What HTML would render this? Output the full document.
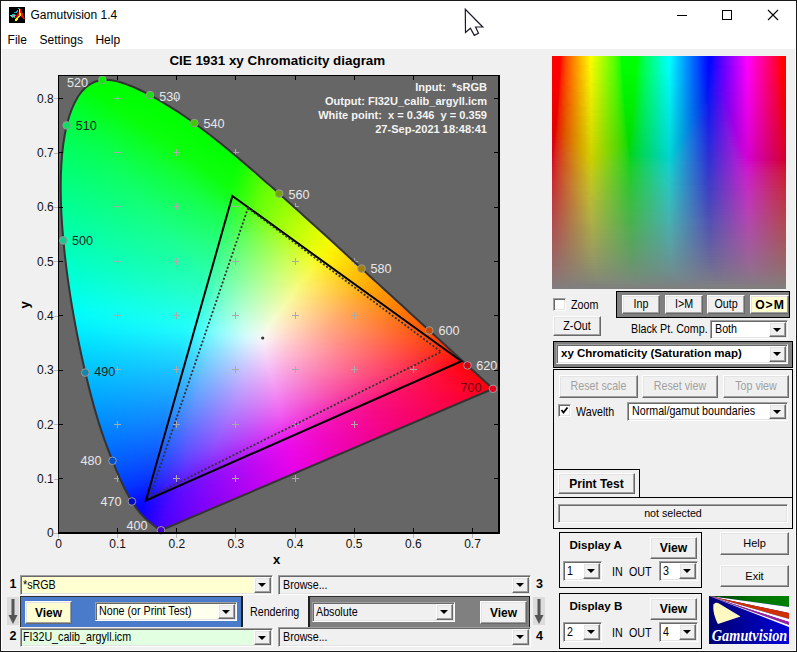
<!DOCTYPE html><html><head><meta charset="utf-8"><title>Gamutvision</title><style>
*{margin:0;padding:0;box-sizing:border-box}
html,body{width:797px;height:652px;overflow:hidden}
body{position:relative;background:#fff;font-family:"Liberation Sans",sans-serif;color:#000}
.a{position:absolute}
.b{position:absolute;background:#f0f0f0;border:1px solid;border-color:#fff #696969 #696969 #fff;box-shadow:inset -1px -1px #a0a0a0,inset 1px 1px #e3e3e3;text-align:center;white-space:nowrap;font-size:10.7px}
.s{position:absolute;background:#fff;border:1px solid;border-color:#a0a0a0 #fff #fff #a0a0a0;box-shadow:inset 1px 1px #696969,inset -1px -1px #e3e3e3;white-space:nowrap;font-size:10.7px;overflow:hidden}
.dd{position:absolute;top:1px;right:1px;bottom:1px;width:17px;background:#f0f0f0;border:1px solid;border-color:#fff #696969 #696969 #fff;box-shadow:inset -1px -1px #a0a0a0,inset 1px 1px #e3e3e3}
.dd:after{content:"";position:absolute;left:3px;top:5px;border-style:solid;border-width:4px 4px 0 4px;border-color:#000 transparent transparent transparent}
.t{position:absolute;white-space:nowrap;font-size:10.7px;line-height:1}
.pn{position:absolute;border:1px solid #000}
</style></head><body>
<div class="a" style="left:2px;top:49px;width:793px;height:601px;background:#f0f0f0"></div>
<div class="a" style="left:0;top:0;width:797px;height:652px;border:1px solid #1a1a1a"></div>
<svg class="a" style="left:9px;top:7px" width="16" height="16" viewBox="0 0 16 16" shape-rendering="crispEdges"><rect width="16" height="16" fill="#000"/><rect x="9" y="1" width="1" height="1" fill="#10b0b0"/><rect x="10" y="1" width="1" height="1" fill="#ff0000"/><rect x="10" y="2" width="1" height="1" fill="#ffff00"/><rect x="11" y="2" width="1" height="1" fill="#ff0000"/><rect x="8" y="3" width="1" height="1" fill="#10b0b0"/><rect x="10" y="3" width="1" height="1" fill="#ffff00"/><rect x="11" y="3" width="1" height="1" fill="#ff0000"/><rect x="7" y="4" width="1" height="1" fill="#10b0b0"/><rect x="8" y="4" width="1" height="1" fill="#10b0b0"/><rect x="10" y="4" width="1" height="1" fill="#ffff00"/><rect x="11" y="4" width="1" height="1" fill="#ff0000"/><rect x="12" y="4" width="1" height="1" fill="#ff0000"/><rect x="5" y="5" width="1" height="1" fill="#10b0b0"/><rect x="6" y="5" width="1" height="1" fill="#10b0b0"/><rect x="7" y="5" width="1" height="1" fill="#10b0b0"/><rect x="9" y="5" width="1" height="1" fill="#a00000"/><rect x="10" y="5" width="1" height="1" fill="#ffff00"/><rect x="11" y="5" width="1" height="1" fill="#ff0000"/><rect x="12" y="5" width="1" height="1" fill="#ff0000"/><rect x="8" y="6" width="1" height="1" fill="#a00000"/><rect x="9" y="6" width="1" height="1" fill="#a00000"/><rect x="10" y="6" width="1" height="1" fill="#ffff00"/><rect x="11" y="6" width="1" height="1" fill="#ffff00"/><rect x="12" y="6" width="1" height="1" fill="#ff0000"/><rect x="13" y="6" width="1" height="1" fill="#ff0000"/><rect x="3" y="7" width="1" height="1" fill="#10b0b0"/><rect x="4" y="7" width="1" height="1" fill="#a0a0a0"/><rect x="5" y="7" width="1" height="1" fill="#10b0b0"/><rect x="8" y="7" width="1" height="1" fill="#a00000"/><rect x="9" y="7" width="1" height="1" fill="#ff0000"/><rect x="10" y="7" width="1" height="1" fill="#ffff00"/><rect x="11" y="7" width="1" height="1" fill="#ffff00"/><rect x="12" y="7" width="1" height="1" fill="#ff0000"/><rect x="13" y="7" width="1" height="1" fill="#ff0000"/><rect x="1" y="8" width="1" height="1" fill="#00ffff"/><rect x="2" y="8" width="1" height="1" fill="#00ffff"/><rect x="3" y="8" width="1" height="1" fill="#a0a0a0"/><rect x="4" y="8" width="1" height="1" fill="#a0a0a0"/><rect x="5" y="8" width="1" height="1" fill="#a0a0a0"/><rect x="6" y="8" width="1" height="1" fill="#10b0b0"/><rect x="7" y="8" width="1" height="1" fill="#a00000"/><rect x="8" y="8" width="1" height="1" fill="#ff0000"/><rect x="9" y="8" width="1" height="1" fill="#ff0000"/><rect x="10" y="8" width="1" height="1" fill="#ffff00"/><rect x="11" y="8" width="1" height="1" fill="#ffff00"/><rect x="12" y="8" width="1" height="1" fill="#ff0000"/><rect x="13" y="8" width="1" height="1" fill="#ff0000"/><rect x="2" y="9" width="1" height="1" fill="#a0a0a0"/><rect x="3" y="9" width="1" height="1" fill="#a0a0a0"/><rect x="4" y="9" width="1" height="1" fill="#a0a0a0"/><rect x="5" y="9" width="1" height="1" fill="#a0a0a0"/><rect x="7" y="9" width="1" height="1" fill="#a00000"/><rect x="8" y="9" width="1" height="1" fill="#ff0000"/><rect x="9" y="9" width="1" height="1" fill="#ffff00"/><rect x="10" y="9" width="1" height="1" fill="#ffff00"/><rect x="12" y="9" width="1" height="1" fill="#ff0000"/><rect x="13" y="9" width="1" height="1" fill="#ff0000"/><rect x="14" y="9" width="1" height="1" fill="#ff0000"/><rect x="3" y="10" width="1" height="1" fill="#10b0b0"/><rect x="5" y="10" width="1" height="1" fill="#10b0b0"/><rect x="6" y="10" width="1" height="1" fill="#a00000"/><rect x="7" y="10" width="1" height="1" fill="#ff0000"/><rect x="8" y="10" width="1" height="1" fill="#ffff00"/><rect x="9" y="10" width="1" height="1" fill="#ffff00"/><rect x="13" y="10" width="1" height="1" fill="#ff0000"/><rect x="14" y="10" width="1" height="1" fill="#ff0000"/><rect x="6" y="11" width="1" height="1" fill="#a00000"/><rect x="7" y="11" width="1" height="1" fill="#ffff00"/><rect x="8" y="11" width="1" height="1" fill="#ffff00"/><rect x="14" y="11" width="1" height="1" fill="#ff0000"/><rect x="15" y="11" width="1" height="1" fill="#ff0000"/><rect x="6" y="12" width="1" height="1" fill="#ffff00"/><rect x="7" y="12" width="1" height="1" fill="#ffff00"/><rect x="8" y="12" width="1" height="1" fill="#ffff00"/><rect x="6" y="13" width="1" height="1" fill="#ffff00"/><rect x="7" y="13" width="1" height="1" fill="#ffff00"/></svg>
<div class="t" style="left:30.5px;top:9.2px;font-size:12.00px;color:#000">Gamutvision 1.4</div>
<div class="a" style="left:677px;top:15px;width:10px;height:1px;background:#000"></div>
<div class="a" style="left:722px;top:10px;width:10px;height:10px;border:1px solid #000"></div>
<svg class="a" style="left:767px;top:9px" width="12" height="12" viewBox="0 0 12 12"><path d="M1 1 L11 11 M11 1 L1 11" stroke="#000" stroke-width="1.1"/></svg>
<div class="t" style="left:7.6px;top:34.1px;font-size:12.00px">File</div>
<div class="t" style="left:39.6px;top:34.1px;font-size:12.00px">Settings</div>
<div class="t" style="left:95.4px;top:34.1px;font-size:12.00px">Help</div>
<svg class="a" style="left:0;top:0" width="797" height="40"><path d="M465.3 9.3 L465.5 32.4 L470.4 28.2 L474.3 35.4 L478.5 33.3 L475.6 27 L482.8 27 Z" fill="#fff" stroke="#1a1a2a" stroke-width="1.2" stroke-linejoin="miter"/></svg>
<svg class="a" style="left:0;top:0;font-family:Liberation Sans,sans-serif" width="797" height="652" viewBox="0 0 797 652"><defs><clipPath id="lc"><path d="M160.99 530.29 L160.95 530.30 L160.92 530.30 L160.89 530.30 L160.85 530.30 L160.81 530.29 L160.77 530.29 L160.73 530.29 L160.68 530.29 L160.63 530.29 L160.58 530.29 L160.52 530.30 L160.47 530.30 L160.41 530.30 L160.34 530.30 L160.28 530.29 L160.21 530.28 L160.14 530.25 L160.06 530.22 L159.97 530.18 L159.87 530.13 L159.75 530.07 L159.63 530.00 L159.50 529.93 L159.36 529.84 L159.22 529.75 L159.07 529.65 L158.91 529.54 L158.75 529.42 L158.58 529.29 L158.39 529.15 L158.18 528.99 L157.96 528.82 L157.72 528.64 L157.47 528.44 L157.20 528.23 L156.93 528.00 L156.65 527.76 L156.36 527.51 L156.05 527.25 L155.73 526.98 L155.38 526.70 L155.02 526.40 L154.63 526.09 L154.22 525.76 L153.77 525.40 L153.30 525.02 L152.79 524.62 L152.26 524.20 L151.70 523.75 L151.11 523.28 L150.51 522.80 L149.88 522.29 L149.22 521.76 L148.53 521.18 L147.80 520.57 L147.04 519.90 L146.24 519.19 L145.41 518.43 L144.55 517.62 L143.66 516.77 L142.75 515.86 L141.80 514.88 L140.81 513.80 L139.75 512.59 L138.63 511.22 L137.44 509.68 L136.16 507.94 L134.81 506.00 L133.39 503.86 L131.89 501.50 L130.33 498.92 L128.69 496.08 L126.98 492.96 L125.19 489.53 L123.32 485.75 L121.36 481.59 L119.31 477.04 L117.16 472.08 L114.89 466.67 L112.49 460.81 L109.98 454.47 L107.35 447.63 L104.65 440.27 L101.90 432.35 L99.13 423.87 L96.36 414.79 L93.60 405.13 L90.84 394.88 L88.09 384.05 L85.35 372.64 L82.62 360.68 L79.93 348.23 L77.30 335.36 L74.78 322.16 L72.40 308.70 L70.18 295.07 L68.14 281.34 L66.32 267.60 L64.71 253.93 L63.35 240.41 L62.25 227.13 L61.43 214.13 L60.90 201.44 L60.69 189.11 L60.81 177.18 L61.27 165.69 L62.08 154.70 L63.26 144.27 L64.80 134.47 L66.72 125.35 L69.02 116.98 L71.67 109.40 L74.65 102.64 L77.94 96.76 L81.51 91.78 L85.32 87.74 L89.35 84.60 L93.57 82.28 L97.94 80.75 L102.44 79.94 L107.03 79.78 L111.71 80.20 L116.44 81.11 L121.22 82.43 L126.04 84.07 L130.87 85.95 L135.70 88.03 L140.51 90.27 L145.28 92.64 L149.99 95.09 L154.63 97.61 L159.20 100.19 L163.70 102.83 L168.16 105.53 L172.58 108.30 L176.97 111.13 L181.32 114.03 L185.66 117.00 L189.98 120.03 L194.29 123.13 L198.58 126.28 L202.88 129.49 L207.16 132.75 L211.43 136.07 L215.69 139.42 L219.94 142.83 L224.19 146.27 L228.42 149.75 L232.64 153.26 L236.87 156.81 L241.09 160.38 L245.31 163.99 L249.53 167.62 L253.75 171.27 L257.98 174.95 L262.21 178.65 L266.45 182.38 L270.69 186.12 L274.92 189.87 L279.15 193.64 L283.37 197.42 L287.59 201.21 L291.80 205.00 L296.00 208.80 L300.21 212.60 L304.41 216.40 L308.61 220.20 L312.80 223.99 L316.98 227.78 L321.14 231.56 L325.29 235.33 L329.41 239.10 L333.52 242.85 L337.60 246.58 L341.66 250.30 L345.70 254.00 L349.72 257.68 L353.70 261.33 L357.66 264.95 L361.59 268.55 L365.49 272.13 L369.35 275.66 L373.17 279.17 L376.95 282.63 L380.69 286.05 L384.39 289.42 L388.04 292.75 L391.64 296.03 L395.18 299.26 L398.67 302.45 L402.10 305.60 L405.46 308.68 L408.74 311.70 L411.95 314.65 L415.06 317.50 L418.07 320.26 L420.99 322.94 L423.83 325.54 L426.60 328.07 L429.31 330.54 L431.96 332.96 L434.54 335.33 L437.06 337.63 L439.50 339.86 L441.85 342.00 L444.10 344.05 L446.27 346.02 L448.34 347.90 L450.34 349.71 L452.25 351.45 L454.09 353.13 L455.86 354.75 L457.55 356.31 L459.17 357.80 L460.71 359.22 L462.19 360.58 L463.60 361.88 L464.94 363.12 L466.22 364.29 L467.45 365.42 L468.63 366.49 L469.75 367.51 L470.83 368.48 L471.85 369.41 L472.83 370.31 L473.77 371.16 L474.67 371.98 L475.53 372.77 L476.35 373.54 L477.15 374.27 L477.92 374.98 L478.67 375.67 L479.39 376.33 L480.09 376.97 L480.76 377.58 L481.40 378.18 L482.02 378.74 L482.61 379.29 L483.17 379.81 L483.72 380.30 L484.24 380.77 L484.73 381.22 L485.21 381.64 L485.66 382.04 L486.08 382.42 L486.48 382.78 L486.85 383.12 L487.21 383.45 L487.54 383.76 L487.86 384.05 L488.16 384.33 L488.44 384.59 L488.71 384.84 L488.97 385.08 L489.22 385.30 L489.45 385.51 L489.66 385.71 L489.87 385.90 L490.05 386.07 L490.22 386.22 L490.37 386.36 L490.51 386.49 L490.64 386.61 L490.76 386.71 L490.87 386.82 L490.99 386.92 L491.10 387.03 L491.21 387.13 L491.31 387.22 L491.40 387.31 L491.49 387.39 L491.58 387.47 L491.66 387.54 L491.74 387.62 L491.82 387.69 L491.90 387.76 L491.98 387.84 L492.07 387.92 L492.15 387.99 L492.23 388.07 L492.31 388.14 L492.39 388.21 L492.46 388.28 L492.53 388.34 L492.59 388.40 L492.65 388.45 L492.70 388.50 L492.74 388.54 L492.79 388.58 L492.82 388.61 L492.86 388.64 L492.88 388.67 L492.91 388.69 L492.93 388.71 L492.94 388.72 L492.96 388.73 L492.97 388.75 L492.98 388.76 L492.99 388.77 L493.00 388.78 Z"/></clipPath><linearGradient id="g0" gradientUnits="userSpaceOnUse" x1="92.5" x2="121.5" y1="0" y2="0"><stop offset="0.000" stop-color="#00ff01"/><stop offset="1.000" stop-color="#00ff00"/></linearGradient><linearGradient id="g1" gradientUnits="userSpaceOnUse" x1="88.5" x2="127.5" y1="0" y2="0"><stop offset="0.000" stop-color="#00ff02"/><stop offset="1.000" stop-color="#00ff00"/></linearGradient><linearGradient id="g2" gradientUnits="userSpaceOnUse" x1="85.5" x2="132.5" y1="0" y2="0"><stop offset="0.000" stop-color="#00ff04"/><stop offset="1.000" stop-color="#00ff00"/></linearGradient><linearGradient id="g3" gradientUnits="userSpaceOnUse" x1="82.5" x2="137.5" y1="0" y2="0"><stop offset="0.000" stop-color="#00ff07"/><stop offset="0.691" stop-color="#01ff01"/><stop offset="1.000" stop-color="#00ff00"/></linearGradient><linearGradient id="g4" gradientUnits="userSpaceOnUse" x1="80.5" x2="141.5" y1="0" y2="0"><stop offset="0.000" stop-color="#00ff0c"/><stop offset="0.393" stop-color="#01ff02"/><stop offset="1.000" stop-color="#00ff00"/></linearGradient><linearGradient id="g5" gradientUnits="userSpaceOnUse" x1="79.5" x2="145.5" y1="0" y2="0"><stop offset="0.000" stop-color="#00ff10"/><stop offset="0.333" stop-color="#02ff03"/><stop offset="1.000" stop-color="#00ff00"/></linearGradient><linearGradient id="g6" gradientUnits="userSpaceOnUse" x1="77.5" x2="149.5" y1="0" y2="0"><stop offset="0.000" stop-color="#00ff15"/><stop offset="0.319" stop-color="#02ff04"/><stop offset="1.000" stop-color="#00ff00"/></linearGradient><linearGradient id="g7" gradientUnits="userSpaceOnUse" x1="76.5" x2="153.5" y1="0" y2="0"><stop offset="0.000" stop-color="#00ff1a"/><stop offset="0.325" stop-color="#02ff05"/><stop offset="1.000" stop-color="#00ff00"/></linearGradient><linearGradient id="g8" gradientUnits="userSpaceOnUse" x1="74.5" x2="157.5" y1="0" y2="0"><stop offset="0.000" stop-color="#00ff20"/><stop offset="0.337" stop-color="#02ff06"/><stop offset="1.000" stop-color="#00ff00"/></linearGradient><linearGradient id="g9" gradientUnits="userSpaceOnUse" x1="73.5" x2="160.5" y1="0" y2="0"><stop offset="0.000" stop-color="#00ff24"/><stop offset="0.356" stop-color="#03ff07"/><stop offset="1.000" stop-color="#01ff01"/></linearGradient><linearGradient id="g10" gradientUnits="userSpaceOnUse" x1="72.5" x2="164.5" y1="0" y2="0"><stop offset="0.000" stop-color="#00ff28"/><stop offset="0.380" stop-color="#03ff07"/><stop offset="1.000" stop-color="#00ff00"/></linearGradient><linearGradient id="g11" gradientUnits="userSpaceOnUse" x1="71.5" x2="167.5" y1="0" y2="0"><stop offset="0.000" stop-color="#00ff2c"/><stop offset="0.406" stop-color="#04ff07"/><stop offset="1.000" stop-color="#01ff01"/></linearGradient><linearGradient id="g12" gradientUnits="userSpaceOnUse" x1="70.5" x2="171.5" y1="0" y2="0"><stop offset="0.000" stop-color="#00ff30"/><stop offset="0.426" stop-color="#04ff08"/><stop offset="1.000" stop-color="#00ff00"/></linearGradient><linearGradient id="g13" gradientUnits="userSpaceOnUse" x1="69.5" x2="174.5" y1="0" y2="0"><stop offset="0.000" stop-color="#00ff33"/><stop offset="0.448" stop-color="#05ff08"/><stop offset="1.000" stop-color="#00ff00"/></linearGradient><linearGradient id="g14" gradientUnits="userSpaceOnUse" x1="69.5" x2="177.5" y1="0" y2="0"><stop offset="0.000" stop-color="#00ff36"/><stop offset="0.463" stop-color="#05ff08"/><stop offset="1.000" stop-color="#01ff01"/></linearGradient><linearGradient id="g15" gradientUnits="userSpaceOnUse" x1="68.5" x2="180.5" y1="0" y2="0"><stop offset="0.000" stop-color="#00ff39"/><stop offset="0.482" stop-color="#06ff08"/><stop offset="1.000" stop-color="#01ff01"/></linearGradient><linearGradient id="g16" gradientUnits="userSpaceOnUse" x1="67.5" x2="183.5" y1="0" y2="0"><stop offset="0.000" stop-color="#00ff3c"/><stop offset="0.500" stop-color="#06ff09"/><stop offset="1.000" stop-color="#01ff01"/></linearGradient><linearGradient id="g17" gradientUnits="userSpaceOnUse" x1="66.5" x2="186.5" y1="0" y2="0"><stop offset="0.000" stop-color="#00ff3f"/><stop offset="0.383" stop-color="#06ff15"/><stop offset="0.575" stop-color="#06ff07"/><stop offset="1.000" stop-color="#01ff01"/></linearGradient><linearGradient id="g18" gradientUnits="userSpaceOnUse" x1="66.5" x2="189.5" y1="0" y2="0"><stop offset="0.000" stop-color="#00ff42"/><stop offset="0.374" stop-color="#06ff18"/><stop offset="0.561" stop-color="#07ff08"/><stop offset="1.000" stop-color="#01ff01"/></linearGradient><linearGradient id="g19" gradientUnits="userSpaceOnUse" x1="65.5" x2="192.5" y1="0" y2="0"><stop offset="0.000" stop-color="#00ff45"/><stop offset="0.362" stop-color="#06ff1d"/><stop offset="0.559" stop-color="#07ff09"/><stop offset="1.000" stop-color="#01ff01"/></linearGradient><linearGradient id="g20" gradientUnits="userSpaceOnUse" x1="65.5" x2="194.5" y1="0" y2="0"><stop offset="0.000" stop-color="#00ff47"/><stop offset="0.364" stop-color="#07ff20"/><stop offset="0.566" stop-color="#08ff09"/><stop offset="1.000" stop-color="#01ff01"/></linearGradient><linearGradient id="g21" gradientUnits="userSpaceOnUse" x1="64.5" x2="197.5" y1="0" y2="0"><stop offset="0.000" stop-color="#00ff4a"/><stop offset="0.361" stop-color="#07ff23"/><stop offset="0.571" stop-color="#08ff0a"/><stop offset="1.000" stop-color="#01ff01"/></linearGradient><linearGradient id="g22" gradientUnits="userSpaceOnUse" x1="64.5" x2="200.5" y1="0" y2="0"><stop offset="0.000" stop-color="#00ff4c"/><stop offset="0.360" stop-color="#07ff25"/><stop offset="0.574" stop-color="#08ff0b"/><stop offset="1.000" stop-color="#01ff01"/></linearGradient><linearGradient id="g23" gradientUnits="userSpaceOnUse" x1="63.5" x2="203.5" y1="0" y2="0"><stop offset="0.000" stop-color="#00ff4e"/><stop offset="0.357" stop-color="#08ff29"/><stop offset="0.586" stop-color="#09ff0b"/><stop offset="1.000" stop-color="#01ff01"/></linearGradient><linearGradient id="g24" gradientUnits="userSpaceOnUse" x1="63.5" x2="205.5" y1="0" y2="0"><stop offset="0.000" stop-color="#00ff50"/><stop offset="0.359" stop-color="#08ff2b"/><stop offset="0.592" stop-color="#09ff0b"/><stop offset="1.000" stop-color="#01ff01"/></linearGradient><linearGradient id="g25" gradientUnits="userSpaceOnUse" x1="62.5" x2="208.5" y1="0" y2="0"><stop offset="0.000" stop-color="#00ff53"/><stop offset="0.342" stop-color="#08ff30"/><stop offset="0.603" stop-color="#09ff0c"/><stop offset="1.000" stop-color="#01ff01"/></linearGradient><linearGradient id="g26" gradientUnits="userSpaceOnUse" x1="62.5" x2="210.5" y1="0" y2="0"><stop offset="0.000" stop-color="#00ff54"/><stop offset="0.338" stop-color="#08ff33"/><stop offset="0.615" stop-color="#0aff0c"/><stop offset="1.000" stop-color="#01ff01"/></linearGradient><linearGradient id="g27" gradientUnits="userSpaceOnUse" x1="62.5" x2="213.5" y1="0" y2="0"><stop offset="0.000" stop-color="#00ff56"/><stop offset="0.338" stop-color="#09ff35"/><stop offset="0.623" stop-color="#0aff0c"/><stop offset="1.000" stop-color="#01ff01"/></linearGradient><linearGradient id="g28" gradientUnits="userSpaceOnUse" x1="61.5" x2="216.5" y1="0" y2="0"><stop offset="0.000" stop-color="#00ff59"/><stop offset="0.316" stop-color="#08ff3a"/><stop offset="0.639" stop-color="#0aff0c"/><stop offset="1.000" stop-color="#01ff01"/></linearGradient><linearGradient id="g29" gradientUnits="userSpaceOnUse" x1="61.5" x2="218.5" y1="0" y2="0"><stop offset="0.000" stop-color="#00ff5a"/><stop offset="0.312" stop-color="#09ff3d"/><stop offset="0.650" stop-color="#0aff0c"/><stop offset="1.000" stop-color="#01ff01"/></linearGradient><linearGradient id="g30" gradientUnits="userSpaceOnUse" x1="61.5" x2="221.5" y1="0" y2="0"><stop offset="0.000" stop-color="#00ff5c"/><stop offset="0.312" stop-color="#09ff3f"/><stop offset="0.656" stop-color="#0aff0c"/><stop offset="1.000" stop-color="#01ff01"/></linearGradient><linearGradient id="g31" gradientUnits="userSpaceOnUse" x1="60.5" x2="223.5" y1="0" y2="0"><stop offset="0.000" stop-color="#00ff5e"/><stop offset="0.301" stop-color="#09ff43"/><stop offset="0.552" stop-color="#0cff1c"/><stop offset="0.693" stop-color="#0aff0b"/><stop offset="1.000" stop-color="#01ff01"/></linearGradient><linearGradient id="g32" gradientUnits="userSpaceOnUse" x1="60.5" x2="226.5" y1="0" y2="0"><stop offset="0.000" stop-color="#00ff60"/><stop offset="0.295" stop-color="#09ff46"/><stop offset="0.542" stop-color="#0cff20"/><stop offset="0.681" stop-color="#0aff0c"/><stop offset="1.000" stop-color="#01ff01"/></linearGradient><linearGradient id="g33" gradientUnits="userSpaceOnUse" x1="60.5" x2="228.5" y1="0" y2="0"><stop offset="0.000" stop-color="#00ff62"/><stop offset="0.298" stop-color="#09ff47"/><stop offset="0.548" stop-color="#0dff21"/><stop offset="0.690" stop-color="#0aff0c"/><stop offset="1.000" stop-color="#01ff01"/></linearGradient><linearGradient id="g34" gradientUnits="userSpaceOnUse" x1="60.5" x2="230.5" y1="0" y2="0"><stop offset="0.000" stop-color="#00ff64"/><stop offset="0.300" stop-color="#0aff49"/><stop offset="0.547" stop-color="#0dff24"/><stop offset="0.688" stop-color="#0bff0d"/><stop offset="1.000" stop-color="#01ff01"/></linearGradient><linearGradient id="g35" gradientUnits="userSpaceOnUse" x1="59.5" x2="233.5" y1="0" y2="0"><stop offset="0.000" stop-color="#00ff66"/><stop offset="0.293" stop-color="#0aff4c"/><stop offset="0.546" stop-color="#0eff26"/><stop offset="0.690" stop-color="#0bff0d"/><stop offset="1.000" stop-color="#01ff01"/></linearGradient><linearGradient id="g36" gradientUnits="userSpaceOnUse" x1="59.5" x2="235.5" y1="0" y2="0"><stop offset="0.000" stop-color="#00ff68"/><stop offset="0.295" stop-color="#0aff4e"/><stop offset="0.551" stop-color="#0eff28"/><stop offset="0.699" stop-color="#0bff0d"/><stop offset="1.000" stop-color="#02ff01"/></linearGradient><linearGradient id="g37" gradientUnits="userSpaceOnUse" x1="59.5" x2="238.5" y1="0" y2="0"><stop offset="0.000" stop-color="#00ff6a"/><stop offset="0.302" stop-color="#0bff4f"/><stop offset="0.553" stop-color="#0eff29"/><stop offset="0.698" stop-color="#0bff0e"/><stop offset="0.989" stop-color="#03ff01"/><stop offset="1.000" stop-color="#05ff01"/></linearGradient><linearGradient id="g38" gradientUnits="userSpaceOnUse" x1="59.5" x2="240.5" y1="0" y2="0"><stop offset="0.000" stop-color="#00ff6b"/><stop offset="0.304" stop-color="#0bff51"/><stop offset="0.558" stop-color="#0fff2b"/><stop offset="0.707" stop-color="#0bff0e"/><stop offset="0.978" stop-color="#04ff01"/><stop offset="1.000" stop-color="#09ff01"/></linearGradient><linearGradient id="g39" gradientUnits="userSpaceOnUse" x1="59.5" x2="242.5" y1="0" y2="0"><stop offset="0.000" stop-color="#00ff6d"/><stop offset="0.306" stop-color="#0bff53"/><stop offset="0.563" stop-color="#0fff2c"/><stop offset="0.716" stop-color="#0cff0e"/><stop offset="0.967" stop-color="#05ff01"/><stop offset="1.000" stop-color="#0eff01"/></linearGradient><linearGradient id="g40" gradientUnits="userSpaceOnUse" x1="59.5" x2="245.5" y1="0" y2="0"><stop offset="0.000" stop-color="#00ff6f"/><stop offset="0.306" stop-color="#0cff54"/><stop offset="0.565" stop-color="#0fff2d"/><stop offset="0.715" stop-color="#0cff0e"/><stop offset="0.946" stop-color="#05ff02"/><stop offset="0.995" stop-color="#15ff01"/><stop offset="1.000" stop-color="#18ff01"/></linearGradient><linearGradient id="g41" gradientUnits="userSpaceOnUse" x1="58.5" x2="247.5" y1="0" y2="0"><stop offset="0.000" stop-color="#00ff71"/><stop offset="0.307" stop-color="#0cff57"/><stop offset="0.571" stop-color="#10ff2f"/><stop offset="0.725" stop-color="#0cff0e"/><stop offset="0.937" stop-color="#06ff03"/><stop offset="0.984" stop-color="#17ff01"/><stop offset="1.000" stop-color="#20ff01"/></linearGradient><linearGradient id="g42" gradientUnits="userSpaceOnUse" x1="58.5" x2="249.5" y1="0" y2="0"><stop offset="0.000" stop-color="#00ff73"/><stop offset="0.309" stop-color="#0cff59"/><stop offset="0.576" stop-color="#10ff30"/><stop offset="0.728" stop-color="#0cff0f"/><stop offset="0.927" stop-color="#07ff03"/><stop offset="0.974" stop-color="#19ff01"/><stop offset="1.000" stop-color="#29ff01"/></linearGradient><linearGradient id="g43" gradientUnits="userSpaceOnUse" x1="58.5" x2="252.5" y1="0" y2="0"><stop offset="0.000" stop-color="#00ff74"/><stop offset="0.314" stop-color="#0cff5a"/><stop offset="0.577" stop-color="#10ff32"/><stop offset="0.732" stop-color="#0cff0f"/><stop offset="0.912" stop-color="#08ff04"/><stop offset="0.964" stop-color="#1eff02"/><stop offset="1.000" stop-color="#34ff01"/></linearGradient><linearGradient id="g44" gradientUnits="userSpaceOnUse" x1="58.5" x2="254.5" y1="0" y2="0"><stop offset="0.000" stop-color="#00ff76"/><stop offset="0.316" stop-color="#0dff5b"/><stop offset="0.582" stop-color="#11ff33"/><stop offset="0.740" stop-color="#0cff0e"/><stop offset="0.898" stop-color="#08ff05"/><stop offset="0.944" stop-color="#1aff02"/><stop offset="1.000" stop-color="#3cff01"/></linearGradient><linearGradient id="g45" gradientUnits="userSpaceOnUse" x1="58.5" x2="256.5" y1="0" y2="0"><stop offset="0.000" stop-color="#00ff78"/><stop offset="0.323" stop-color="#0dff5c"/><stop offset="0.586" stop-color="#11ff34"/><stop offset="0.747" stop-color="#0cff0e"/><stop offset="0.889" stop-color="#09ff05"/><stop offset="0.934" stop-color="#1cff03"/><stop offset="1.000" stop-color="#43ff01"/></linearGradient><linearGradient id="g46" gradientUnits="userSpaceOnUse" x1="58.5" x2="259.5" y1="0" y2="0"><stop offset="0.000" stop-color="#01ff7a"/><stop offset="0.323" stop-color="#0eff5e"/><stop offset="0.587" stop-color="#11ff36"/><stop offset="0.746" stop-color="#0cff0f"/><stop offset="0.876" stop-color="#0bff06"/><stop offset="0.925" stop-color="#21ff03"/><stop offset="1.000" stop-color="#4cff01"/></linearGradient><linearGradient id="g47" gradientUnits="userSpaceOnUse" x1="58.5" x2="261.5" y1="0" y2="0"><stop offset="0.000" stop-color="#01ff7b"/><stop offset="0.325" stop-color="#0eff60"/><stop offset="0.591" stop-color="#12ff37"/><stop offset="0.754" stop-color="#0cff0f"/><stop offset="0.862" stop-color="#0bff07"/><stop offset="0.911" stop-color="#20ff04"/><stop offset="1.000" stop-color="#52ff01"/></linearGradient><linearGradient id="g48" gradientUnits="userSpaceOnUse" x1="58.5" x2="263.5" y1="0" y2="0"><stop offset="0.000" stop-color="#01ff7d"/><stop offset="0.332" stop-color="#0eff61"/><stop offset="0.595" stop-color="#12ff38"/><stop offset="0.761" stop-color="#0cff0f"/><stop offset="0.854" stop-color="#0cff07"/><stop offset="0.902" stop-color="#22ff05"/><stop offset="0.990" stop-color="#54ff01"/><stop offset="1.000" stop-color="#58ff01"/></linearGradient><linearGradient id="g49" gradientUnits="userSpaceOnUse" x1="58.5" x2="265.5" y1="0" y2="0"><stop offset="0.000" stop-color="#01ff7f"/><stop offset="0.333" stop-color="#0fff63"/><stop offset="0.599" stop-color="#12ff3a"/><stop offset="0.768" stop-color="#0cff0e"/><stop offset="0.845" stop-color="#0dff08"/><stop offset="0.894" stop-color="#24ff05"/><stop offset="0.981" stop-color="#56ff01"/><stop offset="1.000" stop-color="#5eff01"/></linearGradient><linearGradient id="g50" gradientUnits="userSpaceOnUse" x1="58.5" x2="268.5" y1="0" y2="0"><stop offset="0.000" stop-color="#01ff81"/><stop offset="0.338" stop-color="#0fff64"/><stop offset="0.600" stop-color="#13ff3b"/><stop offset="0.767" stop-color="#0cff0f"/><stop offset="0.833" stop-color="#0fff09"/><stop offset="0.886" stop-color="#2aff06"/><stop offset="0.971" stop-color="#5aff01"/><stop offset="1.000" stop-color="#66ff01"/></linearGradient><linearGradient id="g51" gradientUnits="userSpaceOnUse" x1="58.5" x2="270.5" y1="0" y2="0"><stop offset="0.000" stop-color="#01ff82"/><stop offset="0.340" stop-color="#10ff66"/><stop offset="0.599" stop-color="#13ff3e"/><stop offset="0.774" stop-color="#0cff0f"/><stop offset="0.830" stop-color="#12ff09"/><stop offset="0.967" stop-color="#5dff02"/><stop offset="1.000" stop-color="#6bff01"/></linearGradient><linearGradient id="g52" gradientUnits="userSpaceOnUse" x1="58.5" x2="272.5" y1="0" y2="0"><stop offset="0.000" stop-color="#01ff84"/><stop offset="0.341" stop-color="#10ff67"/><stop offset="0.603" stop-color="#13ff3f"/><stop offset="0.780" stop-color="#0dff0f"/><stop offset="0.827" stop-color="#15ff0a"/><stop offset="0.949" stop-color="#5bff03"/><stop offset="1.000" stop-color="#70ff01"/></linearGradient><linearGradient id="g53" gradientUnits="userSpaceOnUse" x1="58.5" x2="275.5" y1="0" y2="0"><stop offset="0.000" stop-color="#01ff86"/><stop offset="0.341" stop-color="#10ff69"/><stop offset="0.604" stop-color="#14ff40"/><stop offset="0.783" stop-color="#0eff0e"/><stop offset="0.829" stop-color="#1eff0a"/><stop offset="0.931" stop-color="#5aff03"/><stop offset="1.000" stop-color="#77ff01"/></linearGradient><linearGradient id="g54" gradientUnits="userSpaceOnUse" x1="58.5" x2="277.5" y1="0" y2="0"><stop offset="0.000" stop-color="#01ff88"/><stop offset="0.347" stop-color="#11ff6a"/><stop offset="0.607" stop-color="#14ff41"/><stop offset="0.781" stop-color="#10ff10"/><stop offset="0.826" stop-color="#23ff0a"/><stop offset="0.922" stop-color="#5cff04"/><stop offset="1.000" stop-color="#7cff01"/></linearGradient><linearGradient id="g55" gradientUnits="userSpaceOnUse" x1="58.5" x2="279.5" y1="0" y2="0"><stop offset="0.000" stop-color="#01ff89"/><stop offset="0.348" stop-color="#11ff6c"/><stop offset="0.611" stop-color="#14ff43"/><stop offset="0.774" stop-color="#11ff12"/><stop offset="0.819" stop-color="#26ff0b"/><stop offset="0.919" stop-color="#60ff04"/><stop offset="1.000" stop-color="#81ff01"/></linearGradient><linearGradient id="g56" gradientUnits="userSpaceOnUse" x1="58.5" x2="281.5" y1="0" y2="0"><stop offset="0.000" stop-color="#01ff8b"/><stop offset="0.350" stop-color="#11ff6e"/><stop offset="0.610" stop-color="#15ff45"/><stop offset="0.762" stop-color="#12ff16"/><stop offset="0.807" stop-color="#25ff0d"/><stop offset="0.910" stop-color="#61ff05"/><stop offset="1.000" stop-color="#86ff01"/></linearGradient><linearGradient id="g57" gradientUnits="userSpaceOnUse" x1="58.5" x2="284.5" y1="0" y2="0"><stop offset="0.000" stop-color="#01ff8d"/><stop offset="0.350" stop-color="#12ff6f"/><stop offset="0.611" stop-color="#15ff46"/><stop offset="0.752" stop-color="#13ff1a"/><stop offset="0.801" stop-color="#2aff0e"/><stop offset="0.898" stop-color="#63ff05"/><stop offset="1.000" stop-color="#8cff01"/></linearGradient><linearGradient id="g58" gradientUnits="userSpaceOnUse" x1="58.5" x2="286.5" y1="0" y2="0"><stop offset="0.000" stop-color="#01ff8e"/><stop offset="0.355" stop-color="#12ff71"/><stop offset="0.614" stop-color="#15ff48"/><stop offset="0.741" stop-color="#13ff20"/><stop offset="0.789" stop-color="#2aff11"/><stop offset="0.890" stop-color="#65ff06"/><stop offset="1.000" stop-color="#91ff01"/></linearGradient><linearGradient id="g59" gradientUnits="userSpaceOnUse" x1="58.5" x2="288.5" y1="0" y2="0"><stop offset="0.000" stop-color="#01ff90"/><stop offset="0.357" stop-color="#13ff72"/><stop offset="0.613" stop-color="#16ff4a"/><stop offset="0.735" stop-color="#15ff24"/><stop offset="0.783" stop-color="#2cff14"/><stop offset="0.887" stop-color="#69ff07"/><stop offset="1.000" stop-color="#96ff01"/></linearGradient><linearGradient id="g60" gradientUnits="userSpaceOnUse" x1="58.5" x2="290.5" y1="0" y2="0"><stop offset="0.000" stop-color="#01ff92"/><stop offset="0.358" stop-color="#13ff74"/><stop offset="0.616" stop-color="#16ff4b"/><stop offset="0.724" stop-color="#15ff2a"/><stop offset="0.772" stop-color="#2cff19"/><stop offset="0.862" stop-color="#62ff09"/><stop offset="1.000" stop-color="#9bff01"/></linearGradient><linearGradient id="g61" gradientUnits="userSpaceOnUse" x1="58.5" x2="292.5" y1="0" y2="0"><stop offset="0.000" stop-color="#00ff94"/><stop offset="0.359" stop-color="#13ff76"/><stop offset="0.615" stop-color="#16ff4e"/><stop offset="0.718" stop-color="#17ff2f"/><stop offset="0.769" stop-color="#31ff1c"/><stop offset="0.855" stop-color="#64ff09"/><stop offset="1.000" stop-color="#9fff01"/></linearGradient><linearGradient id="g62" gradientUnits="userSpaceOnUse" x1="58.5" x2="295.5" y1="0" y2="0"><stop offset="0.000" stop-color="#00ff95"/><stop offset="0.363" stop-color="#14ff77"/><stop offset="0.612" stop-color="#17ff50"/><stop offset="0.705" stop-color="#17ff35"/><stop offset="0.751" stop-color="#2eff23"/><stop offset="0.835" stop-color="#61ff0c"/><stop offset="0.987" stop-color="#a1ff01"/><stop offset="1.000" stop-color="#a6ff01"/></linearGradient><linearGradient id="g63" gradientUnits="userSpaceOnUse" x1="58.5" x2="297.5" y1="0" y2="0"><stop offset="0.000" stop-color="#00ff97"/><stop offset="0.364" stop-color="#14ff79"/><stop offset="0.611" stop-color="#17ff52"/><stop offset="0.699" stop-color="#18ff3a"/><stop offset="0.749" stop-color="#33ff26"/><stop offset="0.833" stop-color="#65ff0d"/><stop offset="0.992" stop-color="#a7ff01"/><stop offset="1.000" stop-color="#aaff01"/></linearGradient><linearGradient id="g64" gradientUnits="userSpaceOnUse" x1="58.5" x2="299.5" y1="0" y2="0"><stop offset="0.000" stop-color="#00ff99"/><stop offset="0.365" stop-color="#14ff7b"/><stop offset="0.610" stop-color="#17ff54"/><stop offset="0.689" stop-color="#19ff3f"/><stop offset="0.739" stop-color="#33ff2d"/><stop offset="0.830" stop-color="#69ff0e"/><stop offset="0.996" stop-color="#adff01"/><stop offset="1.000" stop-color="#afff01"/></linearGradient><linearGradient id="g65" gradientUnits="userSpaceOnUse" x1="58.5" x2="301.5" y1="0" y2="0"><stop offset="0.000" stop-color="#00ff9b"/><stop offset="0.366" stop-color="#15ff7c"/><stop offset="0.609" stop-color="#18ff56"/><stop offset="0.683" stop-color="#1aff43"/><stop offset="0.737" stop-color="#38ff30"/><stop offset="0.831" stop-color="#6fff0e"/><stop offset="1.000" stop-color="#b4ff01"/></linearGradient><linearGradient id="g66" gradientUnits="userSpaceOnUse" x1="58.5" x2="303.5" y1="0" y2="0"><stop offset="0.000" stop-color="#00ff9c"/><stop offset="0.371" stop-color="#15ff7e"/><stop offset="0.608" stop-color="#18ff59"/><stop offset="0.678" stop-color="#1bff47"/><stop offset="0.837" stop-color="#76ff0e"/><stop offset="1.000" stop-color="#b8ff01"/></linearGradient><linearGradient id="g67" gradientUnits="userSpaceOnUse" x1="58.5" x2="306.5" y1="0" y2="0"><stop offset="0.000" stop-color="#00ff9e"/><stop offset="0.371" stop-color="#16ff7f"/><stop offset="0.605" stop-color="#19ff5b"/><stop offset="0.665" stop-color="#1cff4c"/><stop offset="0.722" stop-color="#3dff39"/><stop offset="0.835" stop-color="#7cff0f"/><stop offset="1.000" stop-color="#bfff01"/></linearGradient><linearGradient id="g68" gradientUnits="userSpaceOnUse" x1="59.5" x2="308.5" y1="0" y2="0"><stop offset="0.000" stop-color="#00ffa0"/><stop offset="0.378" stop-color="#16ff80"/><stop offset="0.610" stop-color="#19ff5b"/><stop offset="0.663" stop-color="#1fff4e"/><stop offset="0.783" stop-color="#67ff21"/><stop offset="0.859" stop-color="#8cff0b"/><stop offset="1.000" stop-color="#c3ff01"/></linearGradient><linearGradient id="g69" gradientUnits="userSpaceOnUse" x1="59.5" x2="310.5" y1="0" y2="0"><stop offset="0.000" stop-color="#00ffa2"/><stop offset="0.378" stop-color="#17ff82"/><stop offset="0.610" stop-color="#19ff5d"/><stop offset="0.657" stop-color="#20ff52"/><stop offset="0.773" stop-color="#67ff28"/><stop offset="0.853" stop-color="#8eff0c"/><stop offset="1.000" stop-color="#c8ff01"/></linearGradient><linearGradient id="g70" gradientUnits="userSpaceOnUse" x1="59.5" x2="312.5" y1="0" y2="0"><stop offset="0.000" stop-color="#00ffa3"/><stop offset="0.379" stop-color="#17ff84"/><stop offset="0.625" stop-color="#1bff5c"/><stop offset="0.664" stop-color="#29ff52"/><stop offset="0.771" stop-color="#6bff2b"/><stop offset="0.854" stop-color="#93ff0d"/><stop offset="1.000" stop-color="#cdff01"/></linearGradient><linearGradient id="g71" gradientUnits="userSpaceOnUse" x1="59.5" x2="315.5" y1="0" y2="0"><stop offset="0.000" stop-color="#00ffa5"/><stop offset="0.383" stop-color="#17ff85"/><stop offset="0.621" stop-color="#1cff5e"/><stop offset="0.660" stop-color="#2eff54"/><stop offset="0.758" stop-color="#6aff32"/><stop offset="0.848" stop-color="#96ff0e"/><stop offset="0.996" stop-color="#d2ff01"/><stop offset="1.000" stop-color="#d3ff01"/></linearGradient><linearGradient id="g72" gradientUnits="userSpaceOnUse" x1="59.5" x2="317.5" y1="0" y2="0"><stop offset="0.000" stop-color="#00ffa7"/><stop offset="0.384" stop-color="#18ff87"/><stop offset="0.620" stop-color="#1eff60"/><stop offset="0.663" stop-color="#36ff55"/><stop offset="0.775" stop-color="#79ff2c"/><stop offset="0.857" stop-color="#9fff0d"/><stop offset="1.000" stop-color="#d8ff01"/></linearGradient><linearGradient id="g73" gradientUnits="userSpaceOnUse" x1="59.5" x2="319.5" y1="0" y2="0"><stop offset="0.000" stop-color="#00ffa9"/><stop offset="0.385" stop-color="#18ff89"/><stop offset="0.615" stop-color="#1fff63"/><stop offset="0.662" stop-color="#3bff58"/><stop offset="0.773" stop-color="#7cff30"/><stop offset="0.858" stop-color="#a4ff0e"/><stop offset="1.000" stop-color="#dcff01"/></linearGradient><linearGradient id="g74" gradientUnits="userSpaceOnUse" x1="59.5" x2="321.5" y1="0" y2="0"><stop offset="0.000" stop-color="#00ffaa"/><stop offset="0.389" stop-color="#18ff8a"/><stop offset="0.607" stop-color="#20ff67"/><stop offset="0.649" stop-color="#38ff5d"/><stop offset="0.744" stop-color="#72ff3f"/><stop offset="0.859" stop-color="#a9ff0e"/><stop offset="0.992" stop-color="#deff01"/><stop offset="1.000" stop-color="#e1ff01"/></linearGradient><linearGradient id="g75" gradientUnits="userSpaceOnUse" x1="60.5" x2="323.5" y1="0" y2="0"><stop offset="0.000" stop-color="#00ffac"/><stop offset="0.392" stop-color="#19ff8b"/><stop offset="0.601" stop-color="#21ff6a"/><stop offset="0.646" stop-color="#3dff60"/><stop offset="0.768" stop-color="#84ff36"/><stop offset="0.863" stop-color="#b0ff0e"/><stop offset="0.996" stop-color="#e4ff01"/><stop offset="1.000" stop-color="#e6fe01"/></linearGradient><linearGradient id="g76" gradientUnits="userSpaceOnUse" x1="60.5" x2="326.5" y1="0" y2="0"><stop offset="0.000" stop-color="#00ffae"/><stop offset="0.391" stop-color="#19ff8d"/><stop offset="0.590" stop-color="#21ff6e"/><stop offset="0.632" stop-color="#3aff65"/><stop offset="0.707" stop-color="#69ff4f"/><stop offset="0.850" stop-color="#b0ff12"/><stop offset="0.940" stop-color="#d5ff04"/><stop offset="1.000" stop-color="#ecfe01"/></linearGradient><linearGradient id="g77" gradientUnits="userSpaceOnUse" x1="60.5" x2="328.5" y1="0" y2="0"><stop offset="0.000" stop-color="#00ffb0"/><stop offset="0.396" stop-color="#1aff8f"/><stop offset="0.586" stop-color="#23ff71"/><stop offset="0.634" stop-color="#42ff66"/><stop offset="0.761" stop-color="#8bff3d"/><stop offset="0.866" stop-color="#bbff0e"/><stop offset="0.985" stop-color="#ebfe01"/><stop offset="1.000" stop-color="#f0fd01"/></linearGradient><linearGradient id="g78" gradientUnits="userSpaceOnUse" x1="60.5" x2="330.5" y1="0" y2="0"><stop offset="0.000" stop-color="#00ffb1"/><stop offset="0.396" stop-color="#1aff91"/><stop offset="0.578" stop-color="#23ff75"/><stop offset="0.619" stop-color="#3cff6c"/><stop offset="0.685" stop-color="#67ff5a"/><stop offset="0.793" stop-color="#9fff30"/><stop offset="0.874" stop-color="#c3ff0d"/><stop offset="1.000" stop-color="#f4fc01"/></linearGradient><linearGradient id="g79" gradientUnits="userSpaceOnUse" x1="60.5" x2="332.5" y1="0" y2="0"><stop offset="0.000" stop-color="#00ffb3"/><stop offset="0.401" stop-color="#1bff92"/><stop offset="0.570" stop-color="#23ff78"/><stop offset="0.610" stop-color="#3cff70"/><stop offset="0.673" stop-color="#65ff60"/><stop offset="0.787" stop-color="#a1ff36"/><stop offset="0.875" stop-color="#c8ff0e"/><stop offset="0.996" stop-color="#f6fb01"/><stop offset="1.000" stop-color="#f7fa01"/></linearGradient><linearGradient id="g80" gradientUnits="userSpaceOnUse" x1="60.5" x2="334.5" y1="0" y2="0"><stop offset="0.000" stop-color="#00ffb5"/><stop offset="0.401" stop-color="#1bff94"/><stop offset="0.566" stop-color="#24ff7b"/><stop offset="0.609" stop-color="#41ff72"/><stop offset="0.675" stop-color="#6bff61"/><stop offset="0.788" stop-color="#a6ff37"/><stop offset="0.876" stop-color="#cdff0e"/><stop offset="0.985" stop-color="#f7fb01"/><stop offset="1.000" stop-color="#faf801"/></linearGradient><linearGradient id="g81" gradientUnits="userSpaceOnUse" x1="61.5" x2="337.5" y1="0" y2="0"><stop offset="0.000" stop-color="#00ffb7"/><stop offset="0.406" stop-color="#1cff95"/><stop offset="0.554" stop-color="#24ff7f"/><stop offset="0.594" stop-color="#3eff77"/><stop offset="0.656" stop-color="#67ff68"/><stop offset="0.779" stop-color="#a8ff3c"/><stop offset="0.877" stop-color="#d4ff0e"/><stop offset="0.982" stop-color="#faf801"/><stop offset="1.000" stop-color="#fcf401"/></linearGradient><linearGradient id="g82" gradientUnits="userSpaceOnUse" x1="61.5" x2="339.5" y1="0" y2="0"><stop offset="0.000" stop-color="#00ffb9"/><stop offset="0.406" stop-color="#1cff97"/><stop offset="0.547" stop-color="#24ff82"/><stop offset="0.586" stop-color="#3eff7a"/><stop offset="0.644" stop-color="#66ff6d"/><stop offset="0.773" stop-color="#aaff41"/><stop offset="0.881" stop-color="#dbff0e"/><stop offset="0.971" stop-color="#faf802"/><stop offset="1.000" stop-color="#fdf001"/></linearGradient><linearGradient id="g83" gradientUnits="userSpaceOnUse" x1="61.5" x2="341.5" y1="0" y2="0"><stop offset="0.000" stop-color="#00ffbb"/><stop offset="0.411" stop-color="#1cff98"/><stop offset="0.543" stop-color="#26ff85"/><stop offset="0.582" stop-color="#40ff7d"/><stop offset="0.639" stop-color="#68ff70"/><stop offset="0.771" stop-color="#aeff44"/><stop offset="0.886" stop-color="#e1ff0d"/><stop offset="0.964" stop-color="#fbf702"/><stop offset="1.000" stop-color="#feec01"/></linearGradient><linearGradient id="g84" gradientUnits="userSpaceOnUse" x1="61.5" x2="343.5" y1="0" y2="0"><stop offset="0.000" stop-color="#00ffbc"/><stop offset="0.411" stop-color="#1dff9a"/><stop offset="0.535" stop-color="#26ff88"/><stop offset="0.574" stop-color="#40ff81"/><stop offset="0.631" stop-color="#68ff74"/><stop offset="0.770" stop-color="#b1ff47"/><stop offset="0.890" stop-color="#e8fe0d"/><stop offset="0.961" stop-color="#fcf403"/><stop offset="1.000" stop-color="#ffe801"/></linearGradient><linearGradient id="g85" gradientUnits="userSpaceOnUse" x1="61.5" x2="345.5" y1="0" y2="0"><stop offset="0.000" stop-color="#00ffbe"/><stop offset="0.415" stop-color="#1dff9c"/><stop offset="0.532" stop-color="#27ff8b"/><stop offset="0.570" stop-color="#42ff84"/><stop offset="0.627" stop-color="#6aff77"/><stop offset="0.771" stop-color="#b7ff49"/><stop offset="0.891" stop-color="#ecfe0e"/><stop offset="0.958" stop-color="#fdf203"/><stop offset="1.000" stop-color="#ffe301"/></linearGradient><linearGradient id="g86" gradientUnits="userSpaceOnUse" x1="62.5" x2="347.5" y1="0" y2="0"><stop offset="0.000" stop-color="#00ffc0"/><stop offset="0.418" stop-color="#1eff9d"/><stop offset="0.523" stop-color="#27ff8e"/><stop offset="0.561" stop-color="#42ff87"/><stop offset="0.618" stop-color="#6bff7b"/><stop offset="0.765" stop-color="#b9ff4d"/><stop offset="0.898" stop-color="#f3fd0c"/><stop offset="0.968" stop-color="#feea02"/><stop offset="1.000" stop-color="#ffdf01"/></linearGradient><linearGradient id="g87" gradientUnits="userSpaceOnUse" x1="62.5" x2="350.5" y1="0" y2="0"><stop offset="0.000" stop-color="#00ffc2"/><stop offset="0.420" stop-color="#1eff9f"/><stop offset="0.514" stop-color="#26ff91"/><stop offset="0.549" stop-color="#3eff8b"/><stop offset="0.604" stop-color="#69ff80"/><stop offset="0.757" stop-color="#bbff52"/><stop offset="0.861" stop-color="#ebfe1c"/><stop offset="0.920" stop-color="#fcf507"/><stop offset="1.000" stop-color="#ffd901"/></linearGradient><linearGradient id="g88" gradientUnits="userSpaceOnUse" x1="62.5" x2="352.5" y1="0" y2="0"><stop offset="0.000" stop-color="#00ffc4"/><stop offset="0.421" stop-color="#1fffa1"/><stop offset="0.510" stop-color="#28ff94"/><stop offset="0.548" stop-color="#44ff8e"/><stop offset="0.603" stop-color="#6dff82"/><stop offset="0.759" stop-color="#c0ff53"/><stop offset="0.852" stop-color="#ebfe23"/><stop offset="0.910" stop-color="#fcf50a"/><stop offset="1.000" stop-color="#ffd501"/></linearGradient><linearGradient id="g89" gradientUnits="userSpaceOnUse" x1="62.5" x2="354.5" y1="0" y2="0"><stop offset="0.000" stop-color="#00ffc6"/><stop offset="0.425" stop-color="#1fffa2"/><stop offset="0.503" stop-color="#27ff97"/><stop offset="0.538" stop-color="#40ff92"/><stop offset="0.592" stop-color="#6bff87"/><stop offset="0.753" stop-color="#c2ff58"/><stop offset="0.842" stop-color="#ecfe2b"/><stop offset="0.904" stop-color="#fdf30c"/><stop offset="1.000" stop-color="#ffd101"/></linearGradient><linearGradient id="g90" gradientUnits="userSpaceOnUse" x1="62.5" x2="356.5" y1="0" y2="0"><stop offset="0.000" stop-color="#00ffc8"/><stop offset="0.425" stop-color="#1fffa4"/><stop offset="0.500" stop-color="#28ff9a"/><stop offset="0.537" stop-color="#45ff94"/><stop offset="0.588" stop-color="#6eff8a"/><stop offset="0.752" stop-color="#c6ff5a"/><stop offset="0.840" stop-color="#effe2f"/><stop offset="0.901" stop-color="#fef00e"/><stop offset="0.983" stop-color="#ffd201"/><stop offset="1.000" stop-color="#ffcd01"/></linearGradient><linearGradient id="g91" gradientUnits="userSpaceOnUse" x1="63.5" x2="358.5" y1="0" y2="0"><stop offset="0.000" stop-color="#00ffca"/><stop offset="0.427" stop-color="#20ffa6"/><stop offset="0.492" stop-color="#28ff9d"/><stop offset="0.525" stop-color="#41ff98"/><stop offset="0.576" stop-color="#6cff8e"/><stop offset="0.742" stop-color="#c6ff60"/><stop offset="0.834" stop-color="#f1fd35"/><stop offset="0.898" stop-color="#feed10"/><stop offset="0.969" stop-color="#ffd302"/><stop offset="1.000" stop-color="#ffc801"/></linearGradient><linearGradient id="g92" gradientUnits="userSpaceOnUse" x1="63.5" x2="361.5" y1="0" y2="0"><stop offset="0.000" stop-color="#00ffcc"/><stop offset="0.430" stop-color="#20ffa8"/><stop offset="0.487" stop-color="#29ff9f"/><stop offset="0.523" stop-color="#47ff9a"/><stop offset="0.574" stop-color="#70ff91"/><stop offset="0.742" stop-color="#cbff61"/><stop offset="0.829" stop-color="#f4fc39"/><stop offset="0.896" stop-color="#ffe910"/><stop offset="0.963" stop-color="#ffd003"/><stop offset="1.000" stop-color="#ffc301"/></linearGradient><linearGradient id="g93" gradientUnits="userSpaceOnUse" x1="63.5" x2="363.5" y1="0" y2="0"><stop offset="0.000" stop-color="#00ffce"/><stop offset="0.433" stop-color="#21ffa9"/><stop offset="0.483" stop-color="#2affa2"/><stop offset="0.527" stop-color="#50ff9c"/><stop offset="0.580" stop-color="#78ff92"/><stop offset="0.747" stop-color="#d3ff62"/><stop offset="0.830" stop-color="#f8fb3a"/><stop offset="0.903" stop-color="#ffe10e"/><stop offset="0.977" stop-color="#ffc702"/><stop offset="1.000" stop-color="#ffbf01"/></linearGradient><linearGradient id="g94" gradientUnits="userSpaceOnUse" x1="63.5" x2="365.5" y1="0" y2="0"><stop offset="0.000" stop-color="#00ffcf"/><stop offset="0.434" stop-color="#21ffab"/><stop offset="0.480" stop-color="#2bffa5"/><stop offset="0.560" stop-color="#70ff98"/><stop offset="0.728" stop-color="#ceff6a"/><stop offset="0.821" stop-color="#f8fa42"/><stop offset="0.904" stop-color="#ffdd0f"/><stop offset="0.974" stop-color="#ffc402"/><stop offset="1.000" stop-color="#ffbc01"/></linearGradient><linearGradient id="g95" gradientUnits="userSpaceOnUse" x1="64.5" x2="367.5" y1="0" y2="0"><stop offset="0.000" stop-color="#00ffd1"/><stop offset="0.436" stop-color="#22ffad"/><stop offset="0.475" stop-color="#2dffa8"/><stop offset="0.551" stop-color="#70ff9c"/><stop offset="0.719" stop-color="#ceff6f"/><stop offset="0.812" stop-color="#f8fa49"/><stop offset="0.904" stop-color="#ffd810"/><stop offset="0.970" stop-color="#ffc102"/><stop offset="1.000" stop-color="#ffb801"/></linearGradient><linearGradient id="g96" gradientUnits="userSpaceOnUse" x1="64.5" x2="369.5" y1="0" y2="0"><stop offset="0.000" stop-color="#00ffd3"/><stop offset="0.439" stop-color="#23ffaf"/><stop offset="0.472" stop-color="#2effaa"/><stop offset="0.544" stop-color="#70ff9f"/><stop offset="0.715" stop-color="#d0ff73"/><stop offset="0.803" stop-color="#f9fa4f"/><stop offset="0.898" stop-color="#ffd614"/><stop offset="0.957" stop-color="#ffc104"/><stop offset="1.000" stop-color="#ffb401"/></linearGradient><linearGradient id="g97" gradientUnits="userSpaceOnUse" x1="64.5" x2="371.5" y1="0" y2="0"><stop offset="0.000" stop-color="#00ffd5"/><stop offset="0.440" stop-color="#23ffb1"/><stop offset="0.472" stop-color="#32ffad"/><stop offset="0.537" stop-color="#70ffa3"/><stop offset="0.704" stop-color="#cfff79"/><stop offset="0.792" stop-color="#f8fa57"/><stop offset="0.879" stop-color="#ffd920"/><stop offset="0.932" stop-color="#ffc608"/><stop offset="1.000" stop-color="#ffb001"/></linearGradient><linearGradient id="g98" gradientUnits="userSpaceOnUse" x1="64.5" x2="374.5" y1="0" y2="0"><stop offset="0.000" stop-color="#00ffd7"/><stop offset="0.442" stop-color="#25ffb3"/><stop offset="0.471" stop-color="#36ffaf"/><stop offset="0.529" stop-color="#70ffa6"/><stop offset="0.694" stop-color="#d0ff7e"/><stop offset="0.781" stop-color="#f9fa5d"/><stop offset="0.871" stop-color="#ffd725"/><stop offset="0.926" stop-color="#ffc30a"/><stop offset="1.000" stop-color="#ffac01"/></linearGradient><linearGradient id="g99" gradientUnits="userSpaceOnUse" x1="65.5" x2="376.5" y1="0" y2="0"><stop offset="0.000" stop-color="#00ffd9"/><stop offset="0.441" stop-color="#27ffb5"/><stop offset="0.469" stop-color="#3cffb1"/><stop offset="0.521" stop-color="#70ffaa"/><stop offset="0.682" stop-color="#ceff83"/><stop offset="0.768" stop-color="#f8fa64"/><stop offset="0.852" stop-color="#ffda33"/><stop offset="0.920" stop-color="#ffc10c"/><stop offset="0.997" stop-color="#ffa901"/><stop offset="1.000" stop-color="#ffa801"/></linearGradient><linearGradient id="g100" gradientUnits="userSpaceOnUse" x1="65.5" x2="378.5" y1="0" y2="0"><stop offset="0.000" stop-color="#00ffdb"/><stop offset="0.435" stop-color="#26ffb8"/><stop offset="0.463" stop-color="#3affb4"/><stop offset="0.518" stop-color="#72ffac"/><stop offset="0.677" stop-color="#d0ff87"/><stop offset="0.760" stop-color="#f9fa69"/><stop offset="0.847" stop-color="#ffd838"/><stop offset="0.920" stop-color="#ffbd0d"/><stop offset="0.994" stop-color="#ffa601"/><stop offset="1.000" stop-color="#ffa401"/></linearGradient><linearGradient id="g101" gradientUnits="userSpaceOnUse" x1="65.5" x2="380.5" y1="0" y2="0"><stop offset="0.000" stop-color="#00ffdd"/><stop offset="0.429" stop-color="#26ffbb"/><stop offset="0.457" stop-color="#39ffb8"/><stop offset="0.511" stop-color="#72ffb0"/><stop offset="0.590" stop-color="#a2ffa1"/><stop offset="0.740" stop-color="#f5fc74"/><stop offset="0.800" stop-color="#ffe755"/><stop offset="0.921" stop-color="#ffb90d"/><stop offset="0.990" stop-color="#ffa401"/><stop offset="1.000" stop-color="#ffa101"/></linearGradient><linearGradient id="g102" gradientUnits="userSpaceOnUse" x1="66.5" x2="382.5" y1="0" y2="0"><stop offset="0.000" stop-color="#00ffdf"/><stop offset="0.424" stop-color="#26ffbe"/><stop offset="0.453" stop-color="#3bffba"/><stop offset="0.506" stop-color="#74ffb3"/><stop offset="0.585" stop-color="#a4ffa4"/><stop offset="0.731" stop-color="#f5fc79"/><stop offset="0.791" stop-color="#ffe75b"/><stop offset="0.924" stop-color="#ffb40d"/><stop offset="0.994" stop-color="#ff9f01"/><stop offset="1.000" stop-color="#ff9d01"/></linearGradient><linearGradient id="g103" gradientUnits="userSpaceOnUse" x1="66.5" x2="385.5" y1="0" y2="0"><stop offset="0.000" stop-color="#00ffe1"/><stop offset="0.417" stop-color="#26ffc1"/><stop offset="0.445" stop-color="#3affbe"/><stop offset="0.498" stop-color="#73ffb6"/><stop offset="0.571" stop-color="#a2ffa9"/><stop offset="0.721" stop-color="#f6fc7e"/><stop offset="0.784" stop-color="#ffe55e"/><stop offset="0.925" stop-color="#ffaf0c"/><stop offset="0.997" stop-color="#ff9a01"/><stop offset="1.000" stop-color="#ff9901"/></linearGradient><linearGradient id="g104" gradientUnits="userSpaceOnUse" x1="66.5" x2="387.5" y1="0" y2="0"><stop offset="0.000" stop-color="#00ffe3"/><stop offset="0.414" stop-color="#26ffc3"/><stop offset="0.442" stop-color="#3cffc0"/><stop offset="0.495" stop-color="#75ffb9"/><stop offset="0.567" stop-color="#a4ffad"/><stop offset="0.713" stop-color="#f6fc83"/><stop offset="0.776" stop-color="#ffe463"/><stop offset="0.928" stop-color="#ffab0c"/><stop offset="1.000" stop-color="#ff9601"/></linearGradient><linearGradient id="g105" gradientUnits="userSpaceOnUse" x1="66.5" x2="389.5" y1="0" y2="0"><stop offset="0.000" stop-color="#00ffe5"/><stop offset="0.409" stop-color="#26ffc6"/><stop offset="0.437" stop-color="#3affc3"/><stop offset="0.489" stop-color="#75ffbd"/><stop offset="0.557" stop-color="#a3ffb1"/><stop offset="0.706" stop-color="#f7fb88"/><stop offset="0.771" stop-color="#ffe266"/><stop offset="0.929" stop-color="#ffa70c"/><stop offset="0.997" stop-color="#ff9301"/><stop offset="1.000" stop-color="#ff9201"/></linearGradient><linearGradient id="g106" gradientUnits="userSpaceOnUse" x1="67.5" x2="391.5" y1="0" y2="0"><stop offset="0.000" stop-color="#00ffe7"/><stop offset="0.401" stop-color="#25ffc9"/><stop offset="0.429" stop-color="#39ffc6"/><stop offset="0.485" stop-color="#77ffbf"/><stop offset="0.556" stop-color="#a7ffb4"/><stop offset="0.694" stop-color="#f6fc8e"/><stop offset="0.756" stop-color="#ffe46e"/><stop offset="0.907" stop-color="#ffaa17"/><stop offset="0.963" stop-color="#ff9904"/><stop offset="1.000" stop-color="#ff8f01"/></linearGradient><linearGradient id="g107" gradientUnits="userSpaceOnUse" x1="67.5" x2="393.5" y1="0" y2="0"><stop offset="0.000" stop-color="#00ffea"/><stop offset="0.399" stop-color="#25ffcc"/><stop offset="0.426" stop-color="#3bffc9"/><stop offset="0.479" stop-color="#76ffc3"/><stop offset="0.546" stop-color="#a6ffb8"/><stop offset="0.687" stop-color="#f7fb93"/><stop offset="0.748" stop-color="#ffe373"/><stop offset="0.899" stop-color="#ffa91e"/><stop offset="0.954" stop-color="#ff9806"/><stop offset="1.000" stop-color="#ff8c01"/></linearGradient><linearGradient id="g108" gradientUnits="userSpaceOnUse" x1="67.5" x2="396.5" y1="0" y2="0"><stop offset="0.000" stop-color="#00ffec"/><stop offset="0.392" stop-color="#25ffcf"/><stop offset="0.419" stop-color="#39ffcc"/><stop offset="0.471" stop-color="#75ffc6"/><stop offset="0.538" stop-color="#a6ffbc"/><stop offset="0.678" stop-color="#f7fb97"/><stop offset="0.742" stop-color="#ffe076"/><stop offset="0.894" stop-color="#ffa620"/><stop offset="0.948" stop-color="#ff9607"/><stop offset="1.000" stop-color="#ff8701"/></linearGradient><linearGradient id="g109" gradientUnits="userSpaceOnUse" x1="68.5" x2="398.5" y1="0" y2="0"><stop offset="0.000" stop-color="#00ffee"/><stop offset="0.388" stop-color="#25ffd2"/><stop offset="0.415" stop-color="#3bffcf"/><stop offset="0.467" stop-color="#78ffc9"/><stop offset="0.536" stop-color="#aaffbf"/><stop offset="0.670" stop-color="#f8fb9c"/><stop offset="0.736" stop-color="#ffde79"/><stop offset="0.888" stop-color="#ffa425"/><stop offset="0.948" stop-color="#ff9207"/><stop offset="1.000" stop-color="#ff8401"/></linearGradient><linearGradient id="g110" gradientUnits="userSpaceOnUse" x1="68.5" x2="400.5" y1="0" y2="0"><stop offset="0.000" stop-color="#00fff0"/><stop offset="0.383" stop-color="#25ffd5"/><stop offset="0.410" stop-color="#3affd2"/><stop offset="0.461" stop-color="#77ffcd"/><stop offset="0.530" stop-color="#abffc3"/><stop offset="0.660" stop-color="#f7fba2"/><stop offset="0.720" stop-color="#ffe282"/><stop offset="0.867" stop-color="#ffa733"/><stop offset="0.943" stop-color="#ff900a"/><stop offset="1.000" stop-color="#ff8101"/></linearGradient><linearGradient id="g111" gradientUnits="userSpaceOnUse" x1="68.5" x2="402.5" y1="0" y2="0"><stop offset="0.000" stop-color="#00fff2"/><stop offset="0.377" stop-color="#24ffd8"/><stop offset="0.404" stop-color="#38ffd5"/><stop offset="0.458" stop-color="#79ffd0"/><stop offset="0.527" stop-color="#adffc6"/><stop offset="0.653" stop-color="#f7fba6"/><stop offset="0.716" stop-color="#ffdf85"/><stop offset="0.862" stop-color="#ffa637"/><stop offset="0.946" stop-color="#ff8c09"/><stop offset="1.000" stop-color="#ff7e01"/></linearGradient><linearGradient id="g112" gradientUnits="userSpaceOnUse" x1="69.5" x2="404.5" y1="0" y2="0"><stop offset="0.000" stop-color="#00fff4"/><stop offset="0.373" stop-color="#24ffda"/><stop offset="0.400" stop-color="#3affd8"/><stop offset="0.451" stop-color="#78ffd3"/><stop offset="0.522" stop-color="#b0ffc9"/><stop offset="0.642" stop-color="#f7fbac"/><stop offset="0.699" stop-color="#ffe38e"/><stop offset="0.839" stop-color="#ffaa45"/><stop offset="0.946" stop-color="#ff890a"/><stop offset="1.000" stop-color="#ff7a01"/></linearGradient><linearGradient id="g113" gradientUnits="userSpaceOnUse" x1="69.5" x2="406.5" y1="0" y2="0"><stop offset="0.000" stop-color="#00fef6"/><stop offset="0.368" stop-color="#24ffde"/><stop offset="0.395" stop-color="#39ffdb"/><stop offset="0.448" stop-color="#7affd6"/><stop offset="0.519" stop-color="#b2ffcd"/><stop offset="0.635" stop-color="#f7fbb0"/><stop offset="0.694" stop-color="#ffe190"/><stop offset="0.837" stop-color="#ffa746"/><stop offset="0.950" stop-color="#ff8509"/><stop offset="1.000" stop-color="#ff7701"/></linearGradient><linearGradient id="g114" gradientUnits="userSpaceOnUse" x1="69.5" x2="409.5" y1="0" y2="0"><stop offset="0.000" stop-color="#00fef8"/><stop offset="0.365" stop-color="#24ffe0"/><stop offset="0.391" stop-color="#3bffde"/><stop offset="0.441" stop-color="#79ffd9"/><stop offset="0.515" stop-color="#b4ffd0"/><stop offset="0.626" stop-color="#f8fbb5"/><stop offset="0.688" stop-color="#ffde93"/><stop offset="0.829" stop-color="#ffa54a"/><stop offset="0.950" stop-color="#ff8009"/><stop offset="1.000" stop-color="#ff7301"/></linearGradient><linearGradient id="g115" gradientUnits="userSpaceOnUse" x1="70.5" x2="411.5" y1="0" y2="0"><stop offset="0.000" stop-color="#00fdf9"/><stop offset="0.358" stop-color="#24ffe3"/><stop offset="0.384" stop-color="#39ffe1"/><stop offset="0.434" stop-color="#78ffdc"/><stop offset="0.507" stop-color="#b5ffd4"/><stop offset="0.616" stop-color="#f7fbba"/><stop offset="0.672" stop-color="#ffe29c"/><stop offset="0.806" stop-color="#ffa956"/><stop offset="0.953" stop-color="#ff7c08"/><stop offset="1.000" stop-color="#ff7001"/></linearGradient><linearGradient id="g116" gradientUnits="userSpaceOnUse" x1="70.5" x2="413.5" y1="0" y2="0"><stop offset="0.000" stop-color="#00fcfa"/><stop offset="0.353" stop-color="#23ffe7"/><stop offset="0.379" stop-color="#37ffe4"/><stop offset="0.431" stop-color="#7affdf"/><stop offset="0.507" stop-color="#b9ffd7"/><stop offset="0.606" stop-color="#f6fbc0"/><stop offset="0.659" stop-color="#ffe4a3"/><stop offset="0.790" stop-color="#ffab5e"/><stop offset="0.956" stop-color="#ff7808"/><stop offset="1.000" stop-color="#ff6c01"/></linearGradient><linearGradient id="g117" gradientUnits="userSpaceOnUse" x1="70.5" x2="415.5" y1="0" y2="0"><stop offset="0.000" stop-color="#00fbfc"/><stop offset="0.351" stop-color="#23ffe9"/><stop offset="0.377" stop-color="#39ffe7"/><stop offset="0.426" stop-color="#79ffe3"/><stop offset="0.501" stop-color="#b9ffdb"/><stop offset="0.600" stop-color="#f7fbc4"/><stop offset="0.655" stop-color="#ffe2a6"/><stop offset="0.788" stop-color="#ffa860"/><stop offset="0.959" stop-color="#ff7408"/><stop offset="1.000" stop-color="#ff6901"/></linearGradient><linearGradient id="g118" gradientUnits="userSpaceOnUse" x1="71.5" x2="417.5" y1="0" y2="0"><stop offset="0.000" stop-color="#00fafc"/><stop offset="0.344" stop-color="#23ffed"/><stop offset="0.370" stop-color="#38ffea"/><stop offset="0.422" stop-color="#7bffe6"/><stop offset="0.500" stop-color="#bdffde"/><stop offset="0.590" stop-color="#f6fbca"/><stop offset="0.642" stop-color="#ffe4ad"/><stop offset="0.772" stop-color="#ffaa68"/><stop offset="0.925" stop-color="#ff7a18"/><stop offset="0.980" stop-color="#ff6b03"/><stop offset="1.000" stop-color="#ff6601"/></linearGradient><linearGradient id="g119" gradientUnits="userSpaceOnUse" x1="71.5" x2="420.5" y1="0" y2="0"><stop offset="0.000" stop-color="#00f8fd"/><stop offset="0.341" stop-color="#23ffef"/><stop offset="0.364" stop-color="#36ffee"/><stop offset="0.415" stop-color="#7affe9"/><stop offset="0.493" stop-color="#bdffe1"/><stop offset="0.582" stop-color="#f6fbce"/><stop offset="0.633" stop-color="#ffe3b1"/><stop offset="0.762" stop-color="#ffa96c"/><stop offset="0.920" stop-color="#ff771a"/><stop offset="0.974" stop-color="#ff6904"/><stop offset="1.000" stop-color="#ff6201"/></linearGradient><linearGradient id="g120" gradientUnits="userSpaceOnUse" x1="71.5" x2="422.5" y1="0" y2="0"><stop offset="0.000" stop-color="#00f6fd"/><stop offset="0.336" stop-color="#22fff2"/><stop offset="0.359" stop-color="#34fff1"/><stop offset="0.413" stop-color="#7cffec"/><stop offset="0.493" stop-color="#c2ffe5"/><stop offset="0.575" stop-color="#f7fbd2"/><stop offset="0.630" stop-color="#ffe1b3"/><stop offset="0.758" stop-color="#ffa76e"/><stop offset="0.917" stop-color="#ff751d"/><stop offset="0.974" stop-color="#ff6504"/><stop offset="1.000" stop-color="#ff5e01"/></linearGradient><linearGradient id="g121" gradientUnits="userSpaceOnUse" x1="72.5" x2="424.5" y1="0" y2="0"><stop offset="0.000" stop-color="#00f4fe"/><stop offset="0.330" stop-color="#22fef5"/><stop offset="0.352" stop-color="#33fef4"/><stop offset="0.406" stop-color="#7bfff0"/><stop offset="0.486" stop-color="#c2ffe8"/><stop offset="0.565" stop-color="#f6fbd8"/><stop offset="0.616" stop-color="#ffe3ba"/><stop offset="0.741" stop-color="#ffaa76"/><stop offset="0.918" stop-color="#ff711e"/><stop offset="0.974" stop-color="#ff6205"/><stop offset="1.000" stop-color="#ff5b01"/></linearGradient><linearGradient id="g122" gradientUnits="userSpaceOnUse" x1="72.5" x2="426.5" y1="0" y2="0"><stop offset="0.000" stop-color="#00f2fe"/><stop offset="0.328" stop-color="#22fdf7"/><stop offset="0.350" stop-color="#35fef6"/><stop offset="0.401" stop-color="#7afef3"/><stop offset="0.480" stop-color="#c2ffec"/><stop offset="0.556" stop-color="#f5fcde"/><stop offset="0.605" stop-color="#ffe5c2"/><stop offset="0.726" stop-color="#ffac7e"/><stop offset="0.918" stop-color="#ff6e1f"/><stop offset="0.975" stop-color="#ff5e05"/><stop offset="1.000" stop-color="#ff5801"/></linearGradient><linearGradient id="g123" gradientUnits="userSpaceOnUse" x1="73.5" x2="428.5" y1="0" y2="0"><stop offset="0.000" stop-color="#00f0fe"/><stop offset="0.321" stop-color="#21fcfa"/><stop offset="0.344" stop-color="#33fdf9"/><stop offset="0.397" stop-color="#7cfef5"/><stop offset="0.479" stop-color="#c6ffef"/><stop offset="0.549" stop-color="#f6fbe2"/><stop offset="0.597" stop-color="#ffe4c6"/><stop offset="0.718" stop-color="#ffab82"/><stop offset="0.918" stop-color="#ff6a1f"/><stop offset="0.977" stop-color="#ff5a05"/><stop offset="1.000" stop-color="#ff5401"/></linearGradient><linearGradient id="g124" gradientUnits="userSpaceOnUse" x1="73.5" x2="430.5" y1="0" y2="0"><stop offset="0.000" stop-color="#00eefe"/><stop offset="0.319" stop-color="#22fbfb"/><stop offset="0.342" stop-color="#35fcfa"/><stop offset="0.392" stop-color="#7bfdf8"/><stop offset="0.473" stop-color="#c6fef2"/><stop offset="0.543" stop-color="#f6fbe6"/><stop offset="0.594" stop-color="#ffe2c8"/><stop offset="0.714" stop-color="#ffa984"/><stop offset="0.922" stop-color="#ff661f"/><stop offset="0.980" stop-color="#ff5604"/><stop offset="1.000" stop-color="#ff5101"/></linearGradient><linearGradient id="g125" gradientUnits="userSpaceOnUse" x1="73.5" x2="433.5" y1="0" y2="0"><stop offset="0.000" stop-color="#00ecfe"/><stop offset="0.314" stop-color="#21f9fd"/><stop offset="0.336" stop-color="#33fafc"/><stop offset="0.389" stop-color="#7cfcfa"/><stop offset="0.472" stop-color="#cafdf5"/><stop offset="0.536" stop-color="#f7faea"/><stop offset="0.586" stop-color="#ffe1cb"/><stop offset="0.706" stop-color="#ffa887"/><stop offset="0.919" stop-color="#ff631f"/><stop offset="0.978" stop-color="#ff5305"/><stop offset="1.000" stop-color="#ff4d01"/></linearGradient><linearGradient id="g126" gradientUnits="userSpaceOnUse" x1="74.5" x2="435.5" y1="0" y2="0"><stop offset="0.000" stop-color="#00eafe"/><stop offset="0.310" stop-color="#21f7fd"/><stop offset="0.332" stop-color="#34f8fd"/><stop offset="0.382" stop-color="#7afafc"/><stop offset="0.465" stop-color="#c9fcf8"/><stop offset="0.529" stop-color="#f7faee"/><stop offset="0.579" stop-color="#ffe0cf"/><stop offset="0.698" stop-color="#ffa78b"/><stop offset="0.911" stop-color="#ff6125"/><stop offset="0.978" stop-color="#ff4f05"/><stop offset="1.000" stop-color="#ff4901"/></linearGradient><linearGradient id="g127" gradientUnits="userSpaceOnUse" x1="74.5" x2="437.5" y1="0" y2="0"><stop offset="0.000" stop-color="#00e7fe"/><stop offset="0.306" stop-color="#20f4fe"/><stop offset="0.328" stop-color="#33f5fe"/><stop offset="0.380" stop-color="#7cf8fd"/><stop offset="0.468" stop-color="#cffbfa"/><stop offset="0.526" stop-color="#f8f8f1"/><stop offset="0.584" stop-color="#ffd8cb"/><stop offset="0.711" stop-color="#ff9e85"/><stop offset="0.923" stop-color="#ff5b1f"/><stop offset="0.983" stop-color="#ff4a04"/><stop offset="1.000" stop-color="#ff4501"/></linearGradient><linearGradient id="g128" gradientUnits="userSpaceOnUse" x1="74.5" x2="439.5" y1="0" y2="0"><stop offset="0.000" stop-color="#00e5fe"/><stop offset="0.304" stop-color="#21f1fe"/><stop offset="0.326" stop-color="#34f3fe"/><stop offset="0.375" stop-color="#7af5fe"/><stop offset="0.463" stop-color="#cdf9fc"/><stop offset="0.521" stop-color="#f8f7f4"/><stop offset="0.573" stop-color="#ffdbd3"/><stop offset="0.696" stop-color="#ffa08c"/><stop offset="0.921" stop-color="#ff5822"/><stop offset="0.984" stop-color="#ff4604"/><stop offset="1.000" stop-color="#ff4202"/></linearGradient><linearGradient id="g129" gradientUnits="userSpaceOnUse" x1="75.5" x2="441.5" y1="0" y2="0"><stop offset="0.000" stop-color="#00e3fe"/><stop offset="0.298" stop-color="#20efff"/><stop offset="0.320" stop-color="#32f0ff"/><stop offset="0.372" stop-color="#7bf2fe"/><stop offset="0.464" stop-color="#d2f7fd"/><stop offset="0.516" stop-color="#f8f4f6"/><stop offset="0.574" stop-color="#ffd5d1"/><stop offset="0.702" stop-color="#ff9a89"/><stop offset="0.926" stop-color="#ff521f"/><stop offset="0.986" stop-color="#ff4104"/><stop offset="1.000" stop-color="#ff3e02"/></linearGradient><linearGradient id="g130" gradientUnits="userSpaceOnUse" x1="75.5" x2="444.5" y1="0" y2="0"><stop offset="0.000" stop-color="#00e1fe"/><stop offset="0.293" stop-color="#1fecff"/><stop offset="0.314" stop-color="#30edff"/><stop offset="0.369" stop-color="#7befff"/><stop offset="0.466" stop-color="#d7f4fe"/><stop offset="0.515" stop-color="#faf0f6"/><stop offset="0.599" stop-color="#ffc2bf"/><stop offset="0.748" stop-color="#ff8573"/><stop offset="0.927" stop-color="#ff4e1f"/><stop offset="0.986" stop-color="#ff3d04"/><stop offset="1.000" stop-color="#ff3902"/></linearGradient><linearGradient id="g131" gradientUnits="userSpaceOnUse" x1="76.5" x2="446.5" y1="0" y2="0"><stop offset="0.000" stop-color="#00dffe"/><stop offset="0.289" stop-color="#20e9ff"/><stop offset="0.314" stop-color="#35eaff"/><stop offset="0.362" stop-color="#79ecff"/><stop offset="0.459" stop-color="#d5f1fe"/><stop offset="0.508" stop-color="#f8eef8"/><stop offset="0.568" stop-color="#ffced2"/><stop offset="0.703" stop-color="#ff9188"/><stop offset="0.927" stop-color="#ff4a1f"/><stop offset="0.986" stop-color="#ff3904"/><stop offset="1.000" stop-color="#ff3502"/></linearGradient><linearGradient id="g132" gradientUnits="userSpaceOnUse" x1="76.5" x2="448.5" y1="0" y2="0"><stop offset="0.000" stop-color="#00ddfe"/><stop offset="0.285" stop-color="#1fe6ff"/><stop offset="0.309" stop-color="#33e7ff"/><stop offset="0.358" stop-color="#77e9ff"/><stop offset="0.452" stop-color="#d0edff"/><stop offset="0.505" stop-color="#f8ebf9"/><stop offset="0.565" stop-color="#fecbd3"/><stop offset="0.702" stop-color="#ff8e89"/><stop offset="0.930" stop-color="#ff451f"/><stop offset="0.989" stop-color="#ff3304"/><stop offset="1.000" stop-color="#ff3002"/></linearGradient><linearGradient id="g133" gradientUnits="userSpaceOnUse" x1="77.5" x2="450.5" y1="0" y2="0"><stop offset="0.000" stop-color="#00dbfe"/><stop offset="0.282" stop-color="#1fe3ff"/><stop offset="0.306" stop-color="#35e4ff"/><stop offset="0.354" stop-color="#78e6ff"/><stop offset="0.453" stop-color="#d4eaff"/><stop offset="0.504" stop-color="#f9e6f8"/><stop offset="0.582" stop-color="#febdc7"/><stop offset="0.745" stop-color="#ff7b75"/><stop offset="0.933" stop-color="#ff401e"/><stop offset="0.992" stop-color="#ff2e04"/><stop offset="1.000" stop-color="#ff2c02"/></linearGradient><linearGradient id="g134" gradientUnits="userSpaceOnUse" x1="77.5" x2="452.5" y1="0" y2="0"><stop offset="0.000" stop-color="#00d9fe"/><stop offset="0.277" stop-color="#1ee0ff"/><stop offset="0.301" stop-color="#33e1ff"/><stop offset="0.349" stop-color="#75e2ff"/><stop offset="0.445" stop-color="#cfe6ff"/><stop offset="0.499" stop-color="#f7e4fa"/><stop offset="0.552" stop-color="#fec8d9"/><stop offset="0.685" stop-color="#ff8d91"/><stop offset="0.933" stop-color="#ff3c1e"/><stop offset="0.992" stop-color="#ff2904"/><stop offset="1.000" stop-color="#ff2702"/></linearGradient><linearGradient id="g135" gradientUnits="userSpaceOnUse" x1="77.5" x2="455.5" y1="0" y2="0"><stop offset="0.000" stop-color="#00d6fe"/><stop offset="0.275" stop-color="#1fddff"/><stop offset="0.299" stop-color="#34deff"/><stop offset="0.347" stop-color="#76dfff"/><stop offset="0.444" stop-color="#d1e3ff"/><stop offset="0.497" stop-color="#f7dff9"/><stop offset="0.561" stop-color="#febfd1"/><stop offset="0.709" stop-color="#ff8085"/><stop offset="0.931" stop-color="#ff371f"/><stop offset="0.992" stop-color="#ff2304"/><stop offset="1.000" stop-color="#ff2002"/></linearGradient><linearGradient id="g136" gradientUnits="userSpaceOnUse" x1="78.5" x2="457.5" y1="0" y2="0"><stop offset="0.000" stop-color="#00d4ff"/><stop offset="0.269" stop-color="#1edaff"/><stop offset="0.293" stop-color="#32dbff"/><stop offset="0.340" stop-color="#74dcff"/><stop offset="0.435" stop-color="#ccdfff"/><stop offset="0.493" stop-color="#f7dcf9"/><stop offset="0.551" stop-color="#fdbed5"/><stop offset="0.691" stop-color="#ff838d"/><stop offset="0.931" stop-color="#ff3320"/><stop offset="0.992" stop-color="#ff1e04"/><stop offset="1.000" stop-color="#ff1b03"/></linearGradient><linearGradient id="g137" gradientUnits="userSpaceOnUse" x1="78.5" x2="459.5" y1="0" y2="0"><stop offset="0.000" stop-color="#00d2ff"/><stop offset="0.268" stop-color="#1ed8ff"/><stop offset="0.291" stop-color="#34d8ff"/><stop offset="0.339" stop-color="#75d9ff"/><stop offset="0.436" stop-color="#cedbff"/><stop offset="0.491" stop-color="#f6d8f9"/><stop offset="0.546" stop-color="#fdbdd8"/><stop offset="0.680" stop-color="#ff8492"/><stop offset="0.934" stop-color="#ff2d1f"/><stop offset="0.995" stop-color="#ff1704"/><stop offset="1.000" stop-color="#ff1503"/></linearGradient><linearGradient id="g138" gradientUnits="userSpaceOnUse" x1="79.5" x2="461.5" y1="0" y2="0"><stop offset="0.000" stop-color="#00d0ff"/><stop offset="0.262" stop-color="#1dd5ff"/><stop offset="0.285" stop-color="#32d5ff"/><stop offset="0.332" stop-color="#73d6ff"/><stop offset="0.427" stop-color="#c9d8ff"/><stop offset="0.487" stop-color="#f5d4fa"/><stop offset="0.539" stop-color="#fdbbda"/><stop offset="0.668" stop-color="#fe8497"/><stop offset="0.935" stop-color="#ff2820"/><stop offset="0.997" stop-color="#ff1004"/><stop offset="1.000" stop-color="#ff0f03"/></linearGradient><linearGradient id="g139" gradientUnits="userSpaceOnUse" x1="79.5" x2="463.5" y1="0" y2="0"><stop offset="0.000" stop-color="#00ceff"/><stop offset="0.260" stop-color="#1ed2ff"/><stop offset="0.284" stop-color="#34d2ff"/><stop offset="0.331" stop-color="#73d3ff"/><stop offset="0.430" stop-color="#cdd4ff"/><stop offset="0.487" stop-color="#f6d0f9"/><stop offset="0.544" stop-color="#fcb4d6"/><stop offset="0.677" stop-color="#fe7d92"/><stop offset="0.932" stop-color="#ff2422"/><stop offset="0.997" stop-color="#ff0b04"/><stop offset="1.000" stop-color="#ff0a03"/></linearGradient><linearGradient id="g140" gradientUnits="userSpaceOnUse" x1="80.5" x2="465.5" y1="0" y2="0"><stop offset="0.000" stop-color="#00ccff"/><stop offset="0.255" stop-color="#1dcfff"/><stop offset="0.278" stop-color="#32d0ff"/><stop offset="0.325" stop-color="#71d0ff"/><stop offset="0.421" stop-color="#c8d1ff"/><stop offset="0.483" stop-color="#f5ccf9"/><stop offset="0.538" stop-color="#fcb2d9"/><stop offset="0.668" stop-color="#fe7c96"/><stop offset="0.932" stop-color="#ff1e23"/><stop offset="0.997" stop-color="#ff0704"/><stop offset="1.000" stop-color="#ff0704"/></linearGradient><linearGradient id="g141" gradientUnits="userSpaceOnUse" x1="80.5" x2="468.5" y1="0" y2="0"><stop offset="0.000" stop-color="#00caff"/><stop offset="0.253" stop-color="#1dcdff"/><stop offset="0.276" stop-color="#33cdff"/><stop offset="0.322" stop-color="#72cdff"/><stop offset="0.420" stop-color="#cacdff"/><stop offset="0.482" stop-color="#f5c8f8"/><stop offset="0.544" stop-color="#fcaad3"/><stop offset="0.680" stop-color="#fe738f"/><stop offset="0.930" stop-color="#ff1923"/><stop offset="0.997" stop-color="#ff0404"/><stop offset="1.000" stop-color="#ff0304"/></linearGradient><linearGradient id="g142" gradientUnits="userSpaceOnUse" x1="80.5" x2="470.5" y1="0" y2="0"><stop offset="0.000" stop-color="#00c8ff"/><stop offset="0.249" stop-color="#1ccaff"/><stop offset="0.272" stop-color="#31caff"/><stop offset="0.318" stop-color="#70caff"/><stop offset="0.413" stop-color="#c5caff"/><stop offset="0.479" stop-color="#f5c4f8"/><stop offset="0.536" stop-color="#fbaad7"/><stop offset="0.667" stop-color="#fd7495"/><stop offset="0.905" stop-color="#ff1e31"/><stop offset="0.987" stop-color="#ff0408"/><stop offset="1.000" stop-color="#ff0204"/></linearGradient><linearGradient id="g143" gradientUnits="userSpaceOnUse" x1="81.5" x2="472.5" y1="0" y2="0"><stop offset="0.000" stop-color="#00c6ff"/><stop offset="0.246" stop-color="#1dc7ff"/><stop offset="0.269" stop-color="#33c7ff"/><stop offset="0.315" stop-color="#70c7ff"/><stop offset="0.414" stop-color="#c9c6ff"/><stop offset="0.478" stop-color="#f5c0f8"/><stop offset="0.545" stop-color="#fba0d0"/><stop offset="0.685" stop-color="#fd6a8c"/><stop offset="0.893" stop-color="#ff1f37"/><stop offset="0.974" stop-color="#ff040e"/><stop offset="1.000" stop-color="#ff0104"/></linearGradient><linearGradient id="g144" gradientUnits="userSpaceOnUse" x1="81.5" x2="474.5" y1="0" y2="0"><stop offset="0.000" stop-color="#00c4ff"/><stop offset="0.242" stop-color="#1cc5ff"/><stop offset="0.265" stop-color="#31c5ff"/><stop offset="0.310" stop-color="#6ec5ff"/><stop offset="0.407" stop-color="#c5c3ff"/><stop offset="0.476" stop-color="#f4bcf8"/><stop offset="0.537" stop-color="#fba0d4"/><stop offset="0.672" stop-color="#fd6a91"/><stop offset="0.880" stop-color="#ff1f3d"/><stop offset="0.962" stop-color="#ff0515"/><stop offset="1.000" stop-color="#ff0105"/></linearGradient><linearGradient id="g145" gradientUnits="userSpaceOnUse" x1="82.5" x2="476.5" y1="0" y2="0"><stop offset="0.000" stop-color="#00c2ff"/><stop offset="0.236" stop-color="#1bc2ff"/><stop offset="0.259" stop-color="#2fc2ff"/><stop offset="0.307" stop-color="#6fc2ff"/><stop offset="0.409" stop-color="#c8bfff"/><stop offset="0.475" stop-color="#f5b8f7"/><stop offset="0.548" stop-color="#fb96cc"/><stop offset="0.695" stop-color="#fd5e87"/><stop offset="0.931" stop-color="#ff0a26"/><stop offset="1.000" stop-color="#ff0105"/></linearGradient><linearGradient id="g146" gradientUnits="userSpaceOnUse" x1="82.5" x2="479.5" y1="0" y2="0"><stop offset="0.000" stop-color="#00c0ff"/><stop offset="0.234" stop-color="#1bbfff"/><stop offset="0.257" stop-color="#30bfff"/><stop offset="0.302" stop-color="#6dbfff"/><stop offset="0.403" stop-color="#c6bcff"/><stop offset="0.474" stop-color="#f5b4f6"/><stop offset="0.567" stop-color="#fb89c0"/><stop offset="0.733" stop-color="#fd4c77"/><stop offset="0.914" stop-color="#ff0b2e"/><stop offset="1.000" stop-color="#ff0105"/></linearGradient><linearGradient id="g147" gradientUnits="userSpaceOnUse" x1="83.5" x2="481.5" y1="0" y2="0"><stop offset="0.000" stop-color="#00beff"/><stop offset="0.229" stop-color="#1bbdff"/><stop offset="0.251" stop-color="#2ebdff"/><stop offset="0.299" stop-color="#6ebcff"/><stop offset="0.402" stop-color="#c8b9fe"/><stop offset="0.470" stop-color="#f4b0f6"/><stop offset="0.550" stop-color="#fa8bc7"/><stop offset="0.704" stop-color="#fc5281"/><stop offset="0.897" stop-color="#ff0d36"/><stop offset="1.000" stop-color="#ff0105"/></linearGradient><linearGradient id="g148" gradientUnits="userSpaceOnUse" x1="83.5" x2="483.5" y1="0" y2="0"><stop offset="0.000" stop-color="#00bcff"/><stop offset="0.228" stop-color="#1bbaff"/><stop offset="0.250" stop-color="#30baff"/><stop offset="0.295" stop-color="#6cb9ff"/><stop offset="0.398" stop-color="#c5b5fe"/><stop offset="0.470" stop-color="#f4acf6"/><stop offset="0.578" stop-color="#fa7bb8"/><stop offset="0.762" stop-color="#fd386b"/><stop offset="0.880" stop-color="#fe0e3e"/><stop offset="1.000" stop-color="#ff0106"/></linearGradient><linearGradient id="g149" gradientUnits="userSpaceOnUse" x1="84.5" x2="485.5" y1="0" y2="0"><stop offset="0.000" stop-color="#00baff"/><stop offset="0.222" stop-color="#1ab8ff"/><stop offset="0.244" stop-color="#2eb7ff"/><stop offset="0.292" stop-color="#6cb6ff"/><stop offset="0.397" stop-color="#c7b2fe"/><stop offset="0.469" stop-color="#f5a7f5"/><stop offset="0.608" stop-color="#fa6ba8"/><stop offset="0.860" stop-color="#fe0f46"/><stop offset="1.000" stop-color="#ff0006"/></linearGradient><linearGradient id="g150" gradientUnits="userSpaceOnUse" x1="84.5" x2="487.5" y1="0" y2="0"><stop offset="0.000" stop-color="#00b8ff"/><stop offset="0.221" stop-color="#1ab5ff"/><stop offset="0.243" stop-color="#2fb5ff"/><stop offset="0.288" stop-color="#6ab4ff"/><stop offset="0.392" stop-color="#c5affe"/><stop offset="0.467" stop-color="#f4a4f5"/><stop offset="0.591" stop-color="#fa6db0"/><stop offset="0.801" stop-color="#fd1d5b"/><stop offset="0.878" stop-color="#fe0b3f"/><stop offset="1.000" stop-color="#ff0007"/></linearGradient><linearGradient id="g151" gradientUnits="userSpaceOnUse" x1="85.5" x2="490.5" y1="0" y2="0"><stop offset="0.000" stop-color="#00b5ff"/><stop offset="0.215" stop-color="#1ab3ff"/><stop offset="0.237" stop-color="#2db2ff"/><stop offset="0.284" stop-color="#6bb1ff"/><stop offset="0.390" stop-color="#c6abfe"/><stop offset="0.464" stop-color="#f49ff4"/><stop offset="0.605" stop-color="#fa63a8"/><stop offset="0.825" stop-color="#fd1052"/><stop offset="0.960" stop-color="#ff0319"/><stop offset="1.000" stop-color="#ff0007"/></linearGradient><linearGradient id="g152" gradientUnits="userSpaceOnUse" x1="85.5" x2="492.5" y1="0" y2="0"><stop offset="0.000" stop-color="#00b3ff"/><stop offset="0.214" stop-color="#1ab0ff"/><stop offset="0.236" stop-color="#2fb0ff"/><stop offset="0.280" stop-color="#69aeff"/><stop offset="0.383" stop-color="#c2a8fe"/><stop offset="0.462" stop-color="#f49cf4"/><stop offset="0.604" stop-color="#fa5ea7"/><stop offset="0.808" stop-color="#fd1158"/><stop offset="0.958" stop-color="#ff021b"/><stop offset="1.000" stop-color="#ff0007"/></linearGradient><linearGradient id="g153" gradientUnits="userSpaceOnUse" x1="86.5" x2="494.5" y1="0" y2="0"><stop offset="0.000" stop-color="#00b1ff"/><stop offset="0.208" stop-color="#19aeff"/><stop offset="0.230" stop-color="#2dadff"/><stop offset="0.277" stop-color="#6aabff"/><stop offset="0.382" stop-color="#c4a5fe"/><stop offset="0.461" stop-color="#f498f3"/><stop offset="0.600" stop-color="#f95ba8"/><stop offset="0.794" stop-color="#fc115c"/><stop offset="0.956" stop-color="#fe021c"/><stop offset="1.000" stop-color="#ff0008"/></linearGradient><linearGradient id="g154" gradientUnits="userSpaceOnUse" x1="86.5" x2="495.5" y1="0" y2="0"><stop offset="0.000" stop-color="#00afff"/><stop offset="0.208" stop-color="#19abff"/><stop offset="0.230" stop-color="#2eaaff"/><stop offset="0.274" stop-color="#68a9ff"/><stop offset="0.379" stop-color="#c1a1fe"/><stop offset="0.460" stop-color="#f394f4"/><stop offset="0.604" stop-color="#f956a7"/><stop offset="0.780" stop-color="#fc1162"/><stop offset="0.958" stop-color="#fe021c"/><stop offset="1.000" stop-color="#ff000a"/></linearGradient><linearGradient id="g155" gradientUnits="userSpaceOnUse" x1="87.5" x2="492.5" y1="0" y2="0"><stop offset="0.000" stop-color="#00adff"/><stop offset="0.205" stop-color="#19a9ff"/><stop offset="0.227" stop-color="#2ca8ff"/><stop offset="0.274" stop-color="#68a6ff"/><stop offset="0.383" stop-color="#c39efd"/><stop offset="0.464" stop-color="#f390f3"/><stop offset="0.607" stop-color="#f952a7"/><stop offset="0.773" stop-color="#fb1167"/><stop offset="0.973" stop-color="#fe011b"/><stop offset="1.000" stop-color="#fe000f"/></linearGradient><linearGradient id="g156" gradientUnits="userSpaceOnUse" x1="87.5" x2="487.5" y1="0" y2="0"><stop offset="0.000" stop-color="#00abff"/><stop offset="0.207" stop-color="#19a6ff"/><stop offset="0.233" stop-color="#31a5ff"/><stop offset="0.275" stop-color="#66a3ff"/><stop offset="0.383" stop-color="#bf9bfe"/><stop offset="0.470" stop-color="#f38cf3"/><stop offset="0.618" stop-color="#f84ea7"/><stop offset="0.770" stop-color="#fb116c"/><stop offset="0.948" stop-color="#fd022e"/><stop offset="1.000" stop-color="#fe0017"/></linearGradient><linearGradient id="g157" gradientUnits="userSpaceOnUse" x1="88.5" x2="482.5" y1="0" y2="0"><stop offset="0.000" stop-color="#00a9ff"/><stop offset="0.206" stop-color="#18a4ff"/><stop offset="0.228" stop-color="#2ca3ff"/><stop offset="0.277" stop-color="#67a0ff"/><stop offset="0.386" stop-color="#bf98fd"/><stop offset="0.475" stop-color="#f288f3"/><stop offset="0.629" stop-color="#f848a5"/><stop offset="0.769" stop-color="#fa1171"/><stop offset="0.959" stop-color="#fd022f"/><stop offset="1.000" stop-color="#fe001f"/></linearGradient><linearGradient id="g158" gradientUnits="userSpaceOnUse" x1="88.5" x2="477.5" y1="0" y2="0"><stop offset="0.000" stop-color="#00a7ff"/><stop offset="0.208" stop-color="#18a1ff"/><stop offset="0.234" stop-color="#30a0ff"/><stop offset="0.278" stop-color="#659eff"/><stop offset="0.388" stop-color="#bc95fd"/><stop offset="0.483" stop-color="#f284f2"/><stop offset="0.638" stop-color="#f844a6"/><stop offset="0.766" stop-color="#fa1176"/><stop offset="0.938" stop-color="#fc033d"/><stop offset="1.000" stop-color="#fd0126"/></linearGradient><linearGradient id="g159" gradientUnits="userSpaceOnUse" x1="89.5" x2="473.5" y1="0" y2="0"><stop offset="0.000" stop-color="#00a5ff"/><stop offset="0.206" stop-color="#179fff"/><stop offset="0.232" stop-color="#2e9eff"/><stop offset="0.279" stop-color="#669bff"/><stop offset="0.388" stop-color="#ba92fd"/><stop offset="0.487" stop-color="#f280f3"/><stop offset="0.646" stop-color="#f73fa6"/><stop offset="0.763" stop-color="#f9117a"/><stop offset="0.951" stop-color="#fc023d"/><stop offset="1.000" stop-color="#fd012c"/></linearGradient><linearGradient id="g160" gradientUnits="userSpaceOnUse" x1="89.5" x2="468.5" y1="0" y2="0"><stop offset="0.000" stop-color="#00a3ff"/><stop offset="0.206" stop-color="#179dff"/><stop offset="0.232" stop-color="#2d9bff"/><stop offset="0.280" stop-color="#6498ff"/><stop offset="0.391" stop-color="#b88ffd"/><stop offset="0.496" stop-color="#f27bf2"/><stop offset="0.654" stop-color="#f73ba7"/><stop offset="0.760" stop-color="#f91280"/><stop offset="0.931" stop-color="#fb0349"/><stop offset="1.000" stop-color="#fc0132"/></linearGradient><linearGradient id="g161" gradientUnits="userSpaceOnUse" x1="90.5" x2="463.5" y1="0" y2="0"><stop offset="0.000" stop-color="#00a1ff"/><stop offset="0.206" stop-color="#179aff"/><stop offset="0.233" stop-color="#2e99ff"/><stop offset="0.282" stop-color="#6495ff"/><stop offset="0.391" stop-color="#b78cfd"/><stop offset="0.501" stop-color="#f178f2"/><stop offset="0.668" stop-color="#f734a5"/><stop offset="0.761" stop-color="#f81183"/><stop offset="0.973" stop-color="#fb0140"/><stop offset="1.000" stop-color="#fb0138"/></linearGradient><linearGradient id="g162" gradientUnits="userSpaceOnUse" x1="90.5" x2="459.5" y1="0" y2="0"><stop offset="0.000" stop-color="#009fff"/><stop offset="0.206" stop-color="#1698ff"/><stop offset="0.233" stop-color="#2c96ff"/><stop offset="0.282" stop-color="#6393ff"/><stop offset="0.393" stop-color="#b589fd"/><stop offset="0.507" stop-color="#f074f2"/><stop offset="0.678" stop-color="#f72ea5"/><stop offset="0.762" stop-color="#f81087"/><stop offset="1.000" stop-color="#fb013d"/></linearGradient><linearGradient id="g163" gradientUnits="userSpaceOnUse" x1="91.5" x2="454.5" y1="0" y2="0"><stop offset="0.000" stop-color="#009dff"/><stop offset="0.207" stop-color="#1695ff"/><stop offset="0.234" stop-color="#2d94ff"/><stop offset="0.284" stop-color="#6390ff"/><stop offset="0.394" stop-color="#b386fd"/><stop offset="0.515" stop-color="#f16ff1"/><stop offset="0.686" stop-color="#f628a5"/><stop offset="0.766" stop-color="#f70f89"/><stop offset="1.000" stop-color="#fa0142"/></linearGradient><linearGradient id="g164" gradientUnits="userSpaceOnUse" x1="91.5" x2="449.5" y1="0" y2="0"><stop offset="0.000" stop-color="#009bff"/><stop offset="0.207" stop-color="#1593ff"/><stop offset="0.235" stop-color="#2b91ff"/><stop offset="0.285" stop-color="#618dff"/><stop offset="0.397" stop-color="#b183fd"/><stop offset="0.522" stop-color="#f06bf1"/><stop offset="0.701" stop-color="#f621a4"/><stop offset="0.777" stop-color="#f70d8a"/><stop offset="1.000" stop-color="#fa0147"/></linearGradient><linearGradient id="g165" gradientUnits="userSpaceOnUse" x1="92.5" x2="445.5" y1="0" y2="0"><stop offset="0.000" stop-color="#0099ff"/><stop offset="0.207" stop-color="#1690ff"/><stop offset="0.235" stop-color="#2d8fff"/><stop offset="0.286" stop-color="#628aff"/><stop offset="0.397" stop-color="#af80fd"/><stop offset="0.530" stop-color="#f066f1"/><stop offset="0.708" stop-color="#f61ca5"/><stop offset="0.788" stop-color="#f70b8a"/><stop offset="1.000" stop-color="#f9014b"/></linearGradient><linearGradient id="g166" gradientUnits="userSpaceOnUse" x1="93.5" x2="440.5" y1="0" y2="0"><stop offset="0.000" stop-color="#0096ff"/><stop offset="0.205" stop-color="#158eff"/><stop offset="0.233" stop-color="#2b8cff"/><stop offset="0.285" stop-color="#6088ff"/><stop offset="0.395" stop-color="#ac7efe"/><stop offset="0.536" stop-color="#f062f1"/><stop offset="0.720" stop-color="#f517a4"/><stop offset="0.810" stop-color="#f60987"/><stop offset="1.000" stop-color="#f90150"/></linearGradient><linearGradient id="g167" gradientUnits="userSpaceOnUse" x1="93.5" x2="435.5" y1="0" y2="0"><stop offset="0.000" stop-color="#0094ff"/><stop offset="0.208" stop-color="#158bff"/><stop offset="0.237" stop-color="#2c8aff"/><stop offset="0.289" stop-color="#6185ff"/><stop offset="0.398" stop-color="#aa7bfe"/><stop offset="0.544" stop-color="#ef5ef1"/><stop offset="0.734" stop-color="#f513a4"/><stop offset="0.865" stop-color="#f7067b"/><stop offset="1.000" stop-color="#f80155"/></linearGradient><linearGradient id="g168" gradientUnits="userSpaceOnUse" x1="94.5" x2="431.5" y1="0" y2="0"><stop offset="0.000" stop-color="#0092ff"/><stop offset="0.205" stop-color="#1489ff"/><stop offset="0.234" stop-color="#2a87ff"/><stop offset="0.288" stop-color="#5f82ff"/><stop offset="0.398" stop-color="#a878fe"/><stop offset="0.552" stop-color="#ef59f0"/><stop offset="0.727" stop-color="#f413aa"/><stop offset="0.852" stop-color="#f60782"/><stop offset="1.000" stop-color="#f80159"/></linearGradient><linearGradient id="g169" gradientUnits="userSpaceOnUse" x1="94.5" x2="426.5" y1="0" y2="0"><stop offset="0.000" stop-color="#0090ff"/><stop offset="0.208" stop-color="#1587ff"/><stop offset="0.238" stop-color="#2c84ff"/><stop offset="0.292" stop-color="#5f7fff"/><stop offset="0.401" stop-color="#a675fe"/><stop offset="0.560" stop-color="#ee54f0"/><stop offset="0.726" stop-color="#f413ae"/><stop offset="0.855" stop-color="#f60686"/><stop offset="1.000" stop-color="#f7015e"/></linearGradient><linearGradient id="g170" gradientUnits="userSpaceOnUse" x1="95.5" x2="421.5" y1="0" y2="0"><stop offset="0.000" stop-color="#008eff"/><stop offset="0.206" stop-color="#1484ff"/><stop offset="0.236" stop-color="#2a82ff"/><stop offset="0.291" stop-color="#5e7dff"/><stop offset="0.402" stop-color="#a472fe"/><stop offset="0.567" stop-color="#ee50f0"/><stop offset="0.721" stop-color="#f313b4"/><stop offset="0.844" stop-color="#f5078d"/><stop offset="1.000" stop-color="#f70163"/></linearGradient><linearGradient id="g171" gradientUnits="userSpaceOnUse" x1="96.5" x2="416.5" y1="0" y2="0"><stop offset="0.000" stop-color="#008cff"/><stop offset="0.206" stop-color="#1482ff"/><stop offset="0.237" stop-color="#2b7fff"/><stop offset="0.294" stop-color="#5e7aff"/><stop offset="0.403" stop-color="#a36ffd"/><stop offset="0.572" stop-color="#ec4cf1"/><stop offset="0.672" stop-color="#f222ca"/><stop offset="0.750" stop-color="#f30dae"/><stop offset="1.000" stop-color="#f60168"/></linearGradient><linearGradient id="g172" gradientUnits="userSpaceOnUse" x1="96.5" x2="412.5" y1="0" y2="0"><stop offset="0.000" stop-color="#008aff"/><stop offset="0.206" stop-color="#137fff"/><stop offset="0.237" stop-color="#297dff"/><stop offset="0.294" stop-color="#5c77ff"/><stop offset="0.402" stop-color="#9f6dfe"/><stop offset="0.573" stop-color="#ea49f2"/><stop offset="0.639" stop-color="#f22edb"/><stop offset="0.725" stop-color="#f311bb"/><stop offset="0.937" stop-color="#f5027c"/><stop offset="1.000" stop-color="#f6016c"/></linearGradient><linearGradient id="g173" gradientUnits="userSpaceOnUse" x1="97.5" x2="407.5" y1="0" y2="0"><stop offset="0.000" stop-color="#0088ff"/><stop offset="0.206" stop-color="#137dff"/><stop offset="0.239" stop-color="#2b7aff"/><stop offset="0.297" stop-color="#5d74ff"/><stop offset="0.403" stop-color="#9e6afe"/><stop offset="0.574" stop-color="#e746f3"/><stop offset="0.632" stop-color="#f12fe2"/><stop offset="0.719" stop-color="#f211c1"/><stop offset="0.910" stop-color="#f40487"/><stop offset="1.000" stop-color="#f50170"/></linearGradient><linearGradient id="g174" gradientUnits="userSpaceOnUse" x1="98.5" x2="402.5" y1="0" y2="0"><stop offset="0.000" stop-color="#0085ff"/><stop offset="0.204" stop-color="#137aff"/><stop offset="0.237" stop-color="#2978ff"/><stop offset="0.296" stop-color="#5b71ff"/><stop offset="0.405" stop-color="#9c67fe"/><stop offset="0.576" stop-color="#e343f4"/><stop offset="0.635" stop-color="#f02ce5"/><stop offset="0.720" stop-color="#f210c5"/><stop offset="0.967" stop-color="#f4017d"/><stop offset="1.000" stop-color="#f50175"/></linearGradient><linearGradient id="g175" gradientUnits="userSpaceOnUse" x1="98.5" x2="398.5" y1="0" y2="0"><stop offset="0.000" stop-color="#0083ff"/><stop offset="0.203" stop-color="#1278ff"/><stop offset="0.237" stop-color="#2775ff"/><stop offset="0.300" stop-color="#5c6eff"/><stop offset="0.407" stop-color="#9a64fe"/><stop offset="0.573" stop-color="#df40f4"/><stop offset="0.637" stop-color="#f029e8"/><stop offset="0.720" stop-color="#f10fc9"/><stop offset="0.960" stop-color="#f40283"/><stop offset="1.000" stop-color="#f40179"/></linearGradient><linearGradient id="g176" gradientUnits="userSpaceOnUse" x1="99.5" x2="393.5" y1="0" y2="0"><stop offset="0.000" stop-color="#0081ff"/><stop offset="0.204" stop-color="#1275ff"/><stop offset="0.238" stop-color="#2873ff"/><stop offset="0.303" stop-color="#5c6bff"/><stop offset="0.408" stop-color="#9961fe"/><stop offset="0.575" stop-color="#db3df4"/><stop offset="0.643" stop-color="#ef25ea"/><stop offset="0.724" stop-color="#f10ecc"/><stop offset="0.966" stop-color="#f30186"/><stop offset="1.000" stop-color="#f4017e"/></linearGradient><linearGradient id="g177" gradientUnits="userSpaceOnUse" x1="100.5" x2="388.5" y1="0" y2="0"><stop offset="0.000" stop-color="#007fff"/><stop offset="0.201" stop-color="#1173ff"/><stop offset="0.236" stop-color="#2670ff"/><stop offset="0.302" stop-color="#5b69ff"/><stop offset="0.410" stop-color="#975efe"/><stop offset="0.573" stop-color="#d73bf5"/><stop offset="0.649" stop-color="#ee20eb"/><stop offset="0.733" stop-color="#f00ccd"/><stop offset="0.976" stop-color="#f30188"/><stop offset="1.000" stop-color="#f30182"/></linearGradient><linearGradient id="g178" gradientUnits="userSpaceOnUse" x1="100.5" x2="384.5" y1="0" y2="0"><stop offset="0.000" stop-color="#007dff"/><stop offset="0.204" stop-color="#1170ff"/><stop offset="0.243" stop-color="#2b6dff"/><stop offset="0.310" stop-color="#5d65ff"/><stop offset="0.412" stop-color="#965cfe"/><stop offset="0.574" stop-color="#d437f5"/><stop offset="0.658" stop-color="#ee1beb"/><stop offset="0.746" stop-color="#f00bcd"/><stop offset="0.996" stop-color="#f30187"/><stop offset="1.000" stop-color="#f30186"/></linearGradient><linearGradient id="g179" gradientUnits="userSpaceOnUse" x1="101.5" x2="379.5" y1="0" y2="0"><stop offset="0.000" stop-color="#007aff"/><stop offset="0.201" stop-color="#106eff"/><stop offset="0.237" stop-color="#266bff"/><stop offset="0.306" stop-color="#5a63ff"/><stop offset="0.414" stop-color="#9459fe"/><stop offset="0.572" stop-color="#cf35f5"/><stop offset="0.669" stop-color="#ed16eb"/><stop offset="0.773" stop-color="#f009c8"/><stop offset="1.000" stop-color="#f2018b"/></linearGradient><linearGradient id="g180" gradientUnits="userSpaceOnUse" x1="102.5" x2="374.5" y1="0" y2="0"><stop offset="0.000" stop-color="#0078ff"/><stop offset="0.202" stop-color="#116bff"/><stop offset="0.243" stop-color="#2a67ff"/><stop offset="0.312" stop-color="#5c60ff"/><stop offset="0.415" stop-color="#9256fe"/><stop offset="0.574" stop-color="#cc32f5"/><stop offset="0.680" stop-color="#ec12ec"/><stop offset="0.827" stop-color="#f006bd"/><stop offset="1.000" stop-color="#f20190"/></linearGradient><linearGradient id="g181" gradientUnits="userSpaceOnUse" x1="102.5" x2="370.5" y1="0" y2="0"><stop offset="0.000" stop-color="#0076ff"/><stop offset="0.201" stop-color="#1069ff"/><stop offset="0.243" stop-color="#2865ff"/><stop offset="0.317" stop-color="#5d5dff"/><stop offset="0.418" stop-color="#9153fe"/><stop offset="0.575" stop-color="#c92ef6"/><stop offset="0.694" stop-color="#ec0feb"/><stop offset="0.940" stop-color="#f102a2"/><stop offset="1.000" stop-color="#f10194"/></linearGradient><linearGradient id="g182" gradientUnits="userSpaceOnUse" x1="103.5" x2="365.5" y1="0" y2="0"><stop offset="0.000" stop-color="#0073ff"/><stop offset="0.202" stop-color="#1066ff"/><stop offset="0.244" stop-color="#2962ff"/><stop offset="0.321" stop-color="#5e5aff"/><stop offset="0.424" stop-color="#914ffd"/><stop offset="0.580" stop-color="#c72af6"/><stop offset="0.695" stop-color="#ea0eed"/><stop offset="0.977" stop-color="#f0019e"/><stop offset="1.000" stop-color="#f10199"/></linearGradient><linearGradient id="g183" gradientUnits="userSpaceOnUse" x1="104.5" x2="360.5" y1="0" y2="0"><stop offset="0.000" stop-color="#0071ff"/><stop offset="0.199" stop-color="#0f64ff"/><stop offset="0.242" stop-color="#285fff"/><stop offset="0.324" stop-color="#5e57ff"/><stop offset="0.426" stop-color="#8f4cfd"/><stop offset="0.590" stop-color="#c624f5"/><stop offset="0.699" stop-color="#e80def"/><stop offset="0.809" stop-color="#ee07d0"/><stop offset="1.000" stop-color="#f0019e"/></linearGradient><linearGradient id="g184" gradientUnits="userSpaceOnUse" x1="105.5" x2="355.5" y1="0" y2="0"><stop offset="0.000" stop-color="#006fff"/><stop offset="0.200" stop-color="#0f61ff"/><stop offset="0.244" stop-color="#295cff"/><stop offset="0.328" stop-color="#5f54ff"/><stop offset="0.428" stop-color="#8e49fd"/><stop offset="0.680" stop-color="#de0ef1"/><stop offset="0.756" stop-color="#ed09e5"/><stop offset="1.000" stop-color="#f001a3"/></linearGradient><linearGradient id="g185" gradientUnits="userSpaceOnUse" x1="105.5" x2="351.5" y1="0" y2="0"><stop offset="0.000" stop-color="#006cff"/><stop offset="0.199" stop-color="#0f5fff"/><stop offset="0.244" stop-color="#275aff"/><stop offset="0.333" stop-color="#6051ff"/><stop offset="0.435" stop-color="#8e45fd"/><stop offset="0.671" stop-color="#d80ef2"/><stop offset="0.760" stop-color="#ec08e7"/><stop offset="1.000" stop-color="#ef01a7"/></linearGradient><linearGradient id="g186" gradientUnits="userSpaceOnUse" x1="106.5" x2="346.5" y1="0" y2="0"><stop offset="0.000" stop-color="#006aff"/><stop offset="0.200" stop-color="#0f5cff"/><stop offset="0.246" stop-color="#2857ff"/><stop offset="0.338" stop-color="#614eff"/><stop offset="0.442" stop-color="#8e40fd"/><stop offset="0.662" stop-color="#d10ff3"/><stop offset="0.771" stop-color="#eb07e9"/><stop offset="1.000" stop-color="#ef01ac"/></linearGradient><linearGradient id="g187" gradientUnits="userSpaceOnUse" x1="107.5" x2="341.5" y1="0" y2="0"><stop offset="0.000" stop-color="#0067ff"/><stop offset="0.197" stop-color="#0e59ff"/><stop offset="0.244" stop-color="#2654ff"/><stop offset="0.342" stop-color="#614aff"/><stop offset="0.449" stop-color="#8e3cfd"/><stop offset="0.654" stop-color="#ca0ff4"/><stop offset="0.786" stop-color="#eb07e9"/><stop offset="1.000" stop-color="#ee01b2"/></linearGradient><linearGradient id="g188" gradientUnits="userSpaceOnUse" x1="108.5" x2="337.5" y1="0" y2="0"><stop offset="0.000" stop-color="#0065ff"/><stop offset="0.197" stop-color="#0e56ff"/><stop offset="0.245" stop-color="#2751ff"/><stop offset="0.345" stop-color="#6247ff"/><stop offset="0.454" stop-color="#8d37fd"/><stop offset="0.642" stop-color="#c30ff4"/><stop offset="0.799" stop-color="#ea06e9"/><stop offset="1.000" stop-color="#ee01b6"/></linearGradient><linearGradient id="g189" gradientUnits="userSpaceOnUse" x1="108.5" x2="332.5" y1="0" y2="0"><stop offset="0.000" stop-color="#0063ff"/><stop offset="0.196" stop-color="#0d54ff"/><stop offset="0.246" stop-color="#264eff"/><stop offset="0.348" stop-color="#6144ff"/><stop offset="0.460" stop-color="#8c34fd"/><stop offset="0.638" stop-color="#be0ff5"/><stop offset="0.817" stop-color="#ea05e9"/><stop offset="1.000" stop-color="#ed01bb"/></linearGradient><linearGradient id="g190" gradientUnits="userSpaceOnUse" x1="109.5" x2="327.5" y1="0" y2="0"><stop offset="0.000" stop-color="#0060ff"/><stop offset="0.197" stop-color="#0e51ff"/><stop offset="0.252" stop-color="#2a4bff"/><stop offset="0.367" stop-color="#683fff"/><stop offset="0.500" stop-color="#9527fb"/><stop offset="0.642" stop-color="#bb0df5"/><stop offset="0.835" stop-color="#e905e9"/><stop offset="1.000" stop-color="#ed01c1"/></linearGradient><linearGradient id="g191" gradientUnits="userSpaceOnUse" x1="110.5" x2="323.5" y1="0" y2="0"><stop offset="0.000" stop-color="#005dff"/><stop offset="0.192" stop-color="#0d4eff"/><stop offset="0.244" stop-color="#2548ff"/><stop offset="0.357" stop-color="#623dff"/><stop offset="0.479" stop-color="#8d29fc"/><stop offset="0.629" stop-color="#b50df6"/><stop offset="0.850" stop-color="#e904e9"/><stop offset="1.000" stop-color="#ec01c6"/></linearGradient><linearGradient id="g192" gradientUnits="userSpaceOnUse" x1="111.5" x2="318.5" y1="0" y2="0"><stop offset="0.000" stop-color="#005bff"/><stop offset="0.193" stop-color="#0d4bff"/><stop offset="0.251" stop-color="#2944ff"/><stop offset="0.367" stop-color="#6539ff"/><stop offset="0.502" stop-color="#9120fb"/><stop offset="0.643" stop-color="#b40cf6"/><stop offset="0.874" stop-color="#e903e9"/><stop offset="1.000" stop-color="#ec01cb"/></linearGradient><linearGradient id="g193" gradientUnits="userSpaceOnUse" x1="112.5" x2="313.5" y1="0" y2="0"><stop offset="0.000" stop-color="#0058ff"/><stop offset="0.189" stop-color="#0c48ff"/><stop offset="0.244" stop-color="#2442ff"/><stop offset="0.363" stop-color="#6236ff"/><stop offset="0.498" stop-color="#8d1efc"/><stop offset="0.642" stop-color="#b00bf6"/><stop offset="0.896" stop-color="#e803e9"/><stop offset="1.000" stop-color="#eb01d1"/></linearGradient><linearGradient id="g194" gradientUnits="userSpaceOnUse" x1="113.5" x2="309.5" y1="0" y2="0"><stop offset="0.000" stop-color="#0055ff"/><stop offset="0.189" stop-color="#0c45ff"/><stop offset="0.250" stop-color="#293eff"/><stop offset="0.372" stop-color="#6431ff"/><stop offset="0.526" stop-color="#9216fb"/><stop offset="0.694" stop-color="#b908f4"/><stop offset="0.918" stop-color="#e802e8"/><stop offset="1.000" stop-color="#eb01d6"/></linearGradient><linearGradient id="g195" gradientUnits="userSpaceOnUse" x1="113.5" x2="304.5" y1="0" y2="0"><stop offset="0.000" stop-color="#0052ff"/><stop offset="0.188" stop-color="#0b42ff"/><stop offset="0.251" stop-color="#273bff"/><stop offset="0.377" stop-color="#632eff"/><stop offset="0.534" stop-color="#9013fb"/><stop offset="0.749" stop-color="#c106f3"/><stop offset="0.948" stop-color="#e801e7"/><stop offset="1.000" stop-color="#ea01dc"/></linearGradient><linearGradient id="g196" gradientUnits="userSpaceOnUse" x1="114.5" x2="299.5" y1="0" y2="0"><stop offset="0.000" stop-color="#004fff"/><stop offset="0.184" stop-color="#0b40ff"/><stop offset="0.243" stop-color="#2239ff"/><stop offset="0.368" stop-color="#5e2bff"/><stop offset="0.514" stop-color="#8814fc"/><stop offset="0.714" stop-color="#b507f5"/><stop offset="0.973" stop-color="#e801e7"/><stop offset="1.000" stop-color="#e901e2"/></linearGradient><linearGradient id="g197" gradientUnits="userSpaceOnUse" x1="115.5" x2="294.5" y1="0" y2="0"><stop offset="0.000" stop-color="#004cff"/><stop offset="0.184" stop-color="#0b3cff"/><stop offset="0.251" stop-color="#2635ff"/><stop offset="0.380" stop-color="#6026ff"/><stop offset="0.547" stop-color="#8d0ffb"/><stop offset="0.994" stop-color="#e701e8"/><stop offset="1.000" stop-color="#e701e8"/></linearGradient><linearGradient id="g198" gradientUnits="userSpaceOnUse" x1="116.5" x2="290.5" y1="0" y2="0"><stop offset="0.000" stop-color="#0049ff"/><stop offset="0.178" stop-color="#0a39ff"/><stop offset="0.241" stop-color="#2232ff"/><stop offset="0.374" stop-color="#5d23ff"/><stop offset="0.534" stop-color="#880efb"/><stop offset="1.000" stop-color="#e401ea"/></linearGradient><linearGradient id="g199" gradientUnits="userSpaceOnUse" x1="117.5" x2="285.5" y1="0" y2="0"><stop offset="0.000" stop-color="#0046ff"/><stop offset="0.179" stop-color="#0a36ff"/><stop offset="0.250" stop-color="#262eff"/><stop offset="0.381" stop-color="#5e1fff"/><stop offset="0.560" stop-color="#8b0cfb"/><stop offset="1.000" stop-color="#df01ec"/></linearGradient><linearGradient id="g200" gradientUnits="userSpaceOnUse" x1="118.5" x2="280.5" y1="0" y2="0"><stop offset="0.000" stop-color="#0043ff"/><stop offset="0.173" stop-color="#0932ff"/><stop offset="0.241" stop-color="#212bff"/><stop offset="0.377" stop-color="#5a1cff"/><stop offset="0.549" stop-color="#850bfb"/><stop offset="1.000" stop-color="#d901ed"/></linearGradient><linearGradient id="g201" gradientUnits="userSpaceOnUse" x1="119.5" x2="276.5" y1="0" y2="0"><stop offset="0.000" stop-color="#003fff"/><stop offset="0.172" stop-color="#092fff"/><stop offset="0.248" stop-color="#2526ff"/><stop offset="0.382" stop-color="#5b18ff"/><stop offset="0.573" stop-color="#880afb"/><stop offset="1.000" stop-color="#d401ee"/></linearGradient><linearGradient id="g202" gradientUnits="userSpaceOnUse" x1="120.5" x2="271.5" y1="0" y2="0"><stop offset="0.000" stop-color="#003cff"/><stop offset="0.172" stop-color="#0a2bff"/><stop offset="0.252" stop-color="#2722ff"/><stop offset="0.391" stop-color="#5c14ff"/><stop offset="0.603" stop-color="#8a08fa"/><stop offset="1.000" stop-color="#ce01ef"/></linearGradient><linearGradient id="g203" gradientUnits="userSpaceOnUse" x1="121.5" x2="266.5" y1="0" y2="0"><stop offset="0.000" stop-color="#0038ff"/><stop offset="0.166" stop-color="#0927ff"/><stop offset="0.248" stop-color="#251eff"/><stop offset="0.393" stop-color="#5a11ff"/><stop offset="0.614" stop-color="#8908fa"/><stop offset="1.000" stop-color="#c801ef"/></linearGradient><linearGradient id="g204" gradientUnits="userSpaceOnUse" x1="122.5" x2="262.5" y1="0" y2="0"><stop offset="0.000" stop-color="#0034ff"/><stop offset="0.164" stop-color="#0923ff"/><stop offset="0.257" stop-color="#2919ff"/><stop offset="0.400" stop-color="#5b0eff"/><stop offset="0.650" stop-color="#8c07f9"/><stop offset="1.000" stop-color="#c301f0"/></linearGradient><linearGradient id="g205" gradientUnits="userSpaceOnUse" x1="123.5" x2="257.5" y1="0" y2="0"><stop offset="0.000" stop-color="#0030ff"/><stop offset="0.157" stop-color="#081fff"/><stop offset="0.246" stop-color="#2516ff"/><stop offset="0.396" stop-color="#580dff"/><stop offset="0.634" stop-color="#8607fa"/><stop offset="1.000" stop-color="#bd01f1"/></linearGradient><linearGradient id="g206" gradientUnits="userSpaceOnUse" x1="124.5" x2="252.5" y1="0" y2="0"><stop offset="0.000" stop-color="#002bff"/><stop offset="0.156" stop-color="#091bff"/><stop offset="0.258" stop-color="#2911ff"/><stop offset="0.406" stop-color="#580bff"/><stop offset="0.672" stop-color="#8806f9"/><stop offset="1.000" stop-color="#b701f1"/></linearGradient><linearGradient id="g207" gradientUnits="userSpaceOnUse" x1="125.5" x2="248.5" y1="0" y2="0"><stop offset="0.000" stop-color="#0027ff"/><stop offset="0.146" stop-color="#0817ff"/><stop offset="0.244" stop-color="#250fff"/><stop offset="0.398" stop-color="#550aff"/><stop offset="0.650" stop-color="#8206fa"/><stop offset="1.000" stop-color="#b201f2"/></linearGradient><linearGradient id="g208" gradientUnits="userSpaceOnUse" x1="126.5" x2="243.5" y1="0" y2="0"><stop offset="0.000" stop-color="#0021ff"/><stop offset="0.145" stop-color="#0813ff"/><stop offset="0.256" stop-color="#290bff"/><stop offset="0.419" stop-color="#5809ff"/><stop offset="0.735" stop-color="#8a04f9"/><stop offset="1.000" stop-color="#ac01f3"/></linearGradient><linearGradient id="g209" gradientUnits="userSpaceOnUse" x1="127.5" x2="238.5" y1="0" y2="0"><stop offset="0.000" stop-color="#001cff"/><stop offset="0.144" stop-color="#090fff"/><stop offset="0.288" stop-color="#3308ff"/><stop offset="0.459" stop-color="#5d08fe"/><stop offset="0.928" stop-color="#9e01f5"/><stop offset="1.000" stop-color="#a701f3"/></linearGradient><linearGradient id="g210" gradientUnits="userSpaceOnUse" x1="128.5" x2="233.5" y1="0" y2="0"><stop offset="0.000" stop-color="#0017ff"/><stop offset="0.143" stop-color="#090bff"/><stop offset="0.410" stop-color="#5107ff"/><stop offset="0.705" stop-color="#7e04fa"/><stop offset="1.000" stop-color="#a101f4"/></linearGradient><linearGradient id="g211" gradientUnits="userSpaceOnUse" x1="129.5" x2="229.5" y1="0" y2="0"><stop offset="0.000" stop-color="#0012ff"/><stop offset="0.130" stop-color="#0809ff"/><stop offset="0.420" stop-color="#5207ff"/><stop offset="0.750" stop-color="#8003fa"/><stop offset="1.000" stop-color="#9c01f5"/></linearGradient><linearGradient id="g212" gradientUnits="userSpaceOnUse" x1="131.5" x2="224.5" y1="0" y2="0"><stop offset="0.000" stop-color="#010cff"/><stop offset="0.129" stop-color="#0b06ff"/><stop offset="0.409" stop-color="#4f06ff"/><stop offset="0.731" stop-color="#7a03fa"/><stop offset="1.000" stop-color="#9701f5"/></linearGradient><linearGradient id="g213" gradientUnits="userSpaceOnUse" x1="132.5" x2="219.5" y1="0" y2="0"><stop offset="0.000" stop-color="#0108ff"/><stop offset="0.126" stop-color="#0b04ff"/><stop offset="0.414" stop-color="#4d05ff"/><stop offset="0.759" stop-color="#7903fa"/><stop offset="1.000" stop-color="#9101f6"/></linearGradient><linearGradient id="g214" gradientUnits="userSpaceOnUse" x1="133.5" x2="215.5" y1="0" y2="0"><stop offset="0.000" stop-color="#0105ff"/><stop offset="0.134" stop-color="#0f03ff"/><stop offset="0.402" stop-color="#4a05ff"/><stop offset="0.744" stop-color="#7403fb"/><stop offset="1.000" stop-color="#8c01f7"/></linearGradient><linearGradient id="g215" gradientUnits="userSpaceOnUse" x1="135.5" x2="210.5" y1="0" y2="0"><stop offset="0.000" stop-color="#0203ff"/><stop offset="0.133" stop-color="#1302ff"/><stop offset="0.400" stop-color="#4904ff"/><stop offset="0.760" stop-color="#7202fb"/><stop offset="1.000" stop-color="#8701f8"/></linearGradient><linearGradient id="g216" gradientUnits="userSpaceOnUse" x1="136.5" x2="205.5" y1="0" y2="0"><stop offset="0.000" stop-color="#0302ff"/><stop offset="0.145" stop-color="#1702ff"/><stop offset="0.420" stop-color="#4904ff"/><stop offset="0.841" stop-color="#7402fa"/><stop offset="1.000" stop-color="#8101f8"/></linearGradient><linearGradient id="g217" gradientUnits="userSpaceOnUse" x1="138.5" x2="201.5" y1="0" y2="0"><stop offset="0.000" stop-color="#0601ff"/><stop offset="0.206" stop-color="#2702ff"/><stop offset="0.492" stop-color="#5203fe"/><stop offset="1.000" stop-color="#7c01f9"/></linearGradient><linearGradient id="g218" gradientUnits="userSpaceOnUse" x1="140.5" x2="196.5" y1="0" y2="0"><stop offset="0.000" stop-color="#0a01ff"/><stop offset="0.429" stop-color="#4903ff"/><stop offset="0.982" stop-color="#7501fa"/><stop offset="1.000" stop-color="#7601fa"/></linearGradient><linearGradient id="g219" gradientUnits="userSpaceOnUse" x1="142.5" x2="191.5" y1="0" y2="0"><stop offset="0.000" stop-color="#1000ff"/><stop offset="0.429" stop-color="#4802ff"/><stop offset="1.000" stop-color="#7001fa"/></linearGradient><linearGradient id="g220" gradientUnits="userSpaceOnUse" x1="144.5" x2="187.5" y1="0" y2="0"><stop offset="0.000" stop-color="#1700ff"/><stop offset="0.419" stop-color="#4602ff"/><stop offset="1.000" stop-color="#6b01fb"/></linearGradient><linearGradient id="g221" gradientUnits="userSpaceOnUse" x1="147.5" x2="182.5" y1="0" y2="0"><stop offset="0.000" stop-color="#2100ff"/><stop offset="0.486" stop-color="#4b01ff"/><stop offset="1.000" stop-color="#6501fc"/></linearGradient><linearGradient id="g222" gradientUnits="userSpaceOnUse" x1="149.5" x2="177.5" y1="0" y2="0"><stop offset="0.000" stop-color="#2900ff"/><stop offset="0.643" stop-color="#5001fe"/><stop offset="1.000" stop-color="#5f01fc"/></linearGradient><linearGradient id="g223" gradientUnits="userSpaceOnUse" x1="152.5" x2="172.5" y1="0" y2="0"><stop offset="0.000" stop-color="#3200ff"/><stop offset="0.950" stop-color="#5701fd"/><stop offset="1.000" stop-color="#5801fd"/></linearGradient><linearGradient id="g224" gradientUnits="userSpaceOnUse" x1="154.5" x2="168.5" y1="0" y2="0"><stop offset="0.000" stop-color="#3800ff"/><stop offset="1.000" stop-color="#5201fe"/></linearGradient><linearGradient id="g225" gradientUnits="userSpaceOnUse" x1="157.5" x2="163.5" y1="0" y2="0"><stop offset="0.000" stop-color="#3f00ff"/><stop offset="1.000" stop-color="#4a00fe"/></linearGradient></defs><rect x="58" y="75" width="442" height="459" fill="#666"/><g clip-path="url(#lc)"><rect x="92" y="80" width="30" height="2" fill="url(#g0)"/><rect x="88" y="82" width="40" height="2" fill="url(#g1)"/><rect x="85" y="84" width="48" height="2" fill="url(#g2)"/><rect x="82" y="86" width="56" height="2" fill="url(#g3)"/><rect x="80" y="88" width="62" height="2" fill="url(#g4)"/><rect x="79" y="90" width="67" height="2" fill="url(#g5)"/><rect x="77" y="92" width="73" height="2" fill="url(#g6)"/><rect x="76" y="94" width="78" height="2" fill="url(#g7)"/><rect x="74" y="96" width="84" height="2" fill="url(#g8)"/><rect x="73" y="98" width="88" height="2" fill="url(#g9)"/><rect x="72" y="100" width="93" height="2" fill="url(#g10)"/><rect x="71" y="102" width="97" height="2" fill="url(#g11)"/><rect x="70" y="104" width="102" height="2" fill="url(#g12)"/><rect x="69" y="106" width="106" height="2" fill="url(#g13)"/><rect x="69" y="108" width="109" height="2" fill="url(#g14)"/><rect x="68" y="110" width="113" height="2" fill="url(#g15)"/><rect x="67" y="112" width="117" height="2" fill="url(#g16)"/><rect x="66" y="114" width="121" height="2" fill="url(#g17)"/><rect x="66" y="116" width="124" height="2" fill="url(#g18)"/><rect x="65" y="118" width="128" height="2" fill="url(#g19)"/><rect x="65" y="120" width="130" height="2" fill="url(#g20)"/><rect x="64" y="122" width="134" height="2" fill="url(#g21)"/><rect x="64" y="124" width="137" height="2" fill="url(#g22)"/><rect x="63" y="126" width="141" height="2" fill="url(#g23)"/><rect x="63" y="128" width="143" height="2" fill="url(#g24)"/><rect x="62" y="130" width="147" height="2" fill="url(#g25)"/><rect x="62" y="132" width="149" height="2" fill="url(#g26)"/><rect x="62" y="134" width="152" height="2" fill="url(#g27)"/><rect x="61" y="136" width="156" height="2" fill="url(#g28)"/><rect x="61" y="138" width="158" height="2" fill="url(#g29)"/><rect x="61" y="140" width="161" height="2" fill="url(#g30)"/><rect x="60" y="142" width="164" height="2" fill="url(#g31)"/><rect x="60" y="144" width="167" height="2" fill="url(#g32)"/><rect x="60" y="146" width="169" height="2" fill="url(#g33)"/><rect x="60" y="148" width="171" height="2" fill="url(#g34)"/><rect x="59" y="150" width="175" height="2" fill="url(#g35)"/><rect x="59" y="152" width="177" height="2" fill="url(#g36)"/><rect x="59" y="154" width="180" height="2" fill="url(#g37)"/><rect x="59" y="156" width="182" height="2" fill="url(#g38)"/><rect x="59" y="158" width="184" height="2" fill="url(#g39)"/><rect x="59" y="160" width="187" height="2" fill="url(#g40)"/><rect x="58" y="162" width="190" height="2" fill="url(#g41)"/><rect x="58" y="164" width="192" height="2" fill="url(#g42)"/><rect x="58" y="166" width="195" height="2" fill="url(#g43)"/><rect x="58" y="168" width="197" height="2" fill="url(#g44)"/><rect x="58" y="170" width="199" height="2" fill="url(#g45)"/><rect x="58" y="172" width="202" height="2" fill="url(#g46)"/><rect x="58" y="174" width="204" height="2" fill="url(#g47)"/><rect x="58" y="176" width="206" height="2" fill="url(#g48)"/><rect x="58" y="178" width="208" height="2" fill="url(#g49)"/><rect x="58" y="180" width="211" height="2" fill="url(#g50)"/><rect x="58" y="182" width="213" height="2" fill="url(#g51)"/><rect x="58" y="184" width="215" height="2" fill="url(#g52)"/><rect x="58" y="186" width="218" height="2" fill="url(#g53)"/><rect x="58" y="188" width="220" height="2" fill="url(#g54)"/><rect x="58" y="190" width="222" height="2" fill="url(#g55)"/><rect x="58" y="192" width="224" height="2" fill="url(#g56)"/><rect x="58" y="194" width="227" height="2" fill="url(#g57)"/><rect x="58" y="196" width="229" height="2" fill="url(#g58)"/><rect x="58" y="198" width="231" height="2" fill="url(#g59)"/><rect x="58" y="200" width="233" height="2" fill="url(#g60)"/><rect x="58" y="202" width="235" height="2" fill="url(#g61)"/><rect x="58" y="204" width="238" height="2" fill="url(#g62)"/><rect x="58" y="206" width="240" height="2" fill="url(#g63)"/><rect x="58" y="208" width="242" height="2" fill="url(#g64)"/><rect x="58" y="210" width="244" height="2" fill="url(#g65)"/><rect x="58" y="212" width="246" height="2" fill="url(#g66)"/><rect x="58" y="214" width="249" height="2" fill="url(#g67)"/><rect x="59" y="216" width="250" height="2" fill="url(#g68)"/><rect x="59" y="218" width="252" height="2" fill="url(#g69)"/><rect x="59" y="220" width="254" height="2" fill="url(#g70)"/><rect x="59" y="222" width="257" height="2" fill="url(#g71)"/><rect x="59" y="224" width="259" height="2" fill="url(#g72)"/><rect x="59" y="226" width="261" height="2" fill="url(#g73)"/><rect x="59" y="228" width="263" height="2" fill="url(#g74)"/><rect x="60" y="230" width="264" height="2" fill="url(#g75)"/><rect x="60" y="232" width="267" height="2" fill="url(#g76)"/><rect x="60" y="234" width="269" height="2" fill="url(#g77)"/><rect x="60" y="236" width="271" height="2" fill="url(#g78)"/><rect x="60" y="238" width="273" height="2" fill="url(#g79)"/><rect x="60" y="240" width="275" height="2" fill="url(#g80)"/><rect x="61" y="242" width="277" height="2" fill="url(#g81)"/><rect x="61" y="244" width="279" height="2" fill="url(#g82)"/><rect x="61" y="246" width="281" height="2" fill="url(#g83)"/><rect x="61" y="248" width="283" height="2" fill="url(#g84)"/><rect x="61" y="250" width="285" height="2" fill="url(#g85)"/><rect x="62" y="252" width="286" height="2" fill="url(#g86)"/><rect x="62" y="254" width="289" height="2" fill="url(#g87)"/><rect x="62" y="256" width="291" height="2" fill="url(#g88)"/><rect x="62" y="258" width="293" height="2" fill="url(#g89)"/><rect x="62" y="260" width="295" height="2" fill="url(#g90)"/><rect x="63" y="262" width="296" height="2" fill="url(#g91)"/><rect x="63" y="264" width="299" height="2" fill="url(#g92)"/><rect x="63" y="266" width="301" height="2" fill="url(#g93)"/><rect x="63" y="268" width="303" height="2" fill="url(#g94)"/><rect x="64" y="270" width="304" height="2" fill="url(#g95)"/><rect x="64" y="272" width="306" height="2" fill="url(#g96)"/><rect x="64" y="274" width="308" height="2" fill="url(#g97)"/><rect x="64" y="276" width="311" height="2" fill="url(#g98)"/><rect x="65" y="278" width="312" height="2" fill="url(#g99)"/><rect x="65" y="280" width="314" height="2" fill="url(#g100)"/><rect x="65" y="282" width="316" height="2" fill="url(#g101)"/><rect x="66" y="284" width="317" height="2" fill="url(#g102)"/><rect x="66" y="286" width="320" height="2" fill="url(#g103)"/><rect x="66" y="288" width="322" height="2" fill="url(#g104)"/><rect x="66" y="290" width="324" height="2" fill="url(#g105)"/><rect x="67" y="292" width="325" height="2" fill="url(#g106)"/><rect x="67" y="294" width="327" height="2" fill="url(#g107)"/><rect x="67" y="296" width="330" height="2" fill="url(#g108)"/><rect x="68" y="298" width="331" height="2" fill="url(#g109)"/><rect x="68" y="300" width="333" height="2" fill="url(#g110)"/><rect x="68" y="302" width="335" height="2" fill="url(#g111)"/><rect x="69" y="304" width="336" height="2" fill="url(#g112)"/><rect x="69" y="306" width="338" height="2" fill="url(#g113)"/><rect x="69" y="308" width="341" height="2" fill="url(#g114)"/><rect x="70" y="310" width="342" height="2" fill="url(#g115)"/><rect x="70" y="312" width="344" height="2" fill="url(#g116)"/><rect x="70" y="314" width="346" height="2" fill="url(#g117)"/><rect x="71" y="316" width="347" height="2" fill="url(#g118)"/><rect x="71" y="318" width="350" height="2" fill="url(#g119)"/><rect x="71" y="320" width="352" height="2" fill="url(#g120)"/><rect x="72" y="322" width="353" height="2" fill="url(#g121)"/><rect x="72" y="324" width="355" height="2" fill="url(#g122)"/><rect x="73" y="326" width="356" height="2" fill="url(#g123)"/><rect x="73" y="328" width="358" height="2" fill="url(#g124)"/><rect x="73" y="330" width="361" height="2" fill="url(#g125)"/><rect x="74" y="332" width="362" height="2" fill="url(#g126)"/><rect x="74" y="334" width="364" height="2" fill="url(#g127)"/><rect x="74" y="336" width="366" height="2" fill="url(#g128)"/><rect x="75" y="338" width="367" height="2" fill="url(#g129)"/><rect x="75" y="340" width="370" height="2" fill="url(#g130)"/><rect x="76" y="342" width="371" height="2" fill="url(#g131)"/><rect x="76" y="344" width="373" height="2" fill="url(#g132)"/><rect x="77" y="346" width="374" height="2" fill="url(#g133)"/><rect x="77" y="348" width="376" height="2" fill="url(#g134)"/><rect x="77" y="350" width="379" height="2" fill="url(#g135)"/><rect x="78" y="352" width="380" height="2" fill="url(#g136)"/><rect x="78" y="354" width="382" height="2" fill="url(#g137)"/><rect x="79" y="356" width="383" height="2" fill="url(#g138)"/><rect x="79" y="358" width="385" height="2" fill="url(#g139)"/><rect x="80" y="360" width="386" height="2" fill="url(#g140)"/><rect x="80" y="362" width="389" height="2" fill="url(#g141)"/><rect x="80" y="364" width="391" height="2" fill="url(#g142)"/><rect x="81" y="366" width="392" height="2" fill="url(#g143)"/><rect x="81" y="368" width="394" height="2" fill="url(#g144)"/><rect x="82" y="370" width="395" height="2" fill="url(#g145)"/><rect x="82" y="372" width="398" height="2" fill="url(#g146)"/><rect x="83" y="374" width="399" height="2" fill="url(#g147)"/><rect x="83" y="376" width="401" height="2" fill="url(#g148)"/><rect x="84" y="378" width="402" height="2" fill="url(#g149)"/><rect x="84" y="380" width="404" height="2" fill="url(#g150)"/><rect x="85" y="382" width="406" height="2" fill="url(#g151)"/><rect x="85" y="384" width="408" height="2" fill="url(#g152)"/><rect x="86" y="386" width="409" height="2" fill="url(#g153)"/><rect x="86" y="388" width="410" height="2" fill="url(#g154)"/><rect x="87" y="390" width="406" height="2" fill="url(#g155)"/><rect x="87" y="392" width="401" height="2" fill="url(#g156)"/><rect x="88" y="394" width="395" height="2" fill="url(#g157)"/><rect x="88" y="396" width="390" height="2" fill="url(#g158)"/><rect x="89" y="398" width="385" height="2" fill="url(#g159)"/><rect x="89" y="400" width="380" height="2" fill="url(#g160)"/><rect x="90" y="402" width="374" height="2" fill="url(#g161)"/><rect x="90" y="404" width="370" height="2" fill="url(#g162)"/><rect x="91" y="406" width="364" height="2" fill="url(#g163)"/><rect x="91" y="408" width="359" height="2" fill="url(#g164)"/><rect x="92" y="410" width="354" height="2" fill="url(#g165)"/><rect x="93" y="412" width="348" height="2" fill="url(#g166)"/><rect x="93" y="414" width="343" height="2" fill="url(#g167)"/><rect x="94" y="416" width="338" height="2" fill="url(#g168)"/><rect x="94" y="418" width="333" height="2" fill="url(#g169)"/><rect x="95" y="420" width="327" height="2" fill="url(#g170)"/><rect x="96" y="422" width="321" height="2" fill="url(#g171)"/><rect x="96" y="424" width="317" height="2" fill="url(#g172)"/><rect x="97" y="426" width="311" height="2" fill="url(#g173)"/><rect x="98" y="428" width="305" height="2" fill="url(#g174)"/><rect x="98" y="430" width="301" height="2" fill="url(#g175)"/><rect x="99" y="432" width="295" height="2" fill="url(#g176)"/><rect x="100" y="434" width="289" height="2" fill="url(#g177)"/><rect x="100" y="436" width="285" height="2" fill="url(#g178)"/><rect x="101" y="438" width="279" height="2" fill="url(#g179)"/><rect x="102" y="440" width="273" height="2" fill="url(#g180)"/><rect x="102" y="442" width="269" height="2" fill="url(#g181)"/><rect x="103" y="444" width="263" height="2" fill="url(#g182)"/><rect x="104" y="446" width="257" height="2" fill="url(#g183)"/><rect x="105" y="448" width="251" height="2" fill="url(#g184)"/><rect x="105" y="450" width="247" height="2" fill="url(#g185)"/><rect x="106" y="452" width="241" height="2" fill="url(#g186)"/><rect x="107" y="454" width="235" height="2" fill="url(#g187)"/><rect x="108" y="456" width="230" height="2" fill="url(#g188)"/><rect x="108" y="458" width="225" height="2" fill="url(#g189)"/><rect x="109" y="460" width="219" height="2" fill="url(#g190)"/><rect x="110" y="462" width="214" height="2" fill="url(#g191)"/><rect x="111" y="464" width="208" height="2" fill="url(#g192)"/><rect x="112" y="466" width="202" height="2" fill="url(#g193)"/><rect x="113" y="468" width="197" height="2" fill="url(#g194)"/><rect x="113" y="470" width="192" height="2" fill="url(#g195)"/><rect x="114" y="472" width="186" height="2" fill="url(#g196)"/><rect x="115" y="474" width="180" height="2" fill="url(#g197)"/><rect x="116" y="476" width="175" height="2" fill="url(#g198)"/><rect x="117" y="478" width="169" height="2" fill="url(#g199)"/><rect x="118" y="480" width="163" height="2" fill="url(#g200)"/><rect x="119" y="482" width="158" height="2" fill="url(#g201)"/><rect x="120" y="484" width="152" height="2" fill="url(#g202)"/><rect x="121" y="486" width="146" height="2" fill="url(#g203)"/><rect x="122" y="488" width="141" height="2" fill="url(#g204)"/><rect x="123" y="490" width="135" height="2" fill="url(#g205)"/><rect x="124" y="492" width="129" height="2" fill="url(#g206)"/><rect x="125" y="494" width="124" height="2" fill="url(#g207)"/><rect x="126" y="496" width="118" height="2" fill="url(#g208)"/><rect x="127" y="498" width="112" height="2" fill="url(#g209)"/><rect x="128" y="500" width="106" height="2" fill="url(#g210)"/><rect x="129" y="502" width="101" height="2" fill="url(#g211)"/><rect x="131" y="504" width="94" height="2" fill="url(#g212)"/><rect x="132" y="506" width="88" height="2" fill="url(#g213)"/><rect x="133" y="508" width="83" height="2" fill="url(#g214)"/><rect x="135" y="510" width="76" height="2" fill="url(#g215)"/><rect x="136" y="512" width="70" height="2" fill="url(#g216)"/><rect x="138" y="514" width="64" height="2" fill="url(#g217)"/><rect x="140" y="516" width="57" height="2" fill="url(#g218)"/><rect x="142" y="518" width="50" height="2" fill="url(#g219)"/><rect x="144" y="520" width="44" height="2" fill="url(#g220)"/><rect x="147" y="522" width="36" height="2" fill="url(#g221)"/><rect x="149" y="524" width="29" height="2" fill="url(#g222)"/><rect x="152" y="526" width="21" height="2" fill="url(#g223)"/><rect x="154" y="528" width="15" height="2" fill="url(#g224)"/><rect x="157" y="530" width="7" height="2" fill="url(#g225)"/></g><path d="M114.1 98.3h7M117.6 94.8v7M173.3 98.3h7M176.8 94.8v7M114.1 152.6h7M117.6 149.1v7M173.3 152.6h7M176.8 149.1v7M232.4 152.6h7M235.9 149.1v7M114.1 206.9h7M117.6 203.4v7M173.3 206.9h7M176.8 203.4v7M232.4 206.9h7M235.9 203.4v7M114.1 261.3h7M117.6 257.8v7M173.3 261.3h7M176.8 257.8v7M232.4 261.3h7M235.9 257.8v7M291.6 261.3h7M295.1 257.8v7M114.1 315.6h7M117.6 312.1v7M173.3 315.6h7M176.8 312.1v7M232.4 315.6h7M235.9 312.1v7M291.6 315.6h7M295.1 312.1v7M350.7 315.6h7M354.2 312.1v7M291.6 206.9h7M295.1 203.4v7M350.7 261.3h7M354.2 257.8v7M114.1 369.9h7M117.6 366.4v7M173.3 369.9h7M176.8 366.4v7M232.4 369.9h7M235.9 366.4v7M291.6 369.9h7M295.1 366.4v7M350.7 369.9h7M354.2 366.4v7M409.8 369.9h7M413.3 366.4v7M114.1 424.2h7M117.6 420.8v7M173.3 424.2h7M176.8 420.8v7M232.4 424.2h7M235.9 420.8v7M291.6 424.2h7M295.1 420.8v7M350.7 424.2h7M354.2 420.8v7M114.1 478.6h7M117.6 475.1v7M173.3 478.6h7M176.8 475.1v7M232.4 478.6h7M235.9 475.1v7M291.6 478.6h7M295.1 475.1v7" stroke="#aaa" stroke-width="1" fill="none" shape-rendering="crispEdges"/><path d="M160.99 530.29 L160.95 530.30 L160.92 530.30 L160.89 530.30 L160.85 530.30 L160.81 530.29 L160.77 530.29 L160.73 530.29 L160.68 530.29 L160.63 530.29 L160.58 530.29 L160.52 530.30 L160.47 530.30 L160.41 530.30 L160.34 530.30 L160.28 530.29 L160.21 530.28 L160.14 530.25 L160.06 530.22 L159.97 530.18 L159.87 530.13 L159.75 530.07 L159.63 530.00 L159.50 529.93 L159.36 529.84 L159.22 529.75 L159.07 529.65 L158.91 529.54 L158.75 529.42 L158.58 529.29 L158.39 529.15 L158.18 528.99 L157.96 528.82 L157.72 528.64 L157.47 528.44 L157.20 528.23 L156.93 528.00 L156.65 527.76 L156.36 527.51 L156.05 527.25 L155.73 526.98 L155.38 526.70 L155.02 526.40 L154.63 526.09 L154.22 525.76 L153.77 525.40 L153.30 525.02 L152.79 524.62 L152.26 524.20 L151.70 523.75 L151.11 523.28 L150.51 522.80 L149.88 522.29 L149.22 521.76 L148.53 521.18 L147.80 520.57 L147.04 519.90 L146.24 519.19 L145.41 518.43 L144.55 517.62 L143.66 516.77 L142.75 515.86 L141.80 514.88 L140.81 513.80 L139.75 512.59 L138.63 511.22 L137.44 509.68 L136.16 507.94 L134.81 506.00 L133.39 503.86 L131.89 501.50 L130.33 498.92 L128.69 496.08 L126.98 492.96 L125.19 489.53 L123.32 485.75 L121.36 481.59 L119.31 477.04 L117.16 472.08 L114.89 466.67 L112.49 460.81 L109.98 454.47 L107.35 447.63 L104.65 440.27 L101.90 432.35 L99.13 423.87 L96.36 414.79 L93.60 405.13 L90.84 394.88 L88.09 384.05 L85.35 372.64 L82.62 360.68 L79.93 348.23 L77.30 335.36 L74.78 322.16 L72.40 308.70 L70.18 295.07 L68.14 281.34 L66.32 267.60 L64.71 253.93 L63.35 240.41 L62.25 227.13 L61.43 214.13 L60.90 201.44 L60.69 189.11 L60.81 177.18 L61.27 165.69 L62.08 154.70 L63.26 144.27 L64.80 134.47 L66.72 125.35 L69.02 116.98 L71.67 109.40 L74.65 102.64 L77.94 96.76 L81.51 91.78 L85.32 87.74 L89.35 84.60 L93.57 82.28 L97.94 80.75 L102.44 79.94 L107.03 79.78 L111.71 80.20 L116.44 81.11 L121.22 82.43 L126.04 84.07 L130.87 85.95 L135.70 88.03 L140.51 90.27 L145.28 92.64 L149.99 95.09 L154.63 97.61 L159.20 100.19 L163.70 102.83 L168.16 105.53 L172.58 108.30 L176.97 111.13 L181.32 114.03 L185.66 117.00 L189.98 120.03 L194.29 123.13 L198.58 126.28 L202.88 129.49 L207.16 132.75 L211.43 136.07 L215.69 139.42 L219.94 142.83 L224.19 146.27 L228.42 149.75 L232.64 153.26 L236.87 156.81 L241.09 160.38 L245.31 163.99 L249.53 167.62 L253.75 171.27 L257.98 174.95 L262.21 178.65 L266.45 182.38 L270.69 186.12 L274.92 189.87 L279.15 193.64 L283.37 197.42 L287.59 201.21 L291.80 205.00 L296.00 208.80 L300.21 212.60 L304.41 216.40 L308.61 220.20 L312.80 223.99 L316.98 227.78 L321.14 231.56 L325.29 235.33 L329.41 239.10 L333.52 242.85 L337.60 246.58 L341.66 250.30 L345.70 254.00 L349.72 257.68 L353.70 261.33 L357.66 264.95 L361.59 268.55 L365.49 272.13 L369.35 275.66 L373.17 279.17 L376.95 282.63 L380.69 286.05 L384.39 289.42 L388.04 292.75 L391.64 296.03 L395.18 299.26 L398.67 302.45 L402.10 305.60 L405.46 308.68 L408.74 311.70 L411.95 314.65 L415.06 317.50 L418.07 320.26 L420.99 322.94 L423.83 325.54 L426.60 328.07 L429.31 330.54 L431.96 332.96 L434.54 335.33 L437.06 337.63 L439.50 339.86 L441.85 342.00 L444.10 344.05 L446.27 346.02 L448.34 347.90 L450.34 349.71 L452.25 351.45 L454.09 353.13 L455.86 354.75 L457.55 356.31 L459.17 357.80 L460.71 359.22 L462.19 360.58 L463.60 361.88 L464.94 363.12 L466.22 364.29 L467.45 365.42 L468.63 366.49 L469.75 367.51 L470.83 368.48 L471.85 369.41 L472.83 370.31 L473.77 371.16 L474.67 371.98 L475.53 372.77 L476.35 373.54 L477.15 374.27 L477.92 374.98 L478.67 375.67 L479.39 376.33 L480.09 376.97 L480.76 377.58 L481.40 378.18 L482.02 378.74 L482.61 379.29 L483.17 379.81 L483.72 380.30 L484.24 380.77 L484.73 381.22 L485.21 381.64 L485.66 382.04 L486.08 382.42 L486.48 382.78 L486.85 383.12 L487.21 383.45 L487.54 383.76 L487.86 384.05 L488.16 384.33 L488.44 384.59 L488.71 384.84 L488.97 385.08 L489.22 385.30 L489.45 385.51 L489.66 385.71 L489.87 385.90 L490.05 386.07 L490.22 386.22 L490.37 386.36 L490.51 386.49 L490.64 386.61 L490.76 386.71 L490.87 386.82 L490.99 386.92 L491.10 387.03 L491.21 387.13 L491.31 387.22 L491.40 387.31 L491.49 387.39 L491.58 387.47 L491.66 387.54 L491.74 387.62 L491.82 387.69 L491.90 387.76 L491.98 387.84 L492.07 387.92 L492.15 387.99 L492.23 388.07 L492.31 388.14 L492.39 388.21 L492.46 388.28 L492.53 388.34 L492.59 388.40 L492.65 388.45 L492.70 388.50 L492.74 388.54 L492.79 388.58 L492.82 388.61 L492.86 388.64 L492.88 388.67 L492.91 388.69 L492.93 388.71 L492.94 388.72 L492.96 388.73 L492.97 388.75 L492.98 388.76 L492.99 388.77 L493.00 388.78 Z" fill="none" stroke="#333" stroke-width="2" stroke-linejoin="round"/><path d="M232.4 196 L461.4 361.2 L146 500.5 Z" fill="none" stroke="#000" stroke-width="2" stroke-linejoin="miter"/><path d="M248 208 L441.2 351.9 L149.8 496.8 Z" fill="none" stroke="#333" stroke-width="1.8" stroke-dasharray="2 1.9"/><circle cx="262.7" cy="338" r="1.6" fill="#333"/><circle cx="161.0" cy="530.3" r="3.8" fill="#4800d0" stroke="#9a9a9a" stroke-width="1"/><circle cx="131.9" cy="501.5" r="3.8" fill="#0008c8" stroke="#9a9a9a" stroke-width="1"/><circle cx="112.5" cy="460.8" r="3.8" fill="#0050c8" stroke="#9a9a9a" stroke-width="1"/><circle cx="85.3" cy="372.6" r="3.8" fill="#1088b0" stroke="#9a9a9a" stroke-width="1"/><circle cx="63.3" cy="240.4" r="3.8" fill="#18c890" stroke="#9a9a9a" stroke-width="1"/><circle cx="66.7" cy="125.4" r="3.8" fill="#10e060" stroke="#9a9a9a" stroke-width="1"/><circle cx="102.4" cy="79.9" r="3.8" fill="#00f000" stroke="#9a9a9a" stroke-width="1"/><circle cx="150.0" cy="95.1" r="3.8" fill="#18e010" stroke="#9a9a9a" stroke-width="1"/><circle cx="194.3" cy="123.1" r="3.8" fill="#40c800" stroke="#9a9a9a" stroke-width="1"/><circle cx="279.2" cy="193.6" r="3.8" fill="#70a800" stroke="#9a9a9a" stroke-width="1"/><circle cx="361.6" cy="268.6" r="3.8" fill="#a88000" stroke="#9a9a9a" stroke-width="1"/><circle cx="429.3" cy="330.5" r="3.8" fill="#c84800" stroke="#9a9a9a" stroke-width="1"/><circle cx="467.5" cy="365.4" r="3.8" fill="#d80010" stroke="#9a9a9a" stroke-width="1"/><circle cx="493.0" cy="388.8" r="3.8" fill="#e80020" stroke="#9a9a9a" stroke-width="1"/><text x="87.9" y="87.4" font-size="12.6" fill="#e8e8e8" text-anchor="end">520</text><text x="159.3" y="100.5" font-size="12.6" fill="#e8e8e8" text-anchor="start">530</text><text x="203.6" y="128.3" font-size="12.6" fill="#e8e8e8" text-anchor="start">540</text><text x="75.8" y="129.8" font-size="12.6" fill="#222" text-anchor="start">510</text><text x="288.4" y="198.7" font-size="12.6" fill="#e8e8e8" text-anchor="start">560</text><text x="370.6" y="273.2" font-size="12.6" fill="#e8e8e8" text-anchor="start">580</text><text x="438.4" y="334.8" font-size="12.6" fill="#e8e8e8" text-anchor="start">600</text><text x="476.3" y="369.8" font-size="12.6" fill="#e8e8e8" text-anchor="start">620</text><text x="481.5" y="392.0" font-size="12.6" fill="#6a0010" text-anchor="end">700</text><text x="72.1" y="245.2" font-size="12.6" fill="#222" text-anchor="start">500</text><text x="94.3" y="376.4" font-size="12.6" fill="#222" text-anchor="start">490</text><text x="101.5" y="464.9" font-size="12.6" fill="#e8e8e8" text-anchor="end">480</text><text x="121.4" y="505.8" font-size="12.6" fill="#e8e8e8" text-anchor="end">470</text><text x="147.5" y="529.8" font-size="12.6" fill="#e8e8e8" text-anchor="end">400</text><text x="487" y="91.2" font-size="11.05" font-weight="bold" fill="#f4f4f4" text-anchor="end">Input:&#160; *sRGB</text><text x="487" y="104.8" font-size="11.05" font-weight="bold" fill="#f4f4f4" text-anchor="end">Output: FI32U_calib_argyll.icm</text><text x="487" y="119.1" font-size="11.05" font-weight="bold" fill="#f4f4f4" text-anchor="end">White point:&#160; x = 0.346&#160; y = 0.359</text><text x="487" y="132.9" font-size="11.05" font-weight="bold" fill="#f4f4f4" text-anchor="end">27-Sep-2021 18:48:41</text><path d="M117.5 532v-4M117.5 76v4M176.5 532v-4M176.5 76v4M235.5 532v-4M235.5 76v4M295.5 532v-4M295.5 76v4M354.5 532v-4M354.5 76v4M413.5 532v-4M413.5 76v4M472.5 532v-4M472.5 76v4M59 478.5h4M498 478.5h-4M59 424.5h4M498 424.5h-4M59 370.5h4M498 370.5h-4M59 315.5h4M498 315.5h-4M59 261.5h4M498 261.5h-4M59 207.5h4M498 207.5h-4M59 152.5h4M498 152.5h-4M59 98.5h4M498 98.5h-4" stroke="#000" stroke-width="1" fill="none"/><path d="M58.5 534v4M117.5 534v4M176.5 534v4M235.5 534v4M295.5 534v4M354.5 534v4M413.5 534v4M472.5 534v4M58 533.5h-4M58 479.5h-4M58 424.5h-4M58 370.5h-4M58 316.5h-4M58 261.5h-4M58 207.5h-4M58 153.5h-4M58 98.5h-4" stroke="#b8b8b8" stroke-width="1" fill="none"/><path d="M58 75h442v1h-442zM58 75h1v459h-1zM498 75h2v459h-2zM58 532h442v2h-442z" fill="#000"/><text x="58.5" y="548" font-size="12" fill="#111" text-anchor="middle">0</text><text x="117.6" y="548" font-size="12" fill="#111" text-anchor="middle">0.1</text><text x="176.8" y="548" font-size="12" fill="#111" text-anchor="middle">0.2</text><text x="235.9" y="548" font-size="12" fill="#111" text-anchor="middle">0.3</text><text x="295.1" y="548" font-size="12" fill="#111" text-anchor="middle">0.4</text><text x="354.2" y="548" font-size="12" fill="#111" text-anchor="middle">0.5</text><text x="413.3" y="548" font-size="12" fill="#111" text-anchor="middle">0.6</text><text x="472.5" y="548" font-size="12" fill="#111" text-anchor="middle">0.7</text><text x="53.8" y="537.2" font-size="12" fill="#111" text-anchor="end">0</text><text x="53.8" y="482.9" font-size="12" fill="#111" text-anchor="end">0.1</text><text x="53.8" y="428.6" font-size="12" fill="#111" text-anchor="end">0.2</text><text x="53.8" y="374.2" font-size="12" fill="#111" text-anchor="end">0.3</text><text x="53.8" y="319.9" font-size="12" fill="#111" text-anchor="end">0.4</text><text x="53.8" y="265.6" font-size="12" fill="#111" text-anchor="end">0.5</text><text x="53.8" y="211.2" font-size="12" fill="#111" text-anchor="end">0.6</text><text x="53.8" y="156.9" font-size="12" fill="#111" text-anchor="end">0.7</text><text x="53.8" y="102.6" font-size="12" fill="#111" text-anchor="end">0.8</text><text x="276.7" y="563.5" font-size="13" font-weight="bold" fill="#000" text-anchor="middle">x</text><text transform="translate(28.5 305) rotate(-90)" x="0" y="0" font-size="13" font-weight="bold" fill="#000" text-anchor="middle">y</text><text x="277.3" y="65.4" font-size="13.4" font-weight="bold" fill="#000" text-anchor="middle">CIE 1931 xy Chromaticity diagram</text></svg>
<svg class="a" style="left:552px;top:56px" width="234" height="233" viewBox="0 0 234 233" shape-rendering="crispEdges"><defs><linearGradient id="c0" x1="0" x2="1" y1="0" y2="0"><stop offset="0.000" stop-color="#ff0000"/><stop offset="0.039" stop-color="#ff0300"/><stop offset="0.043" stop-color="#ff1d00"/><stop offset="0.060" stop-color="#ff4b00"/><stop offset="0.124" stop-color="#ffbd00"/><stop offset="0.167" stop-color="#fcfe00"/><stop offset="0.266" stop-color="#57ff00"/><stop offset="0.288" stop-color="#27ff00"/><stop offset="0.292" stop-color="#17ff00"/><stop offset="0.296" stop-color="#00ff00"/><stop offset="0.361" stop-color="#00ff00"/><stop offset="0.365" stop-color="#00ff07"/><stop offset="0.369" stop-color="#00ff1b"/><stop offset="0.391" stop-color="#00ff4c"/><stop offset="0.498" stop-color="#00fffd"/><stop offset="0.506" stop-color="#00faff"/><stop offset="0.665" stop-color="#000aff"/><stop offset="0.678" stop-color="#0006ff"/><stop offset="0.700" stop-color="#2e02ff"/><stop offset="0.833" stop-color="#ff00ff"/><stop offset="0.841" stop-color="#ff00f8"/><stop offset="0.953" stop-color="#ff0041"/><stop offset="0.970" stop-color="#ff001b"/><stop offset="0.979" stop-color="#ff0000"/><stop offset="1.000" stop-color="#ff0000"/></linearGradient><linearGradient id="c3" x1="0" x2="1" y1="0" y2="0"><stop offset="0.000" stop-color="#ff0000"/><stop offset="0.034" stop-color="#ff0000"/><stop offset="0.039" stop-color="#ff0900"/><stop offset="0.043" stop-color="#ff1f00"/><stop offset="0.060" stop-color="#ff4b00"/><stop offset="0.129" stop-color="#ffc300"/><stop offset="0.167" stop-color="#fafd00"/><stop offset="0.266" stop-color="#58ff00"/><stop offset="0.288" stop-color="#28ff00"/><stop offset="0.292" stop-color="#1aff00"/><stop offset="0.296" stop-color="#02ff00"/><stop offset="0.361" stop-color="#00ff00"/><stop offset="0.378" stop-color="#00ff33"/><stop offset="0.433" stop-color="#00ff96"/><stop offset="0.498" stop-color="#00fffc"/><stop offset="0.506" stop-color="#00f9ff"/><stop offset="0.665" stop-color="#000bff"/><stop offset="0.678" stop-color="#0207ff"/><stop offset="0.700" stop-color="#2f03ff"/><stop offset="0.833" stop-color="#fe00ff"/><stop offset="0.845" stop-color="#ff00f0"/><stop offset="0.953" stop-color="#ff0042"/><stop offset="0.970" stop-color="#ff001d"/><stop offset="0.979" stop-color="#ff0000"/><stop offset="1.000" stop-color="#ff0000"/></linearGradient><linearGradient id="c6" x1="0" x2="1" y1="0" y2="0"><stop offset="0.000" stop-color="#ff0000"/><stop offset="0.034" stop-color="#ff0000"/><stop offset="0.047" stop-color="#ff2e00"/><stop offset="0.077" stop-color="#ff6d00"/><stop offset="0.163" stop-color="#fcf800"/><stop offset="0.253" stop-color="#6fff00"/><stop offset="0.283" stop-color="#35ff00"/><stop offset="0.292" stop-color="#1dff00"/><stop offset="0.296" stop-color="#07ff00"/><stop offset="0.300" stop-color="#00ff00"/><stop offset="0.361" stop-color="#00ff00"/><stop offset="0.373" stop-color="#00ff2a"/><stop offset="0.416" stop-color="#00ff7a"/><stop offset="0.502" stop-color="#00fefe"/><stop offset="0.665" stop-color="#000cff"/><stop offset="0.678" stop-color="#0408ff"/><stop offset="0.704" stop-color="#3703ff"/><stop offset="0.833" stop-color="#fd00ff"/><stop offset="0.931" stop-color="#ff0068"/><stop offset="0.966" stop-color="#ff0029"/><stop offset="0.974" stop-color="#ff0011"/><stop offset="0.979" stop-color="#ff0000"/><stop offset="1.000" stop-color="#ff0000"/></linearGradient><linearGradient id="c9" x1="0" x2="1" y1="0" y2="0"><stop offset="0.000" stop-color="#ff0000"/><stop offset="0.034" stop-color="#ff0000"/><stop offset="0.047" stop-color="#ff3000"/><stop offset="0.082" stop-color="#ff7400"/><stop offset="0.167" stop-color="#f8fa00"/><stop offset="0.266" stop-color="#59ff00"/><stop offset="0.288" stop-color="#2cff00"/><stop offset="0.300" stop-color="#00ff00"/><stop offset="0.361" stop-color="#00ff00"/><stop offset="0.369" stop-color="#00ff21"/><stop offset="0.399" stop-color="#00ff5e"/><stop offset="0.498" stop-color="#00fffa"/><stop offset="0.528" stop-color="#00d6fe"/><stop offset="0.665" stop-color="#000dff"/><stop offset="0.674" stop-color="#000aff"/><stop offset="0.712" stop-color="#4500ff"/><stop offset="0.837" stop-color="#ff00fb"/><stop offset="0.953" stop-color="#ff0044"/><stop offset="0.974" stop-color="#ff0014"/><stop offset="0.979" stop-color="#ff0001"/><stop offset="1.000" stop-color="#ff0000"/></linearGradient><linearGradient id="c12" x1="0" x2="1" y1="0" y2="0"><stop offset="0.000" stop-color="#fe0000"/><stop offset="0.034" stop-color="#fe0000"/><stop offset="0.043" stop-color="#fe2500"/><stop offset="0.069" stop-color="#fe5e00"/><stop offset="0.163" stop-color="#faf600"/><stop offset="0.253" stop-color="#70fd00"/><stop offset="0.288" stop-color="#2dfe00"/><stop offset="0.300" stop-color="#00fe00"/><stop offset="0.361" stop-color="#00fe00"/><stop offset="0.365" stop-color="#00fe15"/><stop offset="0.382" stop-color="#00fe3f"/><stop offset="0.468" stop-color="#00fecb"/><stop offset="0.502" stop-color="#00fbfc"/><stop offset="0.665" stop-color="#000eff"/><stop offset="0.674" stop-color="#000bff"/><stop offset="0.704" stop-color="#3805ff"/><stop offset="0.747" stop-color="#7a00fe"/><stop offset="0.837" stop-color="#fe00f9"/><stop offset="0.953" stop-color="#fe0044"/><stop offset="0.974" stop-color="#fe0017"/><stop offset="0.979" stop-color="#fe0005"/><stop offset="0.991" stop-color="#fe0000"/><stop offset="1.000" stop-color="#fe0000"/></linearGradient><linearGradient id="c15" x1="0" x2="1" y1="0" y2="0"><stop offset="0.000" stop-color="#fd0000"/><stop offset="0.034" stop-color="#fd0000"/><stop offset="0.039" stop-color="#fd1900"/><stop offset="0.052" stop-color="#fc3d00"/><stop offset="0.103" stop-color="#fb9800"/><stop offset="0.167" stop-color="#f5f800"/><stop offset="0.270" stop-color="#52fc00"/><stop offset="0.292" stop-color="#23fd00"/><stop offset="0.300" stop-color="#00fd00"/><stop offset="0.356" stop-color="#00fd00"/><stop offset="0.361" stop-color="#00fd04"/><stop offset="0.365" stop-color="#00fd18"/><stop offset="0.386" stop-color="#00fd48"/><stop offset="0.498" stop-color="#00fdf7"/><stop offset="0.665" stop-color="#000ffd"/><stop offset="0.674" stop-color="#010cfd"/><stop offset="0.700" stop-color="#3307fd"/><stop offset="0.738" stop-color="#6e00fd"/><stop offset="0.837" stop-color="#fc00f8"/><stop offset="0.957" stop-color="#fd003e"/><stop offset="0.974" stop-color="#fd0019"/><stop offset="0.983" stop-color="#fd0000"/><stop offset="1.000" stop-color="#fd0000"/></linearGradient><linearGradient id="c18" x1="0" x2="1" y1="0" y2="0"><stop offset="0.000" stop-color="#fc0000"/><stop offset="0.030" stop-color="#fb0000"/><stop offset="0.034" stop-color="#fb0400"/><stop offset="0.039" stop-color="#fb1b00"/><stop offset="0.056" stop-color="#fb4700"/><stop offset="0.124" stop-color="#f9b900"/><stop offset="0.167" stop-color="#f4f600"/><stop offset="0.270" stop-color="#53fb00"/><stop offset="0.292" stop-color="#25fb00"/><stop offset="0.296" stop-color="#17fb00"/><stop offset="0.300" stop-color="#00fb00"/><stop offset="0.356" stop-color="#00fc00"/><stop offset="0.361" stop-color="#00fc09"/><stop offset="0.369" stop-color="#00fc26"/><stop offset="0.408" stop-color="#00fc6d"/><stop offset="0.502" stop-color="#00f9f9"/><stop offset="0.665" stop-color="#0010fc"/><stop offset="0.674" stop-color="#030dfc"/><stop offset="0.700" stop-color="#3309fc"/><stop offset="0.734" stop-color="#6800fc"/><stop offset="0.837" stop-color="#fb00f7"/><stop offset="0.957" stop-color="#fc003e"/><stop offset="0.974" stop-color="#fc001b"/><stop offset="0.983" stop-color="#fc0000"/><stop offset="1.000" stop-color="#fc0000"/></linearGradient><linearGradient id="c21" x1="0" x2="1" y1="0" y2="0"><stop offset="0.000" stop-color="#fa0000"/><stop offset="0.030" stop-color="#fa0000"/><stop offset="0.034" stop-color="#fa0a00"/><stop offset="0.039" stop-color="#fa1e00"/><stop offset="0.056" stop-color="#fa4800"/><stop offset="0.129" stop-color="#f8bf00"/><stop offset="0.167" stop-color="#f3f500"/><stop offset="0.270" stop-color="#53fa00"/><stop offset="0.292" stop-color="#27fa00"/><stop offset="0.296" stop-color="#1afa00"/><stop offset="0.300" stop-color="#04fa00"/><stop offset="0.322" stop-color="#00fa00"/><stop offset="0.356" stop-color="#00fa00"/><stop offset="0.369" stop-color="#00fa28"/><stop offset="0.412" stop-color="#00fa74"/><stop offset="0.502" stop-color="#00f7f8"/><stop offset="0.665" stop-color="#0011fb"/><stop offset="0.674" stop-color="#050efb"/><stop offset="0.700" stop-color="#340afb"/><stop offset="0.738" stop-color="#6e00fa"/><stop offset="0.837" stop-color="#fa00f5"/><stop offset="0.957" stop-color="#fa003f"/><stop offset="0.974" stop-color="#fa001d"/><stop offset="0.983" stop-color="#fa0000"/><stop offset="1.000" stop-color="#fa0000"/></linearGradient><linearGradient id="c24" x1="0" x2="1" y1="0" y2="0"><stop offset="0.000" stop-color="#f90000"/><stop offset="0.030" stop-color="#f90000"/><stop offset="0.043" stop-color="#f82d00"/><stop offset="0.077" stop-color="#f86e00"/><stop offset="0.167" stop-color="#f1f400"/><stop offset="0.270" stop-color="#54f800"/><stop offset="0.292" stop-color="#29f900"/><stop offset="0.300" stop-color="#0af900"/><stop offset="0.305" stop-color="#00f900"/><stop offset="0.356" stop-color="#00f900"/><stop offset="0.369" stop-color="#00f929"/><stop offset="0.412" stop-color="#00f974"/><stop offset="0.502" stop-color="#00f6f6"/><stop offset="0.665" stop-color="#0012f9"/><stop offset="0.674" stop-color="#070ff9"/><stop offset="0.704" stop-color="#3c09f9"/><stop offset="0.738" stop-color="#6e00f9"/><stop offset="0.837" stop-color="#f800f4"/><stop offset="0.957" stop-color="#f90040"/><stop offset="0.979" stop-color="#f90013"/><stop offset="0.983" stop-color="#f90002"/><stop offset="1.000" stop-color="#f90000"/></linearGradient><linearGradient id="c27" x1="0" x2="1" y1="0" y2="0"><stop offset="0.000" stop-color="#f70000"/><stop offset="0.030" stop-color="#f70000"/><stop offset="0.039" stop-color="#f72300"/><stop offset="0.064" stop-color="#f75900"/><stop offset="0.163" stop-color="#f3ef00"/><stop offset="0.258" stop-color="#6af600"/><stop offset="0.292" stop-color="#2af700"/><stop offset="0.305" stop-color="#00f700"/><stop offset="0.356" stop-color="#00f700"/><stop offset="0.365" stop-color="#00f721"/><stop offset="0.399" stop-color="#00f860"/><stop offset="0.502" stop-color="#00f5f5"/><stop offset="0.665" stop-color="#0013f8"/><stop offset="0.670" stop-color="#0011f8"/><stop offset="0.700" stop-color="#360cf8"/><stop offset="0.738" stop-color="#6f00f8"/><stop offset="0.837" stop-color="#f700f3"/><stop offset="0.957" stop-color="#f70041"/><stop offset="0.979" stop-color="#f70016"/><stop offset="0.983" stop-color="#f70006"/><stop offset="0.991" stop-color="#f70000"/><stop offset="1.000" stop-color="#f70000"/></linearGradient><linearGradient id="c30" x1="0" x2="1" y1="0" y2="0"><stop offset="0.000" stop-color="#f60000"/><stop offset="0.030" stop-color="#f60000"/><stop offset="0.034" stop-color="#f61700"/><stop offset="0.047" stop-color="#f63900"/><stop offset="0.099" stop-color="#f59000"/><stop offset="0.167" stop-color="#eff100"/><stop offset="0.275" stop-color="#4ef500"/><stop offset="0.296" stop-color="#21f600"/><stop offset="0.305" stop-color="#00f600"/><stop offset="0.352" stop-color="#00f600"/><stop offset="0.356" stop-color="#00f604"/><stop offset="0.365" stop-color="#00f623"/><stop offset="0.403" stop-color="#00f667"/><stop offset="0.502" stop-color="#00f3f3"/><stop offset="0.665" stop-color="#0015f7"/><stop offset="0.670" stop-color="#0212f7"/><stop offset="0.695" stop-color="#310ef6"/><stop offset="0.738" stop-color="#6f00f6"/><stop offset="0.837" stop-color="#f500f1"/><stop offset="0.961" stop-color="#f6003b"/><stop offset="0.979" stop-color="#f60018"/><stop offset="0.987" stop-color="#f60000"/><stop offset="1.000" stop-color="#f60000"/></linearGradient><linearGradient id="c33" x1="0" x2="1" y1="0" y2="0"><stop offset="0.000" stop-color="#f50000"/><stop offset="0.030" stop-color="#f40400"/><stop offset="0.034" stop-color="#f41a00"/><stop offset="0.052" stop-color="#f44300"/><stop offset="0.120" stop-color="#f2af00"/><stop offset="0.167" stop-color="#edf000"/><stop offset="0.275" stop-color="#4ff400"/><stop offset="0.296" stop-color="#23f400"/><stop offset="0.300" stop-color="#16f400"/><stop offset="0.305" stop-color="#01f500"/><stop offset="0.352" stop-color="#00f500"/><stop offset="0.369" stop-color="#00f52e"/><stop offset="0.425" stop-color="#00f588"/><stop offset="0.502" stop-color="#00f2f2"/><stop offset="0.665" stop-color="#0016f5"/><stop offset="0.725" stop-color="#5d04f5"/><stop offset="0.781" stop-color="#aa00f4"/><stop offset="0.837" stop-color="#f400f0"/><stop offset="0.961" stop-color="#f5003c"/><stop offset="0.979" stop-color="#f5001a"/><stop offset="0.987" stop-color="#f50000"/><stop offset="1.000" stop-color="#f50000"/></linearGradient><linearGradient id="c36" x1="0" x2="1" y1="0" y2="0"><stop offset="0.000" stop-color="#f30000"/><stop offset="0.026" stop-color="#f30000"/><stop offset="0.030" stop-color="#f30a00"/><stop offset="0.039" stop-color="#f32900"/><stop offset="0.073" stop-color="#f26900"/><stop offset="0.167" stop-color="#ecee00"/><stop offset="0.275" stop-color="#50f300"/><stop offset="0.296" stop-color="#25f300"/><stop offset="0.300" stop-color="#19f300"/><stop offset="0.305" stop-color="#05f300"/><stop offset="0.318" stop-color="#00f300"/><stop offset="0.352" stop-color="#00f300"/><stop offset="0.365" stop-color="#00f326"/><stop offset="0.408" stop-color="#00f36f"/><stop offset="0.502" stop-color="#00f1f1"/><stop offset="0.665" stop-color="#0217f4"/><stop offset="0.721" stop-color="#5808f4"/><stop offset="0.747" stop-color="#7b00f3"/><stop offset="0.837" stop-color="#f300ef"/><stop offset="0.961" stop-color="#f3003d"/><stop offset="0.983" stop-color="#f30011"/><stop offset="0.987" stop-color="#f30000"/><stop offset="1.000" stop-color="#f30000"/></linearGradient><linearGradient id="c39" x1="0" x2="1" y1="0" y2="0"><stop offset="0.000" stop-color="#f20000"/><stop offset="0.026" stop-color="#f20000"/><stop offset="0.039" stop-color="#f22b00"/><stop offset="0.073" stop-color="#f16900"/><stop offset="0.167" stop-color="#ebed00"/><stop offset="0.275" stop-color="#50f100"/><stop offset="0.296" stop-color="#27f200"/><stop offset="0.309" stop-color="#00f200"/><stop offset="0.352" stop-color="#00f200"/><stop offset="0.361" stop-color="#00f21e"/><stop offset="0.391" stop-color="#00f255"/><stop offset="0.502" stop-color="#00efef"/><stop offset="0.665" stop-color="#0418f2"/><stop offset="0.730" stop-color="#6405f2"/><stop offset="0.755" stop-color="#8700f2"/><stop offset="0.837" stop-color="#f100ed"/><stop offset="0.961" stop-color="#f2003e"/><stop offset="0.983" stop-color="#f20014"/><stop offset="0.987" stop-color="#f20004"/><stop offset="1.000" stop-color="#f20000"/></linearGradient><linearGradient id="c42" x1="0" x2="1" y1="0" y2="0"><stop offset="0.000" stop-color="#f00000"/><stop offset="0.026" stop-color="#f00000"/><stop offset="0.034" stop-color="#f02200"/><stop offset="0.060" stop-color="#f05500"/><stop offset="0.163" stop-color="#ece800"/><stop offset="0.266" stop-color="#5ff000"/><stop offset="0.296" stop-color="#29f000"/><stop offset="0.309" stop-color="#00f000"/><stop offset="0.352" stop-color="#00f103"/><stop offset="0.361" stop-color="#00f120"/><stop offset="0.395" stop-color="#00f15c"/><stop offset="0.502" stop-color="#00eeee"/><stop offset="0.648" stop-color="#042ff1"/><stop offset="0.665" stop-color="#0619f1"/><stop offset="0.730" stop-color="#6407f1"/><stop offset="0.751" stop-color="#8100f0"/><stop offset="0.837" stop-color="#f000ec"/><stop offset="0.966" stop-color="#f00038"/><stop offset="0.983" stop-color="#f00016"/><stop offset="0.991" stop-color="#f00000"/><stop offset="1.000" stop-color="#f00000"/></linearGradient><linearGradient id="c45" x1="0" x2="1" y1="0" y2="0"><stop offset="0.000" stop-color="#ef0000"/><stop offset="0.026" stop-color="#ef0100"/><stop offset="0.030" stop-color="#ef1700"/><stop offset="0.047" stop-color="#ef4000"/><stop offset="0.116" stop-color="#eda700"/><stop offset="0.167" stop-color="#e8ea00"/><stop offset="0.279" stop-color="#4bef00"/><stop offset="0.300" stop-color="#21ef00"/><stop offset="0.309" stop-color="#00ef00"/><stop offset="0.348" stop-color="#00ef00"/><stop offset="0.352" stop-color="#00ef08"/><stop offset="0.361" stop-color="#00ef23"/><stop offset="0.399" stop-color="#00ef63"/><stop offset="0.502" stop-color="#00eded"/><stop offset="0.635" stop-color="#0340ef"/><stop offset="0.665" stop-color="#091af0"/><stop offset="0.730" stop-color="#6509ef"/><stop offset="0.755" stop-color="#8700ef"/><stop offset="0.837" stop-color="#ef00eb"/><stop offset="0.966" stop-color="#ef0039"/><stop offset="0.983" stop-color="#ef0019"/><stop offset="0.991" stop-color="#ef0000"/><stop offset="1.000" stop-color="#ef0000"/></linearGradient><linearGradient id="c48" x1="0" x2="1" y1="0" y2="0"><stop offset="0.000" stop-color="#ee0000"/><stop offset="0.021" stop-color="#ee0000"/><stop offset="0.026" stop-color="#ee0700"/><stop offset="0.030" stop-color="#ed1a00"/><stop offset="0.052" stop-color="#ed4800"/><stop offset="0.142" stop-color="#ebc900"/><stop offset="0.167" stop-color="#e7e900"/><stop offset="0.279" stop-color="#4ced00"/><stop offset="0.300" stop-color="#23ed00"/><stop offset="0.305" stop-color="#17ee00"/><stop offset="0.309" stop-color="#04ee00"/><stop offset="0.348" stop-color="#00ee00"/><stop offset="0.361" stop-color="#00ee24"/><stop offset="0.403" stop-color="#00ee6a"/><stop offset="0.502" stop-color="#00ebeb"/><stop offset="0.627" stop-color="#034cee"/><stop offset="0.670" stop-color="#1019ee"/><stop offset="0.730" stop-color="#650cee"/><stop offset="0.755" stop-color="#8700ee"/><stop offset="0.837" stop-color="#ed00e9"/><stop offset="0.966" stop-color="#ee003a"/><stop offset="0.987" stop-color="#ee0010"/><stop offset="0.991" stop-color="#ee0001"/><stop offset="1.000" stop-color="#ee0000"/></linearGradient><linearGradient id="c51" x1="0" x2="1" y1="0" y2="0"><stop offset="0.000" stop-color="#ec0000"/><stop offset="0.021" stop-color="#ec0000"/><stop offset="0.034" stop-color="#ec2800"/><stop offset="0.069" stop-color="#eb6400"/><stop offset="0.167" stop-color="#e5e700"/><stop offset="0.279" stop-color="#4dec00"/><stop offset="0.300" stop-color="#25ec00"/><stop offset="0.313" stop-color="#00ec00"/><stop offset="0.348" stop-color="#00ec00"/><stop offset="0.356" stop-color="#00ec1d"/><stop offset="0.391" stop-color="#00ec58"/><stop offset="0.502" stop-color="#00eaea"/><stop offset="0.618" stop-color="#0357ec"/><stop offset="0.670" stop-color="#121aed"/><stop offset="0.734" stop-color="#6b0bec"/><stop offset="0.755" stop-color="#8600ec"/><stop offset="0.837" stop-color="#ec00e8"/><stop offset="0.966" stop-color="#ec003b"/><stop offset="0.987" stop-color="#ec0013"/><stop offset="0.991" stop-color="#ec0004"/><stop offset="1.000" stop-color="#ec0000"/></linearGradient><linearGradient id="c54" x1="0" x2="1" y1="0" y2="0"><stop offset="0.000" stop-color="#eb0000"/><stop offset="0.021" stop-color="#eb0000"/><stop offset="0.030" stop-color="#eb2000"/><stop offset="0.056" stop-color="#ea5100"/><stop offset="0.163" stop-color="#e7e300"/><stop offset="0.270" stop-color="#5aea00"/><stop offset="0.300" stop-color="#27eb00"/><stop offset="0.313" stop-color="#00eb00"/><stop offset="0.348" stop-color="#00eb03"/><stop offset="0.356" stop-color="#00eb1f"/><stop offset="0.395" stop-color="#00eb5e"/><stop offset="0.502" stop-color="#00e8e8"/><stop offset="0.614" stop-color="#045deb"/><stop offset="0.670" stop-color="#141beb"/><stop offset="0.734" stop-color="#6b0eeb"/><stop offset="0.760" stop-color="#8c00eb"/><stop offset="0.837" stop-color="#ea00e6"/><stop offset="0.970" stop-color="#eb0036"/><stop offset="0.987" stop-color="#eb0016"/><stop offset="0.996" stop-color="#eb0000"/><stop offset="1.000" stop-color="#eb0000"/></linearGradient><linearGradient id="c57" x1="0" x2="1" y1="0" y2="0"><stop offset="0.000" stop-color="#e90000"/><stop offset="0.021" stop-color="#e90100"/><stop offset="0.026" stop-color="#e91600"/><stop offset="0.043" stop-color="#e93d00"/><stop offset="0.116" stop-color="#e7a500"/><stop offset="0.167" stop-color="#e3e500"/><stop offset="0.283" stop-color="#48e900"/><stop offset="0.305" stop-color="#20e900"/><stop offset="0.313" stop-color="#00e900"/><stop offset="0.343" stop-color="#00e900"/><stop offset="0.361" stop-color="#00e92a"/><stop offset="0.421" stop-color="#00ea81"/><stop offset="0.502" stop-color="#00e7e7"/><stop offset="0.605" stop-color="#0368e9"/><stop offset="0.670" stop-color="#161cea"/><stop offset="0.738" stop-color="#710ee9"/><stop offset="0.764" stop-color="#9100e9"/><stop offset="0.837" stop-color="#e900e5"/><stop offset="0.970" stop-color="#e90037"/><stop offset="0.987" stop-color="#e90019"/><stop offset="0.996" stop-color="#e90000"/><stop offset="1.000" stop-color="#e90000"/></linearGradient><linearGradient id="c60" x1="0" x2="1" y1="0" y2="0"><stop offset="0.000" stop-color="#e80000"/><stop offset="0.017" stop-color="#e80000"/><stop offset="0.021" stop-color="#e80800"/><stop offset="0.030" stop-color="#e82500"/><stop offset="0.064" stop-color="#e75f00"/><stop offset="0.167" stop-color="#e1e300"/><stop offset="0.283" stop-color="#49e800"/><stop offset="0.305" stop-color="#22e800"/><stop offset="0.313" stop-color="#05e800"/><stop offset="0.326" stop-color="#00e800"/><stop offset="0.343" stop-color="#00e800"/><stop offset="0.356" stop-color="#00e824"/><stop offset="0.403" stop-color="#00e86b"/><stop offset="0.502" stop-color="#00e6e6"/><stop offset="0.597" stop-color="#0273e8"/><stop offset="0.652" stop-color="#1330e8"/><stop offset="0.670" stop-color="#181ee8"/><stop offset="0.738" stop-color="#7110e8"/><stop offset="0.768" stop-color="#9600e8"/><stop offset="0.837" stop-color="#e700e4"/><stop offset="0.970" stop-color="#e80038"/><stop offset="0.991" stop-color="#e80011"/><stop offset="0.996" stop-color="#e80002"/><stop offset="1.000" stop-color="#e80000"/></linearGradient><linearGradient id="c63" x1="0" x2="1" y1="0" y2="0"><stop offset="0.000" stop-color="#e70000"/><stop offset="0.017" stop-color="#e60000"/><stop offset="0.030" stop-color="#e62700"/><stop offset="0.069" stop-color="#e66600"/><stop offset="0.167" stop-color="#e0e200"/><stop offset="0.283" stop-color="#4ae600"/><stop offset="0.309" stop-color="#1ae600"/><stop offset="0.318" stop-color="#00e700"/><stop offset="0.343" stop-color="#00e701"/><stop offset="0.352" stop-color="#00e71d"/><stop offset="0.391" stop-color="#00e75a"/><stop offset="0.502" stop-color="#00e4e4"/><stop offset="0.592" stop-color="#0378e6"/><stop offset="0.648" stop-color="#1436e7"/><stop offset="0.670" stop-color="#191fe7"/><stop offset="0.742" stop-color="#7710e7"/><stop offset="0.773" stop-color="#9b00e6"/><stop offset="0.837" stop-color="#e600e2"/><stop offset="0.970" stop-color="#e7003a"/><stop offset="0.991" stop-color="#e70014"/><stop offset="1.000" stop-color="#e70000"/></linearGradient><linearGradient id="c66" x1="0" x2="1" y1="0" y2="0"><stop offset="0.000" stop-color="#e50000"/><stop offset="0.017" stop-color="#e50000"/><stop offset="0.026" stop-color="#e51f00"/><stop offset="0.056" stop-color="#e55400"/><stop offset="0.163" stop-color="#e1de00"/><stop offset="0.275" stop-color="#57e400"/><stop offset="0.305" stop-color="#27e500"/><stop offset="0.318" stop-color="#00e500"/><stop offset="0.339" stop-color="#00e500"/><stop offset="0.343" stop-color="#00e506"/><stop offset="0.352" stop-color="#00e51f"/><stop offset="0.395" stop-color="#00e560"/><stop offset="0.502" stop-color="#00e3e3"/><stop offset="0.584" stop-color="#0283e5"/><stop offset="0.635" stop-color="#1446e5"/><stop offset="0.670" stop-color="#1b20e6"/><stop offset="0.742" stop-color="#7713e5"/><stop offset="0.777" stop-color="#a000e5"/><stop offset="0.837" stop-color="#e500e1"/><stop offset="0.974" stop-color="#e50035"/><stop offset="0.991" stop-color="#e50017"/><stop offset="1.000" stop-color="#e50000"/></linearGradient><linearGradient id="c69" x1="0" x2="1" y1="0" y2="0"><stop offset="0.000" stop-color="#e40000"/><stop offset="0.017" stop-color="#e40400"/><stop offset="0.026" stop-color="#e32200"/><stop offset="0.060" stop-color="#e35b00"/><stop offset="0.167" stop-color="#dddf00"/><stop offset="0.288" stop-color="#45e300"/><stop offset="0.309" stop-color="#20e400"/><stop offset="0.318" stop-color="#02e400"/><stop offset="0.339" stop-color="#00e400"/><stop offset="0.356" stop-color="#00e429"/><stop offset="0.421" stop-color="#00e481"/><stop offset="0.502" stop-color="#00e1e1"/><stop offset="0.579" stop-color="#0388e3"/><stop offset="0.631" stop-color="#164ce4"/><stop offset="0.670" stop-color="#1d22e4"/><stop offset="0.747" stop-color="#7c13e4"/><stop offset="0.781" stop-color="#a400e3"/><stop offset="0.837" stop-color="#e300e0"/><stop offset="0.974" stop-color="#e40036"/><stop offset="0.996" stop-color="#e4000f"/><stop offset="1.000" stop-color="#e40001"/></linearGradient><linearGradient id="c72" x1="0" x2="1" y1="0" y2="0"><stop offset="0.000" stop-color="#e20000"/><stop offset="0.013" stop-color="#e20000"/><stop offset="0.030" stop-color="#e22d00"/><stop offset="0.082" stop-color="#e17800"/><stop offset="0.167" stop-color="#dcde00"/><stop offset="0.288" stop-color="#46e200"/><stop offset="0.313" stop-color="#18e200"/><stop offset="0.322" stop-color="#00e200"/><stop offset="0.339" stop-color="#00e201"/><stop offset="0.348" stop-color="#00e21b"/><stop offset="0.386" stop-color="#00e256"/><stop offset="0.502" stop-color="#00e0e0"/><stop offset="0.571" stop-color="#0291e2"/><stop offset="0.618" stop-color="#165be2"/><stop offset="0.670" stop-color="#1f23e3"/><stop offset="0.751" stop-color="#8114e2"/><stop offset="0.785" stop-color="#a900e2"/><stop offset="0.837" stop-color="#e200de"/><stop offset="0.974" stop-color="#e20037"/><stop offset="0.996" stop-color="#e20013"/><stop offset="1.000" stop-color="#e20006"/></linearGradient><linearGradient id="c75" x1="0" x2="1" y1="0" y2="0"><stop offset="0.000" stop-color="#e10004"/><stop offset="0.013" stop-color="#e10002"/><stop offset="0.021" stop-color="#e11d01"/><stop offset="0.052" stop-color="#e05100"/><stop offset="0.163" stop-color="#ddda00"/><stop offset="0.279" stop-color="#53e000"/><stop offset="0.309" stop-color="#25e100"/><stop offset="0.322" stop-color="#00e100"/><stop offset="0.335" stop-color="#00e100"/><stop offset="0.339" stop-color="#00e105"/><stop offset="0.348" stop-color="#00e11e"/><stop offset="0.391" stop-color="#00e15d"/><stop offset="0.502" stop-color="#00dfde"/><stop offset="0.567" stop-color="#0396e0"/><stop offset="0.614" stop-color="#1761e1"/><stop offset="0.670" stop-color="#2024e1"/><stop offset="0.751" stop-color="#8116e1"/><stop offset="0.790" stop-color="#ad00e0"/><stop offset="0.837" stop-color="#e000dd"/><stop offset="0.979" stop-color="#e10033"/><stop offset="0.996" stop-color="#e10016"/><stop offset="1.000" stop-color="#e1000b"/></linearGradient><linearGradient id="c78" x1="0" x2="1" y1="0" y2="0"><stop offset="0.000" stop-color="#df0008"/><stop offset="0.013" stop-color="#df0307"/><stop offset="0.021" stop-color="#df2005"/><stop offset="0.056" stop-color="#df5700"/><stop offset="0.167" stop-color="#d9db00"/><stop offset="0.292" stop-color="#43df00"/><stop offset="0.313" stop-color="#1edf00"/><stop offset="0.322" stop-color="#02df00"/><stop offset="0.335" stop-color="#00df00"/><stop offset="0.352" stop-color="#00df28"/><stop offset="0.421" stop-color="#00df82"/><stop offset="0.502" stop-color="#00dddd"/><stop offset="0.558" stop-color="#029fde"/><stop offset="0.605" stop-color="#176bdf"/><stop offset="0.670" stop-color="#2226e0"/><stop offset="0.755" stop-color="#8616df"/><stop offset="0.794" stop-color="#b100df"/><stop offset="0.837" stop-color="#df00db"/><stop offset="0.979" stop-color="#df0034"/><stop offset="1.000" stop-color="#df000f"/></linearGradient><linearGradient id="c81" x1="0" x2="1" y1="0" y2="0"><stop offset="0.000" stop-color="#de000d"/><stop offset="0.009" stop-color="#de000c"/><stop offset="0.026" stop-color="#de2b0a"/><stop offset="0.077" stop-color="#dd7300"/><stop offset="0.167" stop-color="#d8d900"/><stop offset="0.292" stop-color="#44dd00"/><stop offset="0.318" stop-color="#17de00"/><stop offset="0.326" stop-color="#00de00"/><stop offset="0.335" stop-color="#00de01"/><stop offset="0.348" stop-color="#00de23"/><stop offset="0.403" stop-color="#00de6d"/><stop offset="0.502" stop-color="#00dcdc"/><stop offset="0.554" stop-color="#03a3dd"/><stop offset="0.601" stop-color="#1870de"/><stop offset="0.670" stop-color="#2427de"/><stop offset="0.760" stop-color="#8b17de"/><stop offset="0.798" stop-color="#b500dd"/><stop offset="0.837" stop-color="#dd00da"/><stop offset="0.979" stop-color="#de0036"/><stop offset="1.000" stop-color="#de0013"/></linearGradient><linearGradient id="c84" x1="0" x2="1" y1="0" y2="0"><stop offset="0.000" stop-color="#dc0011"/><stop offset="0.009" stop-color="#dc0010"/><stop offset="0.017" stop-color="#dc1c0f"/><stop offset="0.047" stop-color="#dc4e0a"/><stop offset="0.099" stop-color="#db8d00"/><stop offset="0.167" stop-color="#d6d800"/><stop offset="0.292" stop-color="#45dc00"/><stop offset="0.318" stop-color="#1adc00"/><stop offset="0.326" stop-color="#00dc00"/><stop offset="0.335" stop-color="#00dc06"/><stop offset="0.348" stop-color="#00dc25"/><stop offset="0.412" stop-color="#00dc78"/><stop offset="0.502" stop-color="#00dada"/><stop offset="0.545" stop-color="#02acdb"/><stop offset="0.588" stop-color="#187edc"/><stop offset="0.670" stop-color="#2528dd"/><stop offset="0.760" stop-color="#8a1adc"/><stop offset="0.794" stop-color="#b005dc"/><stop offset="0.820" stop-color="#cc00db"/><stop offset="0.837" stop-color="#dc00d8"/><stop offset="0.983" stop-color="#dc0031"/><stop offset="1.000" stop-color="#dc0016"/></linearGradient><linearGradient id="c87" x1="0" x2="1" y1="0" y2="0"><stop offset="0.000" stop-color="#db0014"/><stop offset="0.009" stop-color="#db0514"/><stop offset="0.017" stop-color="#db2013"/><stop offset="0.052" stop-color="#da540e"/><stop offset="0.107" stop-color="#d99600"/><stop offset="0.167" stop-color="#d5d600"/><stop offset="0.292" stop-color="#46da01"/><stop offset="0.318" stop-color="#1edb03"/><stop offset="0.326" stop-color="#04db04"/><stop offset="0.330" stop-color="#00db04"/><stop offset="0.352" stop-color="#00db2e"/><stop offset="0.442" stop-color="#00db99"/><stop offset="0.502" stop-color="#00d9d9"/><stop offset="0.541" stop-color="#04b0da"/><stop offset="0.584" stop-color="#1982db"/><stop offset="0.670" stop-color="#272adb"/><stop offset="0.764" stop-color="#8f1adb"/><stop offset="0.798" stop-color="#b406da"/><stop offset="0.815" stop-color="#c600da"/><stop offset="0.837" stop-color="#da00d7"/><stop offset="0.983" stop-color="#db0033"/><stop offset="1.000" stop-color="#db0019"/></linearGradient><linearGradient id="c90" x1="0" x2="1" y1="0" y2="0"><stop offset="0.000" stop-color="#d90017"/><stop offset="0.004" stop-color="#d90017"/><stop offset="0.017" stop-color="#d92216"/><stop offset="0.060" stop-color="#d96010"/><stop offset="0.120" stop-color="#d7a400"/><stop offset="0.167" stop-color="#d3d500"/><stop offset="0.283" stop-color="#52d904"/><stop offset="0.318" stop-color="#20d909"/><stop offset="0.330" stop-color="#00d90a"/><stop offset="0.361" stop-color="#00d93b"/><stop offset="0.498" stop-color="#00dad5"/><stop offset="0.532" stop-color="#03b8d8"/><stop offset="0.575" stop-color="#198bd9"/><stop offset="0.670" stop-color="#292bda"/><stop offset="0.768" stop-color="#931bd9"/><stop offset="0.803" stop-color="#b708d9"/><stop offset="0.820" stop-color="#c900d8"/><stop offset="0.837" stop-color="#d900d6"/><stop offset="0.983" stop-color="#d90034"/><stop offset="1.000" stop-color="#d9001b"/></linearGradient><linearGradient id="c93" x1="0" x2="1" y1="0" y2="0"><stop offset="0.000" stop-color="#d8001a"/><stop offset="0.004" stop-color="#d8011a"/><stop offset="0.013" stop-color="#d81d1a"/><stop offset="0.047" stop-color="#d75116"/><stop offset="0.133" stop-color="#d5b100"/><stop offset="0.167" stop-color="#d2d400"/><stop offset="0.258" stop-color="#71d705"/><stop offset="0.313" stop-color="#2bd80e"/><stop offset="0.326" stop-color="#10d80f"/><stop offset="0.330" stop-color="#01d80f"/><stop offset="0.373" stop-color="#00d84d"/><stop offset="0.502" stop-color="#00d6d6"/><stop offset="0.524" stop-color="#02c0d6"/><stop offset="0.567" stop-color="#1994d7"/><stop offset="0.670" stop-color="#2a2cd8"/><stop offset="0.773" stop-color="#971cd7"/><stop offset="0.811" stop-color="#bf05d7"/><stop offset="0.837" stop-color="#d700d4"/><stop offset="0.987" stop-color="#d80030"/><stop offset="1.000" stop-color="#d8001e"/></linearGradient><linearGradient id="c96" x1="0" x2="1" y1="0" y2="0"><stop offset="0.000" stop-color="#d6001d"/><stop offset="0.017" stop-color="#d6281c"/><stop offset="0.069" stop-color="#d66b16"/><stop offset="0.142" stop-color="#d4b900"/><stop offset="0.167" stop-color="#d0d200"/><stop offset="0.236" stop-color="#89d505"/><stop offset="0.309" stop-color="#33d612"/><stop offset="0.326" stop-color="#15d613"/><stop offset="0.330" stop-color="#07d614"/><stop offset="0.339" stop-color="#00d620"/><stop offset="0.395" stop-color="#00d666"/><stop offset="0.502" stop-color="#00d4d4"/><stop offset="0.519" stop-color="#05c3d5"/><stop offset="0.562" stop-color="#1b98d6"/><stop offset="0.670" stop-color="#2c2ed7"/><stop offset="0.777" stop-color="#9b1dd6"/><stop offset="0.815" stop-color="#c207d5"/><stop offset="0.833" stop-color="#d400d5"/><stop offset="0.979" stop-color="#d6003d"/><stop offset="1.000" stop-color="#d60021"/></linearGradient><linearGradient id="c99" x1="0" x2="1" y1="0" y2="0"><stop offset="0.000" stop-color="#d50020"/><stop offset="0.013" stop-color="#d5231f"/><stop offset="0.060" stop-color="#d4621a"/><stop offset="0.129" stop-color="#d3ab07"/><stop offset="0.159" stop-color="#d1ca00"/><stop offset="0.176" stop-color="#c6d100"/><stop offset="0.223" stop-color="#96d308"/><stop offset="0.309" stop-color="#35d516"/><stop offset="0.326" stop-color="#19d517"/><stop offset="0.335" stop-color="#06d51b"/><stop offset="0.382" stop-color="#04d558"/><stop offset="0.502" stop-color="#00d3d3"/><stop offset="0.554" stop-color="#1ba0d4"/><stop offset="0.670" stop-color="#2d2fd5"/><stop offset="0.777" stop-color="#9b20d4"/><stop offset="0.820" stop-color="#c509d4"/><stop offset="0.833" stop-color="#d200d3"/><stop offset="0.983" stop-color="#d50039"/><stop offset="1.000" stop-color="#d50023"/></linearGradient><linearGradient id="c102" x1="0" x2="1" y1="0" y2="0"><stop offset="0.000" stop-color="#d30522"/><stop offset="0.009" stop-color="#d31e22"/><stop offset="0.047" stop-color="#d3541f"/><stop offset="0.129" stop-color="#d1aa0d"/><stop offset="0.163" stop-color="#d0cd00"/><stop offset="0.210" stop-color="#a3d10b"/><stop offset="0.309" stop-color="#37d31a"/><stop offset="0.335" stop-color="#0dd31e"/><stop offset="0.391" stop-color="#0bd362"/><stop offset="0.502" stop-color="#04d1d1"/><stop offset="0.541" stop-color="#1aacd2"/><stop offset="0.648" stop-color="#2c44d4"/><stop offset="0.670" stop-color="#2f31d4"/><stop offset="0.781" stop-color="#9e21d3"/><stop offset="0.824" stop-color="#c80cd2"/><stop offset="0.841" stop-color="#d301cc"/><stop offset="0.991" stop-color="#d30030"/><stop offset="1.000" stop-color="#d30025"/></linearGradient><linearGradient id="c105" x1="0" x2="1" y1="0" y2="0"><stop offset="0.000" stop-color="#d20d24"/><stop offset="0.017" stop-color="#d22f24"/><stop offset="0.094" stop-color="#d0871b"/><stop offset="0.155" stop-color="#cfc307"/><stop offset="0.172" stop-color="#c8ce03"/><stop offset="0.249" stop-color="#7bd118"/><stop offset="0.318" stop-color="#2dd21d"/><stop offset="0.335" stop-color="#12d221"/><stop offset="0.403" stop-color="#10d270"/><stop offset="0.502" stop-color="#0bd0d0"/><stop offset="0.558" stop-color="#229bd1"/><stop offset="0.670" stop-color="#3132d2"/><stop offset="0.785" stop-color="#a222d1"/><stop offset="0.833" stop-color="#cf0bd0"/><stop offset="0.987" stop-color="#d20537"/><stop offset="1.000" stop-color="#d20527"/></linearGradient><linearGradient id="c108" x1="0" x2="1" y1="0" y2="0"><stop offset="0.000" stop-color="#d01327"/><stop offset="0.026" stop-color="#d03c25"/><stop offset="0.137" stop-color="#ceb114"/><stop offset="0.167" stop-color="#cbcc09"/><stop offset="0.258" stop-color="#72cf1c"/><stop offset="0.322" stop-color="#29d020"/><stop offset="0.335" stop-color="#17d024"/><stop offset="0.412" stop-color="#15d079"/><stop offset="0.502" stop-color="#11cfce"/><stop offset="0.575" stop-color="#278ad0"/><stop offset="0.670" stop-color="#3234d1"/><stop offset="0.790" stop-color="#a523d0"/><stop offset="0.837" stop-color="#d00fcd"/><stop offset="0.996" stop-color="#d00c2f"/><stop offset="1.000" stop-color="#d00c2a"/></linearGradient><linearGradient id="c111" x1="0" x2="1" y1="0" y2="0"><stop offset="0.000" stop-color="#cf1829"/><stop offset="0.030" stop-color="#ce4328"/><stop offset="0.146" stop-color="#ccb816"/><stop offset="0.167" stop-color="#c9cb10"/><stop offset="0.288" stop-color="#54ce22"/><stop offset="0.335" stop-color="#1bcf27"/><stop offset="0.425" stop-color="#19cf86"/><stop offset="0.502" stop-color="#16cdcd"/><stop offset="0.592" stop-color="#2c7ace"/><stop offset="0.670" stop-color="#3435cf"/><stop offset="0.794" stop-color="#a925ce"/><stop offset="0.837" stop-color="#ce15cb"/><stop offset="0.996" stop-color="#cf1231"/><stop offset="1.000" stop-color="#cf122c"/></linearGradient><linearGradient id="c114" x1="0" x2="1" y1="0" y2="0"><stop offset="0.000" stop-color="#cd1c2b"/><stop offset="0.039" stop-color="#cd4e29"/><stop offset="0.159" stop-color="#cac317"/><stop offset="0.180" stop-color="#bcca18"/><stop offset="0.313" stop-color="#39cd26"/><stop offset="0.335" stop-color="#1ecd29"/><stop offset="0.438" stop-color="#1ccd92"/><stop offset="0.502" stop-color="#1acccb"/><stop offset="0.605" stop-color="#2f6fcd"/><stop offset="0.670" stop-color="#3536ce"/><stop offset="0.798" stop-color="#ac26cc"/><stop offset="0.837" stop-color="#cd19ca"/><stop offset="1.000" stop-color="#cd172e"/></linearGradient><linearGradient id="c117" x1="0" x2="1" y1="0" y2="0"><stop offset="0.000" stop-color="#cc1f2d"/><stop offset="0.047" stop-color="#cb582b"/><stop offset="0.167" stop-color="#c6c81a"/><stop offset="0.313" stop-color="#3bcc28"/><stop offset="0.335" stop-color="#22cc2b"/><stop offset="0.451" stop-color="#1fcc9d"/><stop offset="0.502" stop-color="#1ecaca"/><stop offset="0.618" stop-color="#3264cc"/><stop offset="0.670" stop-color="#3738cc"/><stop offset="0.803" stop-color="#af27cb"/><stop offset="0.837" stop-color="#cb1dc8"/><stop offset="1.000" stop-color="#cc1c30"/></linearGradient><linearGradient id="c120" x1="0" x2="1" y1="0" y2="0"><stop offset="0.000" stop-color="#ca232f"/><stop offset="0.056" stop-color="#c9622d"/><stop offset="0.167" stop-color="#c5c61e"/><stop offset="0.313" stop-color="#3cca2b"/><stop offset="0.335" stop-color="#25ca2e"/><stop offset="0.468" stop-color="#22caac"/><stop offset="0.502" stop-color="#22c8c8"/><stop offset="0.635" stop-color="#3556ca"/><stop offset="0.670" stop-color="#3939ca"/><stop offset="0.811" stop-color="#b528c9"/><stop offset="0.837" stop-color="#ca21c7"/><stop offset="1.000" stop-color="#ca1f32"/></linearGradient><linearGradient id="c123" x1="0" x2="1" y1="0" y2="0"><stop offset="0.000" stop-color="#c92632"/><stop offset="0.069" stop-color="#c86f2e"/><stop offset="0.167" stop-color="#c3c522"/><stop offset="0.318" stop-color="#39c82d"/><stop offset="0.335" stop-color="#28c930"/><stop offset="0.485" stop-color="#25c9ba"/><stop offset="0.506" stop-color="#26c3c7"/><stop offset="0.657" stop-color="#3844c9"/><stop offset="0.674" stop-color="#3e3bc9"/><stop offset="0.815" stop-color="#b829c8"/><stop offset="0.837" stop-color="#c824c5"/><stop offset="1.000" stop-color="#c92334"/></linearGradient><linearGradient id="c126" x1="0" x2="1" y1="0" y2="0"><stop offset="0.000" stop-color="#c72934"/><stop offset="0.077" stop-color="#c67730"/><stop offset="0.167" stop-color="#c2c325"/><stop offset="0.318" stop-color="#3bc72f"/><stop offset="0.335" stop-color="#2ac732"/><stop offset="0.498" stop-color="#27c7c3"/><stop offset="0.661" stop-color="#3a42c7"/><stop offset="0.682" stop-color="#473cc7"/><stop offset="0.824" stop-color="#be2ac6"/><stop offset="0.841" stop-color="#c727c0"/><stop offset="1.000" stop-color="#c72636"/></linearGradient><linearGradient id="c129" x1="0" x2="1" y1="0" y2="0"><stop offset="0.000" stop-color="#c52c36"/><stop offset="0.090" stop-color="#c48231"/><stop offset="0.167" stop-color="#c0c228"/><stop offset="0.322" stop-color="#39c532"/><stop offset="0.339" stop-color="#2dc539"/><stop offset="0.502" stop-color="#2bc4c3"/><stop offset="0.670" stop-color="#3d3ec6"/><stop offset="0.824" stop-color="#bc2dc4"/><stop offset="0.845" stop-color="#c52abb"/><stop offset="1.000" stop-color="#c52938"/></linearGradient><linearGradient id="c132" x1="0" x2="1" y1="0" y2="0"><stop offset="0.000" stop-color="#c42f38"/><stop offset="0.107" stop-color="#c29132"/><stop offset="0.167" stop-color="#bfc02b"/><stop offset="0.326" stop-color="#37c434"/><stop offset="0.343" stop-color="#30c43f"/><stop offset="0.502" stop-color="#2ec2c2"/><stop offset="0.670" stop-color="#3f3fc4"/><stop offset="0.837" stop-color="#c32dc1"/><stop offset="1.000" stop-color="#c42c3a"/></linearGradient><linearGradient id="c135" x1="0" x2="1" y1="0" y2="0"><stop offset="0.000" stop-color="#c2313a"/><stop offset="0.120" stop-color="#c09a33"/><stop offset="0.167" stop-color="#bdbe2e"/><stop offset="0.326" stop-color="#39c236"/><stop offset="0.343" stop-color="#32c241"/><stop offset="0.502" stop-color="#30c1c0"/><stop offset="0.670" stop-color="#4141c2"/><stop offset="0.837" stop-color="#c230bf"/><stop offset="1.000" stop-color="#c22f3c"/></linearGradient><linearGradient id="c138" x1="0" x2="1" y1="0" y2="0"><stop offset="0.000" stop-color="#c1343c"/><stop offset="0.137" stop-color="#bea734"/><stop offset="0.167" stop-color="#bcbd31"/><stop offset="0.335" stop-color="#35c13b"/><stop offset="0.502" stop-color="#33bfbf"/><stop offset="0.670" stop-color="#4243c1"/><stop offset="0.837" stop-color="#c032be"/><stop offset="1.000" stop-color="#c1323d"/></linearGradient><linearGradient id="c141" x1="0" x2="1" y1="0" y2="0"><stop offset="0.000" stop-color="#bf373d"/><stop offset="0.159" stop-color="#bcb634"/><stop offset="0.193" stop-color="#a7bc35"/><stop offset="0.335" stop-color="#37bf3d"/><stop offset="0.502" stop-color="#36bdbd"/><stop offset="0.670" stop-color="#4444bf"/><stop offset="0.837" stop-color="#be35bc"/><stop offset="1.000" stop-color="#bf343f"/></linearGradient><linearGradient id="c144" x1="0" x2="1" y1="0" y2="0"><stop offset="0.000" stop-color="#bd393f"/><stop offset="0.163" stop-color="#bab836"/><stop offset="0.335" stop-color="#3abd3f"/><stop offset="0.502" stop-color="#38bcbb"/><stop offset="0.670" stop-color="#4546be"/><stop offset="0.837" stop-color="#bd38ba"/><stop offset="1.000" stop-color="#bd3741"/></linearGradient><linearGradient id="c147" x1="0" x2="1" y1="0" y2="0"><stop offset="0.000" stop-color="#bc3b41"/><stop offset="0.163" stop-color="#b9b639"/><stop offset="0.335" stop-color="#3cbc41"/><stop offset="0.502" stop-color="#3ababa"/><stop offset="0.670" stop-color="#4747bc"/><stop offset="0.837" stop-color="#bb3ab9"/><stop offset="1.000" stop-color="#bc3a43"/></linearGradient><linearGradient id="c150" x1="0" x2="1" y1="0" y2="0"><stop offset="0.000" stop-color="#ba3e43"/><stop offset="0.167" stop-color="#b5b63b"/><stop offset="0.335" stop-color="#3eba43"/><stop offset="0.502" stop-color="#3db9b8"/><stop offset="0.670" stop-color="#4949ba"/><stop offset="0.837" stop-color="#ba3cb7"/><stop offset="1.000" stop-color="#ba3c45"/></linearGradient><linearGradient id="c153" x1="0" x2="1" y1="0" y2="0"><stop offset="0.000" stop-color="#b84045"/><stop offset="0.167" stop-color="#b4b53e"/><stop offset="0.335" stop-color="#40b845"/><stop offset="0.502" stop-color="#3fb7b6"/><stop offset="0.670" stop-color="#4a4ab9"/><stop offset="0.837" stop-color="#b83fb6"/><stop offset="1.000" stop-color="#b83e47"/></linearGradient><linearGradient id="c156" x1="0" x2="1" y1="0" y2="0"><stop offset="0.000" stop-color="#b64247"/><stop offset="0.167" stop-color="#b2b340"/><stop offset="0.335" stop-color="#43b747"/><stop offset="0.502" stop-color="#42b5b5"/><stop offset="0.670" stop-color="#4c4cb7"/><stop offset="0.837" stop-color="#b641b4"/><stop offset="1.000" stop-color="#b64149"/></linearGradient><linearGradient id="c159" x1="0" x2="1" y1="0" y2="0"><stop offset="0.000" stop-color="#b54549"/><stop offset="0.167" stop-color="#b1b243"/><stop offset="0.335" stop-color="#45b549"/><stop offset="0.502" stop-color="#44b4b3"/><stop offset="0.670" stop-color="#4e4eb5"/><stop offset="0.837" stop-color="#b444b2"/><stop offset="1.000" stop-color="#b5434b"/></linearGradient><linearGradient id="c162" x1="0" x2="1" y1="0" y2="0"><stop offset="0.000" stop-color="#b3474b"/><stop offset="0.167" stop-color="#afb045"/><stop offset="0.335" stop-color="#47b34b"/><stop offset="0.502" stop-color="#46b2b1"/><stop offset="0.674" stop-color="#524fb3"/><stop offset="0.837" stop-color="#b346b1"/><stop offset="1.000" stop-color="#b3454c"/></linearGradient><linearGradient id="c165" x1="0" x2="1" y1="0" y2="0"><stop offset="0.000" stop-color="#b1494d"/><stop offset="0.167" stop-color="#adae47"/><stop offset="0.335" stop-color="#49b14d"/><stop offset="0.502" stop-color="#48b0b0"/><stop offset="0.674" stop-color="#5451b2"/><stop offset="0.837" stop-color="#b148af"/><stop offset="1.000" stop-color="#b1484e"/></linearGradient><linearGradient id="c168" x1="0" x2="1" y1="0" y2="0"><stop offset="0.000" stop-color="#b04b4f"/><stop offset="0.172" stop-color="#a9ad4a"/><stop offset="0.335" stop-color="#4bb04f"/><stop offset="0.506" stop-color="#4bacae"/><stop offset="0.674" stop-color="#5553b0"/><stop offset="0.841" stop-color="#af4aab"/><stop offset="1.000" stop-color="#b04a50"/></linearGradient><linearGradient id="c171" x1="0" x2="1" y1="0" y2="0"><stop offset="0.000" stop-color="#ae4e51"/><stop offset="0.172" stop-color="#a8ab4c"/><stop offset="0.339" stop-color="#4eae53"/><stop offset="0.506" stop-color="#4daaac"/><stop offset="0.674" stop-color="#5754ae"/><stop offset="0.841" stop-color="#ad4da9"/><stop offset="1.000" stop-color="#ae4c52"/></linearGradient><linearGradient id="c174" x1="0" x2="1" y1="0" y2="0"><stop offset="0.000" stop-color="#ac5053"/><stop offset="0.172" stop-color="#a6a94e"/><stop offset="0.339" stop-color="#50ac55"/><stop offset="0.506" stop-color="#4fa9ab"/><stop offset="0.674" stop-color="#5856ac"/><stop offset="0.841" stop-color="#ac4fa8"/><stop offset="1.000" stop-color="#ac4f54"/></linearGradient><linearGradient id="c177" x1="0" x2="1" y1="0" y2="0"><stop offset="0.000" stop-color="#aa5255"/><stop offset="0.172" stop-color="#a4a751"/><stop offset="0.339" stop-color="#52aa57"/><stop offset="0.506" stop-color="#51a7a9"/><stop offset="0.674" stop-color="#5a58aa"/><stop offset="0.841" stop-color="#aa51a6"/><stop offset="1.000" stop-color="#aa5156"/></linearGradient><linearGradient id="c180" x1="0" x2="1" y1="0" y2="0"><stop offset="0.000" stop-color="#a85457"/><stop offset="0.172" stop-color="#a3a653"/><stop offset="0.339" stop-color="#54a859"/><stop offset="0.506" stop-color="#54a5a7"/><stop offset="0.674" stop-color="#5c59a8"/><stop offset="0.841" stop-color="#a853a4"/><stop offset="1.000" stop-color="#a85358"/></linearGradient><linearGradient id="c183" x1="0" x2="1" y1="0" y2="0"><stop offset="0.000" stop-color="#a65659"/><stop offset="0.172" stop-color="#a1a455"/><stop offset="0.339" stop-color="#56a65b"/><stop offset="0.506" stop-color="#56a4a5"/><stop offset="0.674" stop-color="#5d5ba7"/><stop offset="0.841" stop-color="#a656a3"/><stop offset="1.000" stop-color="#a6555a"/></linearGradient><linearGradient id="c186" x1="0" x2="1" y1="0" y2="0"><stop offset="0.000" stop-color="#a4595b"/><stop offset="0.172" stop-color="#a0a257"/><stop offset="0.339" stop-color="#58a45d"/><stop offset="0.506" stop-color="#58a2a3"/><stop offset="0.674" stop-color="#5f5da5"/><stop offset="0.841" stop-color="#a458a1"/><stop offset="1.000" stop-color="#a4585c"/></linearGradient><linearGradient id="c189" x1="0" x2="1" y1="0" y2="0"><stop offset="0.000" stop-color="#a35b5d"/><stop offset="0.172" stop-color="#9ea05a"/><stop offset="0.339" stop-color="#5ba35f"/><stop offset="0.506" stop-color="#5aa0a1"/><stop offset="0.674" stop-color="#615fa3"/><stop offset="0.841" stop-color="#a25a9f"/><stop offset="1.000" stop-color="#a35a5e"/></linearGradient><linearGradient id="c192" x1="0" x2="1" y1="0" y2="0"><stop offset="0.000" stop-color="#a15d5f"/><stop offset="0.172" stop-color="#9c9e5c"/><stop offset="0.339" stop-color="#5da160"/><stop offset="0.506" stop-color="#5d9e9f"/><stop offset="0.674" stop-color="#6361a1"/><stop offset="0.841" stop-color="#a05c9d"/><stop offset="1.000" stop-color="#a15c60"/></linearGradient><linearGradient id="c195" x1="0" x2="1" y1="0" y2="0"><stop offset="0.000" stop-color="#9f5f61"/><stop offset="0.172" stop-color="#9a9c5e"/><stop offset="0.339" stop-color="#5f9f62"/><stop offset="0.506" stop-color="#5f9c9d"/><stop offset="0.678" stop-color="#66639f"/><stop offset="0.841" stop-color="#9e5f9c"/><stop offset="1.000" stop-color="#9f5e62"/></linearGradient><linearGradient id="c198" x1="0" x2="1" y1="0" y2="0"><stop offset="0.000" stop-color="#9d6163"/><stop offset="0.176" stop-color="#979b61"/><stop offset="0.343" stop-color="#619d66"/><stop offset="0.511" stop-color="#61999c"/><stop offset="0.678" stop-color="#68649d"/><stop offset="0.845" stop-color="#9c6198"/><stop offset="1.000" stop-color="#9d6164"/></linearGradient><linearGradient id="c201" x1="0" x2="1" y1="0" y2="0"><stop offset="0.000" stop-color="#9a6465"/><stop offset="0.176" stop-color="#959963"/><stop offset="0.343" stop-color="#649b68"/><stop offset="0.511" stop-color="#63979a"/><stop offset="0.678" stop-color="#69669b"/><stop offset="0.845" stop-color="#9a6396"/><stop offset="1.000" stop-color="#9a6366"/></linearGradient><linearGradient id="c204" x1="0" x2="1" y1="0" y2="0"><stop offset="0.000" stop-color="#986667"/><stop offset="0.176" stop-color="#949765"/><stop offset="0.343" stop-color="#66986a"/><stop offset="0.511" stop-color="#669597"/><stop offset="0.678" stop-color="#6b6899"/><stop offset="0.845" stop-color="#986595"/><stop offset="1.000" stop-color="#986568"/></linearGradient><linearGradient id="c207" x1="0" x2="1" y1="0" y2="0"><stop offset="0.000" stop-color="#966869"/><stop offset="0.180" stop-color="#919568"/><stop offset="0.343" stop-color="#68966c"/><stop offset="0.511" stop-color="#689395"/><stop offset="0.682" stop-color="#6e6a96"/><stop offset="0.845" stop-color="#966893"/><stop offset="1.000" stop-color="#96686a"/></linearGradient><linearGradient id="c210" x1="0" x2="1" y1="0" y2="0"><stop offset="0.000" stop-color="#946b6c"/><stop offset="0.180" stop-color="#8f936a"/><stop offset="0.348" stop-color="#6b946f"/><stop offset="0.515" stop-color="#6a9193"/><stop offset="0.682" stop-color="#706c94"/><stop offset="0.850" stop-color="#946a90"/><stop offset="1.000" stop-color="#946a6c"/></linearGradient><linearGradient id="c213" x1="0" x2="1" y1="0" y2="0"><stop offset="0.000" stop-color="#926d6e"/><stop offset="0.185" stop-color="#8c906d"/><stop offset="0.348" stop-color="#6d9271"/><stop offset="0.515" stop-color="#6d8f91"/><stop offset="0.687" stop-color="#736f92"/><stop offset="0.850" stop-color="#926d8e"/><stop offset="1.000" stop-color="#926d6e"/></linearGradient><linearGradient id="c216" x1="0" x2="1" y1="0" y2="0"><stop offset="0.000" stop-color="#8f7070"/><stop offset="0.185" stop-color="#8b8e6f"/><stop offset="0.352" stop-color="#6f8f73"/><stop offset="0.519" stop-color="#6f8c8f"/><stop offset="0.691" stop-color="#75718f"/><stop offset="0.854" stop-color="#8f6f8b"/><stop offset="1.000" stop-color="#8f6f71"/></linearGradient><linearGradient id="c219" x1="0" x2="1" y1="0" y2="0"><stop offset="0.000" stop-color="#8d7273"/><stop offset="0.193" stop-color="#888c72"/><stop offset="0.356" stop-color="#728d76"/><stop offset="0.524" stop-color="#72898c"/><stop offset="0.695" stop-color="#77738d"/><stop offset="0.863" stop-color="#8d7288"/><stop offset="1.000" stop-color="#8d7273"/></linearGradient><linearGradient id="c222" x1="0" x2="1" y1="0" y2="0"><stop offset="0.000" stop-color="#8a7575"/><stop offset="0.197" stop-color="#858a75"/><stop offset="0.369" stop-color="#758a7a"/><stop offset="0.536" stop-color="#75868a"/><stop offset="0.704" stop-color="#7a758a"/><stop offset="0.871" stop-color="#8a7585"/><stop offset="1.000" stop-color="#8a7575"/></linearGradient><linearGradient id="c225" x1="0" x2="1" y1="0" y2="0"><stop offset="0.000" stop-color="#877878"/><stop offset="0.215" stop-color="#828778"/><stop offset="0.391" stop-color="#78877d"/><stop offset="0.558" stop-color="#788287"/><stop offset="0.730" stop-color="#7e7887"/><stop offset="0.897" stop-color="#877782"/><stop offset="1.000" stop-color="#877778"/></linearGradient><linearGradient id="c228" x1="0" x2="1" y1="0" y2="0"><stop offset="0.000" stop-color="#847b7b"/><stop offset="0.275" stop-color="#7e847b"/><stop offset="0.584" stop-color="#7b8084"/><stop offset="0.918" stop-color="#847b80"/><stop offset="1.000" stop-color="#847b7b"/></linearGradient><linearGradient id="c231" x1="0" x2="1" y1="0" y2="0"><stop offset="0.000" stop-color="#817e7e"/><stop offset="1.000" stop-color="#817e7e"/></linearGradient></defs><rect x="0" y="0" width="234" height="3" fill="url(#c0)"/><rect x="0" y="3" width="234" height="3" fill="url(#c3)"/><rect x="0" y="6" width="234" height="3" fill="url(#c6)"/><rect x="0" y="9" width="234" height="3" fill="url(#c9)"/><rect x="0" y="12" width="234" height="3" fill="url(#c12)"/><rect x="0" y="15" width="234" height="3" fill="url(#c15)"/><rect x="0" y="18" width="234" height="3" fill="url(#c18)"/><rect x="0" y="21" width="234" height="3" fill="url(#c21)"/><rect x="0" y="24" width="234" height="3" fill="url(#c24)"/><rect x="0" y="27" width="234" height="3" fill="url(#c27)"/><rect x="0" y="30" width="234" height="3" fill="url(#c30)"/><rect x="0" y="33" width="234" height="3" fill="url(#c33)"/><rect x="0" y="36" width="234" height="3" fill="url(#c36)"/><rect x="0" y="39" width="234" height="3" fill="url(#c39)"/><rect x="0" y="42" width="234" height="3" fill="url(#c42)"/><rect x="0" y="45" width="234" height="3" fill="url(#c45)"/><rect x="0" y="48" width="234" height="3" fill="url(#c48)"/><rect x="0" y="51" width="234" height="3" fill="url(#c51)"/><rect x="0" y="54" width="234" height="3" fill="url(#c54)"/><rect x="0" y="57" width="234" height="3" fill="url(#c57)"/><rect x="0" y="60" width="234" height="3" fill="url(#c60)"/><rect x="0" y="63" width="234" height="3" fill="url(#c63)"/><rect x="0" y="66" width="234" height="3" fill="url(#c66)"/><rect x="0" y="69" width="234" height="3" fill="url(#c69)"/><rect x="0" y="72" width="234" height="3" fill="url(#c72)"/><rect x="0" y="75" width="234" height="3" fill="url(#c75)"/><rect x="0" y="78" width="234" height="3" fill="url(#c78)"/><rect x="0" y="81" width="234" height="3" fill="url(#c81)"/><rect x="0" y="84" width="234" height="3" fill="url(#c84)"/><rect x="0" y="87" width="234" height="3" fill="url(#c87)"/><rect x="0" y="90" width="234" height="3" fill="url(#c90)"/><rect x="0" y="93" width="234" height="3" fill="url(#c93)"/><rect x="0" y="96" width="234" height="3" fill="url(#c96)"/><rect x="0" y="99" width="234" height="3" fill="url(#c99)"/><rect x="0" y="102" width="234" height="3" fill="url(#c102)"/><rect x="0" y="105" width="234" height="3" fill="url(#c105)"/><rect x="0" y="108" width="234" height="3" fill="url(#c108)"/><rect x="0" y="111" width="234" height="3" fill="url(#c111)"/><rect x="0" y="114" width="234" height="3" fill="url(#c114)"/><rect x="0" y="117" width="234" height="3" fill="url(#c117)"/><rect x="0" y="120" width="234" height="3" fill="url(#c120)"/><rect x="0" y="123" width="234" height="3" fill="url(#c123)"/><rect x="0" y="126" width="234" height="3" fill="url(#c126)"/><rect x="0" y="129" width="234" height="3" fill="url(#c129)"/><rect x="0" y="132" width="234" height="3" fill="url(#c132)"/><rect x="0" y="135" width="234" height="3" fill="url(#c135)"/><rect x="0" y="138" width="234" height="3" fill="url(#c138)"/><rect x="0" y="141" width="234" height="3" fill="url(#c141)"/><rect x="0" y="144" width="234" height="3" fill="url(#c144)"/><rect x="0" y="147" width="234" height="3" fill="url(#c147)"/><rect x="0" y="150" width="234" height="3" fill="url(#c150)"/><rect x="0" y="153" width="234" height="3" fill="url(#c153)"/><rect x="0" y="156" width="234" height="3" fill="url(#c156)"/><rect x="0" y="159" width="234" height="3" fill="url(#c159)"/><rect x="0" y="162" width="234" height="3" fill="url(#c162)"/><rect x="0" y="165" width="234" height="3" fill="url(#c165)"/><rect x="0" y="168" width="234" height="3" fill="url(#c168)"/><rect x="0" y="171" width="234" height="3" fill="url(#c171)"/><rect x="0" y="174" width="234" height="3" fill="url(#c174)"/><rect x="0" y="177" width="234" height="3" fill="url(#c177)"/><rect x="0" y="180" width="234" height="3" fill="url(#c180)"/><rect x="0" y="183" width="234" height="3" fill="url(#c183)"/><rect x="0" y="186" width="234" height="3" fill="url(#c186)"/><rect x="0" y="189" width="234" height="3" fill="url(#c189)"/><rect x="0" y="192" width="234" height="3" fill="url(#c192)"/><rect x="0" y="195" width="234" height="3" fill="url(#c195)"/><rect x="0" y="198" width="234" height="3" fill="url(#c198)"/><rect x="0" y="201" width="234" height="3" fill="url(#c201)"/><rect x="0" y="204" width="234" height="3" fill="url(#c204)"/><rect x="0" y="207" width="234" height="3" fill="url(#c207)"/><rect x="0" y="210" width="234" height="3" fill="url(#c210)"/><rect x="0" y="213" width="234" height="3" fill="url(#c213)"/><rect x="0" y="216" width="234" height="3" fill="url(#c216)"/><rect x="0" y="219" width="234" height="3" fill="url(#c219)"/><rect x="0" y="222" width="234" height="3" fill="url(#c222)"/><rect x="0" y="225" width="234" height="3" fill="url(#c225)"/><rect x="0" y="228" width="234" height="3" fill="url(#c228)"/><rect x="0" y="231" width="234" height="2" fill="url(#c231)"/></svg>
<div class="s" style="left:553px;top:298px;width:13px;height:13px"></div>
<div class="t" style="left:571.0px;top:298.7px;font-size:12.20px;transform:scaleX(0.877);transform-origin:0 0">Zoom</div>
<div class="b" style="left:553px;top:316px;width:48px;height:20px"><div style="position:absolute;left:0;right:0;top:2.5px;font-size:12.20px;line-height:1;transform:scaleX(0.877);transform-origin:50% 0">Z-Out</div></div>
<div class="a" style="left:616px;top:291px;width:174px;height:27px;background:#808080;border:1px solid #000"></div>
<div class="b" style="left:622px;top:295px;width:38px;height:19px"><div style="position:absolute;left:0;right:0;top:2.0px;font-size:12.20px;line-height:1;transform:scaleX(0.877);transform-origin:50% 0">Inp</div></div>
<div class="b" style="left:665px;top:295px;width:38px;height:19px"><div style="position:absolute;left:0;right:0;top:2.0px;font-size:12.20px;line-height:1;transform:scaleX(0.877);transform-origin:50% 0">I&gt;M</div></div>
<div class="b" style="left:707px;top:295px;width:38px;height:19px"><div style="position:absolute;left:0;right:0;top:2.0px;font-size:12.20px;line-height:1;transform:scaleX(0.877);transform-origin:50% 0">Outp</div></div>
<div class="b" style="left:750px;top:295px;width:39px;height:19px;background:#ffffd2"><div style="position:absolute;left:0;right:0;top:2.6px;font-size:12.20px;line-height:1;font-weight:bold"><span style="letter-spacing:1px;margin-left:1px">O&gt;M</span></div></div>
<div class="t" style="left:630.5px;top:322.7px;font-size:12.20px;transform:scaleX(0.877);transform-origin:0 0">Black Pt. Comp.</div>
<div class="s" style="left:710px;top:320px;width:78px;height:19px;background:#fff"><div style="position:absolute;left:4px;top:2.0px;font-size:12.20px;line-height:1;transform:scaleX(0.877);transform-origin:0 0">Both</div><div class="dd" style="width:17px"></div></div>
<div class="a" style="left:553px;top:341px;width:240px;height:27px;background:#808080;border:1px solid #000"></div>
<div class="s" style="left:556px;top:344px;width:232px;height:20px;background:#fff"><div style="position:absolute;left:4px;top:3.4px;font-size:11.50px;line-height:1;font-weight:bold">xy Chromaticity (Saturation map)</div><div class="dd" style="width:17px"></div></div>
<div class="pn" style="left:553px;top:369px;width:240px;height:160px"></div>
<div class="b" style="left:559px;top:375px;width:79px;height:23px"><div style="position:absolute;left:0;right:0;top:4.0px;font-size:12.20px;line-height:1;transform:scaleX(0.877);transform-origin:50% 0;color:#a0a0a0">Reset scale</div></div>
<div class="b" style="left:642px;top:375px;width:76px;height:23px"><div style="position:absolute;left:0;right:0;top:4.0px;font-size:12.20px;line-height:1;transform:scaleX(0.877);transform-origin:50% 0;color:#a0a0a0">Reset view</div></div>
<div class="b" style="left:723px;top:375px;width:66px;height:23px"><div style="position:absolute;left:0;right:0;top:4.0px;font-size:12.20px;line-height:1;transform:scaleX(0.877);transform-origin:50% 0;color:#a0a0a0">Top view</div></div>
<div class="s" style="left:558px;top:404px;width:13px;height:13px"><svg style="position:absolute;left:1px;top:1px" width="9" height="9"><path d="M1.5 4 L3.5 6.5 L7.5 1.5" stroke="#000" stroke-width="1.8" fill="none"/></svg></div>
<div class="t" style="left:576.4px;top:405.7px;font-size:12.20px;transform:scaleX(0.877);transform-origin:0 0">Wavelth</div>
<div class="s" style="left:627px;top:402px;width:161px;height:19px;background:#fff"><div style="position:absolute;left:4px;top:2.0px;font-size:12.20px;line-height:1;transform:scaleX(0.877);transform-origin:0 0">Normal/gamut boundaries</div><div class="dd" style="width:17px"></div></div>
<div class="pn" style="left:553px;top:469px;width:87px;height:29px"></div>
<div class="a" style="left:553px;top:497px;width:240px;height:1px;background:#000"></div>
<div class="b" style="left:558px;top:473px;width:77px;height:21px"><div style="position:absolute;left:0;right:0;top:3.7px;font-size:12.00px;line-height:1;font-weight:bold">Print Test</div></div>
<div class="s" style="left:558px;top:504px;width:230px;height:19px;background:#f0f0f0;text-align:center"><div style="position:absolute;left:0;right:0;top:3px;font-size:10.7px;line-height:1">not selected</div></div>
<div class="pn" style="left:559px;top:532px;width:143px;height:56px"></div>
<div class="t" style="left:569.5px;top:539.2px;font-size:11.60px;font-weight:bold">Display A</div>
<div class="b" style="left:650px;top:537px;width:47px;height:22px"><div style="position:absolute;left:0;right:0;top:4.1px;font-size:12.20px;line-height:1;font-weight:bold">View</div></div>
<div class="s" style="left:563px;top:561px;width:39px;height:20px;background:#fff"><div style="position:absolute;left:3px;top:2.5px;font-size:12.20px;line-height:1;transform:scaleX(0.877);transform-origin:0 0">1</div><div class="dd" style="width:17px"></div></div>
<div class="t" style="left:611.6px;top:565.7px;font-size:12.20px;transform:scaleX(0.877);transform-origin:0 0">IN</div>
<div class="t" style="left:628.8px;top:565.7px;font-size:12.20px;transform:scaleX(0.877);transform-origin:0 0">OUT</div>
<div class="s" style="left:659px;top:561px;width:39px;height:20px;background:#fff"><div style="position:absolute;left:3px;top:2.5px;font-size:12.20px;line-height:1;transform:scaleX(0.877);transform-origin:0 0">3</div><div class="dd" style="width:17px"></div></div>
<div class="pn" style="left:559px;top:593px;width:143px;height:56px"></div>
<div class="t" style="left:569.5px;top:600.2px;font-size:11.60px;font-weight:bold">Display B</div>
<div class="b" style="left:650px;top:598px;width:47px;height:22px"><div style="position:absolute;left:0;right:0;top:4.1px;font-size:12.20px;line-height:1;font-weight:bold">View</div></div>
<div class="s" style="left:563px;top:622px;width:39px;height:20px;background:#fff"><div style="position:absolute;left:3px;top:2.5px;font-size:12.20px;line-height:1;transform:scaleX(0.877);transform-origin:0 0">2</div><div class="dd" style="width:17px"></div></div>
<div class="t" style="left:611.6px;top:626.7px;font-size:12.20px;transform:scaleX(0.877);transform-origin:0 0">IN</div>
<div class="t" style="left:628.8px;top:626.7px;font-size:12.20px;transform:scaleX(0.877);transform-origin:0 0">OUT</div>
<div class="s" style="left:659px;top:622px;width:39px;height:20px;background:#fff"><div style="position:absolute;left:3px;top:2.5px;font-size:12.20px;line-height:1;transform:scaleX(0.877);transform-origin:0 0">4</div><div class="dd" style="width:17px"></div></div>
<div class="b" style="left:720px;top:532px;width:69px;height:23px"><div style="position:absolute;left:0;right:0;top:5.1px;font-size:11.00px;line-height:1">Help</div></div>
<div class="b" style="left:720px;top:565px;width:69px;height:22px"><div style="position:absolute;left:0;right:0;top:4.6px;font-size:11.00px;line-height:1">Exit</div></div>
<svg class="a" style="left:709px;top:596px" width="80" height="48" viewBox="0 0 80 48">
<defs><linearGradient id="lg1" x1="0" x2="1" y1="0" y2="0"><stop offset="0" stop-color="#000070"/><stop offset="1" stop-color="#0000d8"/></linearGradient>
<linearGradient id="lg2" x1="0" x2="1"><stop offset="0" stop-color="#003000"/><stop offset=".5" stop-color="#007000"/><stop offset="1" stop-color="#008000"/></linearGradient></defs>
<rect width="80" height="48" fill="url(#lg1)"/>
<path d="M0 0 H80 V11 Z" fill="url(#lg2)"/>
<path d="M0 0 L80 11 V17 Z" fill="#fff"/>
<path d="M0 0 L80 17 V23 Z" fill="#d03000"/>
<path d="M0 0 L80 23 V26 Z" fill="#fff"/>
<path d="M0 0 L80 26 V29 Z" fill="#a020a0"/>
<path d="M0 0 L80 29 V31 Z" fill="#fff"/>
<path d="M4.5 8.5 C6 6.5 8 6.5 10 7.5 L31.5 20.5 L9 28 C6 23 3.5 14 4.5 8.5 Z" fill="#fff8c0"/>
<text x="2.8" y="44.6" font-family="Liberation Serif,serif" font-style="italic" font-weight="bold" font-size="17" fill="#fff" textLength="75.5" lengthAdjust="spacingAndGlyphs">Gamutvision</text>
</svg>
<div class="t" style="left:9.5px;top:578.4px;font-size:12.50px;font-weight:bold">1</div>
<div class="t" style="left:9.5px;top:630.4px;font-size:12.50px;font-weight:bold">2</div>
<div class="t" style="left:536.0px;top:578.4px;font-size:12.50px;font-weight:bold">3</div>
<div class="t" style="left:536.0px;top:630.4px;font-size:12.50px;font-weight:bold">4</div>
<div class="s" style="left:20px;top:575px;width:253px;height:20px;background:#ffffd2"><div style="position:absolute;left:2px;top:2.5px;font-size:12.20px;line-height:1;transform:scaleX(0.877);transform-origin:0 0">*sRGB</div><div class="dd" style="width:17px"></div></div>
<div class="s" style="left:278px;top:575px;width:253px;height:20px;background:#f0f0f0"><div style="position:absolute;left:4px;top:2.5px;font-size:12.20px;line-height:1;transform:scaleX(0.877);transform-origin:0 0">Browse...</div><div class="dd" style="width:17px"></div></div>
<div class="a" style="left:20px;top:596px;width:223px;height:31px;background:#4a7bcb;border-left:1px solid #303030;border-top:1px solid #303030;border-right:2px solid #202020"></div>
<div class="b" style="left:25px;top:601px;width:47px;height:23px;background:#ffffd2"><div style="position:absolute;left:0;right:0;top:4.7px;font-size:12.00px;line-height:1;font-weight:bold">View</div></div>
<div class="s" style="left:95px;top:602px;width:142px;height:19px;background:#ffffee"><div style="position:absolute;left:3px;top:2.0px;font-size:12.20px;line-height:1;transform:scaleX(0.877);transform-origin:0 0">None (or Print Test)</div><div class="dd" style="width:17px"></div></div>
<div class="t" style="left:250.2px;top:605.7px;font-size:12.20px;transform:scaleX(0.877);transform-origin:0 0">Rendering</div>
<div class="a" style="left:308px;top:596px;width:222px;height:31px;background:#808080;border-left:2px solid #202020;border-top:1px solid #303030;border-right:1px solid #202020"></div>
<div class="s" style="left:312px;top:602px;width:143px;height:20px;background:#f0f0f0"><div style="position:absolute;left:3px;top:2.5px;font-size:12.20px;line-height:1;transform:scaleX(0.877);transform-origin:0 0">Absolute</div><div class="dd" style="width:17px"></div></div>
<div class="b" style="left:480px;top:601px;width:47px;height:23px"><div style="position:absolute;left:0;right:0;top:4.7px;font-size:12.00px;line-height:1;font-weight:bold">View</div></div>
<div class="a" style="left:7px;top:597px;width:12px;height:28px;background:#dcdcdc"><svg width="12" height="28"><path d="M6 2 V20" stroke="#555" stroke-width="3"/><path d="M1.5 18 L10.5 18 L6 27 Z" fill="#555"/></svg></div>
<div class="a" style="left:533px;top:597px;width:12px;height:28px;background:#dcdcdc"><svg width="12" height="28"><path d="M6 2 V20" stroke="#555" stroke-width="3"/><path d="M1.5 18 L10.5 18 L6 27 Z" fill="#555"/></svg></div>
<div class="s" style="left:20px;top:628px;width:253px;height:19px;background:#e2ffe2"><div style="position:absolute;left:2px;top:2.0px;font-size:12.20px;line-height:1;transform:scaleX(0.877);transform-origin:0 0">FI32U_calib_argyll.icm</div><div class="dd" style="width:17px"></div></div>
<div class="s" style="left:278px;top:627px;width:253px;height:20px;background:#f0f0f0"><div style="position:absolute;left:4px;top:2.5px;font-size:12.20px;line-height:1;transform:scaleX(0.877);transform-origin:0 0">Browse...</div><div class="dd" style="width:17px"></div></div>
</body></html>
